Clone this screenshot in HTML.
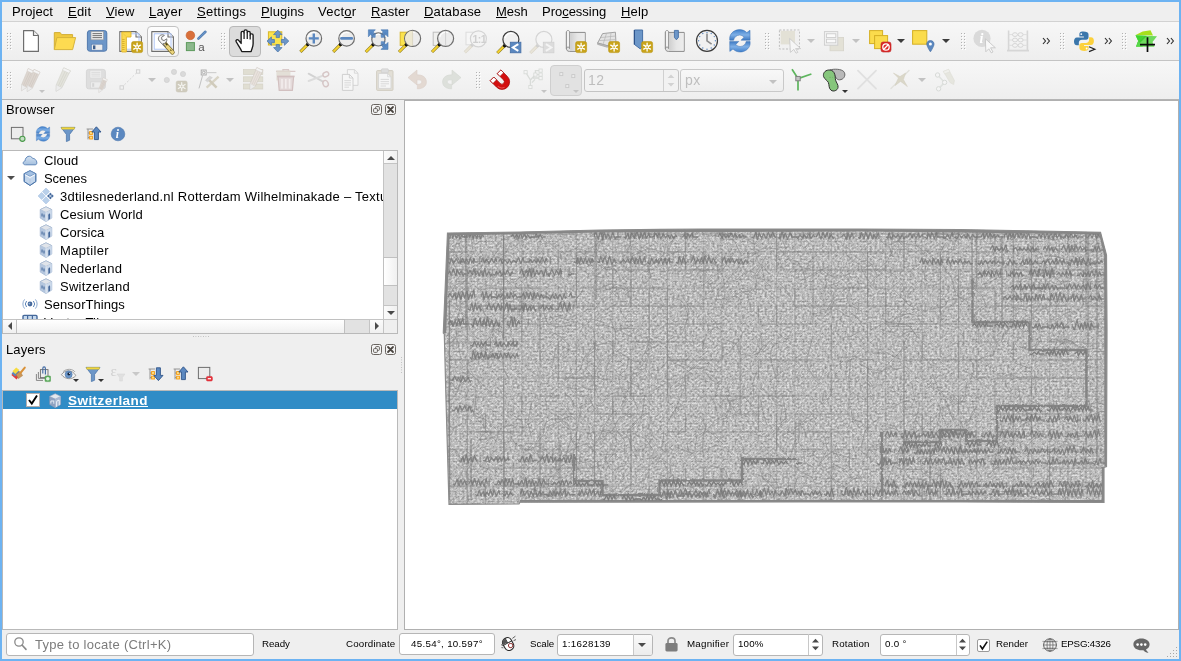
<!DOCTYPE html>
<html>
<head>
<meta charset="utf-8">
<title>QGIS</title>
<style>
*{box-sizing:border-box;margin:0;padding:0}
html,body{width:1181px;height:661px;overflow:hidden;background:#6db3f2}
body{position:relative;font-family:"Liberation Sans",sans-serif;font-size:13px;letter-spacing:0.27px;color:#000}
.abs{position:absolute}
#menubar span,.row,.ptitle,.sb,.gt,.ic,.sic{will-change:transform}
#win{position:absolute;left:2px;top:2px;width:1177px;height:657px;background:#efefef;overflow:hidden}
/* menu */
#menubar{position:absolute;left:0;top:0;width:1177px;height:19px;background:#efefef}
#menubar span{position:absolute;top:2px;height:16px;line-height:16px;white-space:nowrap}
#menubar u{text-decoration:underline;text-underline-offset:1px}
.hline{position:absolute;left:0;width:1177px;height:1px}
/* toolbars */
.tb{position:absolute;left:0;width:1177px;height:38px;background:linear-gradient(#f7f7f7,#eeeeee)}
.ic{position:absolute;width:24px;height:24px}
.ic svg{display:block;width:24px;height:24px;overflow:visible}
.grip{position:absolute;width:5px;height:22px;background-image:radial-gradient(circle at 0.5px 0.5px,#b4b4b4 0.6px,transparent 0.8px);background-size:3px 3px}
.dd{position:absolute;width:0;height:0;border-left:4px solid transparent;border-right:4px solid transparent;border-top:4px solid #3c3c3c}
.dd.dis{border-top-color:#c2c2c2}
.chev{position:absolute;width:10px;height:9px}
.chev svg{display:block}
/* panels */
.ptitle{position:absolute;left:4px;height:16px;line-height:16px}
.pbtn{position:absolute;width:11px;height:11px}
.tree{position:absolute;background:#fff;border:1px solid #b9b9b9}
.row{position:absolute;left:0;height:18px;line-height:18px;white-space:nowrap}
.sic{position:absolute;width:16px;height:16px}
.sic svg{display:block;width:16px;height:16px;overflow:visible}
/* status */
.sb{position:absolute;font-size:9.75px;letter-spacing:0.2px;line-height:14px;white-space:nowrap}
.field{position:absolute;background:#fff;border:1px solid #b6b6b6;border-radius:3px}
</style>
</head>
<body>
<div id="win">
<svg width="0" height="0" style="position:absolute"><defs>
<linearGradient id="gscr" x1="0" y1="0" x2="1" y2="0"><stop offset="0" stop-color="#cfcfcf"/><stop offset="0.5" stop-color="#e6e6e6"/><stop offset="1" stop-color="#ededed"/></linearGradient>
<linearGradient id="gref" x1="0" y1="0" x2="0" y2="1"><stop offset="0" stop-color="#3f7fcb"/><stop offset="0.5" stop-color="#7fb0e6"/><stop offset="1" stop-color="#3c78c2"/></linearGradient>
<linearGradient id="gcl" x1="0" y1="0" x2="0" y2="1"><stop offset="0" stop-color="#d3e1f1"/><stop offset="1" stop-color="#a5c0de"/></linearGradient>
</defs></svg>

<!-- MENUBAR -->
<div id="menubar">
<span style="left:10px;letter-spacing:0.085px">Project</span>
<span style="left:66px;letter-spacing:0.211px"><u>E</u>dit</span>
<span style="left:104px;letter-spacing:0.133px"><u>V</u>iew</span>
<span style="left:147px;letter-spacing:0.188px"><u>L</u>ayer</span>
<span style="left:195px;letter-spacing:0.279px"><u>S</u>ettings</span>
<span style="left:259px;letter-spacing:0.049px"><u>P</u>lugins</span>
<span style="left:316px;letter-spacing:0.232px">Vect<u>o</u>r</span>
<span style="left:369px;letter-spacing:0.068px"><u>R</u>aster</span>
<span style="left:422px;letter-spacing:0.201px"><u>D</u>atabase</span>
<span style="left:494px;letter-spacing:-0.051px"><u>M</u>esh</span>
<span style="left:540px;letter-spacing:-0.023px">Pro<u>c</u>essing</span>
<span style="left:619px;letter-spacing:0.152px"><u>H</u>elp</span>
</div>
<div class="hline" style="top:19px;background:#d2d2d2"></div>

<!-- TOOLBAR 1 -->
<div class="tb" id="tb1" style="top:20px">
<div class="abs" style="left:5px;top:11px"><svg width="6" height="18" viewBox="0 0 6 18" style="display:block"><rect x="1" y="1" width="1" height="1" fill="#fff"/><rect x="0" y="0" width="1" height="1" fill="#b2b2b2"/><rect x="4" y="1" width="1" height="1" fill="#fff"/><rect x="3" y="0" width="1" height="1" fill="#b2b2b2"/><rect x="1" y="4" width="1" height="1" fill="#fff"/><rect x="0" y="3" width="1" height="1" fill="#b2b2b2"/><rect x="4" y="4" width="1" height="1" fill="#fff"/><rect x="3" y="3" width="1" height="1" fill="#b2b2b2"/><rect x="1" y="7" width="1" height="1" fill="#fff"/><rect x="0" y="6" width="1" height="1" fill="#b2b2b2"/><rect x="4" y="7" width="1" height="1" fill="#fff"/><rect x="3" y="6" width="1" height="1" fill="#b2b2b2"/><rect x="1" y="10" width="1" height="1" fill="#fff"/><rect x="0" y="9" width="1" height="1" fill="#b2b2b2"/><rect x="4" y="10" width="1" height="1" fill="#fff"/><rect x="3" y="9" width="1" height="1" fill="#b2b2b2"/><rect x="1" y="13" width="1" height="1" fill="#fff"/><rect x="0" y="12" width="1" height="1" fill="#b2b2b2"/><rect x="4" y="13" width="1" height="1" fill="#fff"/><rect x="3" y="12" width="1" height="1" fill="#b2b2b2"/><rect x="1" y="16" width="1" height="1" fill="#fff"/><rect x="0" y="15" width="1" height="1" fill="#b2b2b2"/><rect x="4" y="16" width="1" height="1" fill="#fff"/><rect x="3" y="15" width="1" height="1" fill="#b2b2b2"/></svg></div>
<div class="abs" style="left:145px;top:4px;width:32px;height:31px;border:1px solid #c2c2c2;border-radius:4px;background:linear-gradient(#fdfdfd,#f3f3f3)"></div>
<div class="abs" style="left:227px;top:4px;width:32px;height:31px;border:1px solid #b8b8b8;border-radius:4px;background:#dcdcdc"></div>
<div class="ic" style="left:17px;top:7px"><svg viewBox="0 0 24 24"><path d="M4.6 1.6H14.5L19.4 6.5V22.4H4.6Z" fill="#fff" stroke="#6e6e6e" stroke-width="1.2" stroke-linejoin="round"/><path d="M14.5 1.6V6.5H19.4" fill="#f0f0f0" stroke="#6e6e6e" stroke-width="1.2" stroke-linejoin="round"/></svg></div>
<div class="ic" style="left:49.5px;top:7px"><svg viewBox="0 0 24 24"><path d="M2.3 20.5V3.6H8.2L9.6 5.6H20.6V8.6" fill="#f0c93e" stroke="#d2ae35" stroke-width="1" stroke-linejoin="round"/><path d="M2.3 20.6L4.9 8.6H23.6L20.6 20.6Z" fill="#fddb51" stroke="#d6b33a" stroke-width="1" stroke-linejoin="round"/></svg></div>
<div class="ic" style="left:83px;top:7px"><svg viewBox="0 0 24 24"><rect x="2.4" y="1.6" width="19.4" height="20.6" rx="2.4" fill="#6c96c8" stroke="#5179ad" stroke-width="1"/><rect x="6" y="2.6" width="12.4" height="8.2" fill="#ececec" stroke="#9a9a9a" stroke-width="0.6"/><path d="M7.5 4.6H17M7.5 6.6H17M7.5 8.6H17" stroke="#666" stroke-width="0.9"/><rect x="6.4" y="15.2" width="11.4" height="6" fill="#ececec" stroke="#5179ad" stroke-width="0.6"/><rect x="8" y="16.4" width="2.4" height="3.8" fill="#3f5f8c"/></svg></div>
<div class="ic" style="left:116.5px;top:7px"><svg viewBox="0 0 24 24"><path d="M0.8 2.6H17L22.4 8V22.4H0.8Z" fill="#fff" stroke="#6e6e6e" stroke-width="1.1" stroke-linejoin="round"/><path d="M17 2.6V8H22.4" fill="#f4f4f4" stroke="#6e6e6e" stroke-width="1.1" stroke-linejoin="round"/><rect x="3.4" y="4.8" width="16.6" height="15.4" fill="none" stroke="#a9c0f5" stroke-width="0.9"/><path d="M2.8 3H12V8H7.4V23H2.8Z" fill="#fbd84e" stroke="#e0b62c" stroke-width="0.9" stroke-linejoin="round"/><path d="M3.2 10.5H5.6M3.2 12.5H5.6M3.2 14.5H5.6M3.2 16.5H5.6M3.2 18.5H5.6M3.2 20.5H5.6" stroke="#c9a226" stroke-width="0.7"/><path d="M4 4.4L7 7.4" stroke="#e9c541" stroke-width="0.8"/><rect x="12.6" y="12.6" width="11" height="11" rx="1.8" fill="#c9a41b" stroke="#b8930f" stroke-width="0.6"/>
<g stroke="#fff" stroke-width="1.3" stroke-linecap="round"><path d="M18.1 14.2V22.0M14.7 16.1L21.5 20.1M14.7 20.1L21.5 16.1"/></g><circle cx="18.1" cy="18.1" r="1.9" fill="#fff"/><circle cx="18.1" cy="18.1" r="0.9" fill="#c9a41b"/></svg></div>
<div class="ic" style="left:149px;top:7px"><svg viewBox="0 0 24 24"><path d="M0.8 2.6H17L22.4 8V22.4H0.8Z" fill="#fff" stroke="#6e6e6e" stroke-width="1.1" stroke-linejoin="round"/><path d="M17 2.6V8H22.4" fill="#f4f4f4" stroke="#6e6e6e" stroke-width="1.1" stroke-linejoin="round"/><rect x="3.2" y="4.8" width="16.8" height="15.4" fill="none" stroke="#a9c0f5" stroke-width="0.9"/><path d="M13.6 14.6L21.4 23.2" stroke="#7a6a2a" stroke-width="4.6" stroke-linecap="round"/><path d="M13.6 14.6L21.4 23.2" stroke="#ecd57c" stroke-width="3.2" stroke-linecap="round"/><path d="M14.6 14.2L16.4 16.2" stroke="#4a3f12" stroke-width="1.6"/><path d="M19.2 20.6L20.4 21.9" stroke="#6b5c1e" stroke-width="1.1"/><path d="M7.6 10.8C6.8 8.6 8.4 6 11.2 5.8C12 5.8 12.8 6 13.4 6.4L10.6 8.2L10.8 10.6L13 11.6L15.8 9.8C16.2 12.4 14.6 14.6 12 14.8L14.6 17.6L11.6 15.6L10 13.6C8.8 13 8 12 7.6 10.8Z" fill="#f4f4f4" stroke="#787878" stroke-width="1" stroke-linejoin="round"/></svg></div>
<div class="ic" style="left:182px;top:7px"><svg viewBox="0 0 24 24"><circle cx="6.4" cy="6.4" r="4.3" fill="#d9703b" stroke="#c45f2c" stroke-width="0.6"/><path d="M14.4 9.6L21.4 2.8" stroke="#4e79ad" stroke-width="2.6" stroke-linecap="round"/><path d="M14.4 9.6L21.4 2.8" stroke="#6b96c9" stroke-width="1.2" stroke-linecap="round"/><rect x="2.4" y="13.6" width="8" height="8" fill="#8cb88c" stroke="#5d9a5d" stroke-width="1"/><text x="14.2" y="21.6" font-family="Liberation Sans,sans-serif" font-size="11.5" fill="#555" letter-spacing="0">a</text></svg></div>
<div class="abs" style="left:219px;top:11px"><svg width="6" height="18" viewBox="0 0 6 18" style="display:block"><rect x="1" y="1" width="1" height="1" fill="#fff"/><rect x="0" y="0" width="1" height="1" fill="#b2b2b2"/><rect x="4" y="1" width="1" height="1" fill="#fff"/><rect x="3" y="0" width="1" height="1" fill="#b2b2b2"/><rect x="1" y="4" width="1" height="1" fill="#fff"/><rect x="0" y="3" width="1" height="1" fill="#b2b2b2"/><rect x="4" y="4" width="1" height="1" fill="#fff"/><rect x="3" y="3" width="1" height="1" fill="#b2b2b2"/><rect x="1" y="7" width="1" height="1" fill="#fff"/><rect x="0" y="6" width="1" height="1" fill="#b2b2b2"/><rect x="4" y="7" width="1" height="1" fill="#fff"/><rect x="3" y="6" width="1" height="1" fill="#b2b2b2"/><rect x="1" y="10" width="1" height="1" fill="#fff"/><rect x="0" y="9" width="1" height="1" fill="#b2b2b2"/><rect x="4" y="10" width="1" height="1" fill="#fff"/><rect x="3" y="9" width="1" height="1" fill="#b2b2b2"/><rect x="1" y="13" width="1" height="1" fill="#fff"/><rect x="0" y="12" width="1" height="1" fill="#b2b2b2"/><rect x="4" y="13" width="1" height="1" fill="#fff"/><rect x="3" y="12" width="1" height="1" fill="#b2b2b2"/><rect x="1" y="16" width="1" height="1" fill="#fff"/><rect x="0" y="15" width="1" height="1" fill="#b2b2b2"/><rect x="4" y="16" width="1" height="1" fill="#fff"/><rect x="3" y="15" width="1" height="1" fill="#b2b2b2"/></svg></div>
<div class="ic" style="left:231px;top:7px"><svg viewBox="0 0 24 24"><g transform="translate(-0.9,-1) scale(1.13,1.045)"><path d="M8.6 22.6C7.6 19.6 5.2 16.4 3.6 13.2C2.8 11.6 4.6 10.4 5.8 11.8L8 14.8V4.6C8 2.8 10.6 2.8 10.6 4.6V3.2C10.6 1.4 13.4 1.4 13.4 3.2V4.4C13.4 2.8 16 2.8 16 4.6V6.6C16 5.2 18.6 5.2 18.6 7V15C18.6 18 17.4 19.8 16.8 22.6Z" fill="#fff" stroke="#1a1a1a" stroke-width="1.2" stroke-linejoin="round"/><path d="M10.6 4.6V10.6M13.4 4.4V10.6M16 6.6V11" stroke="#1a1a1a" stroke-width="1.1" fill="none"/></g></svg></div>
<div class="ic" style="left:264px;top:7px"><svg viewBox="0 0 24 24"><rect x="2.4" y="2.8" width="13.4" height="13.2" fill="#fbe34d" stroke="#d7b629" stroke-width="1"/><g fill="#6c96c8" stroke="#4f78ab" stroke-width="0.8" stroke-linejoin="round"><path d="M11.8 1.2L16 5.6H13.4V8.6H10.2V5.6H7.6Z"/><path d="M11.8 23L16 18.6H13.4V15.6H10.2V18.6H7.6Z"/><path d="M1 12.1L5.4 7.9V10.5H8.4V13.7H5.4V16.3Z"/><path d="M22.8 12.1L18.4 7.9V10.5H15.4V13.7H18.4V16.3Z"/></g></svg></div>
<div class="ic" style="left:297px;top:7px"><svg viewBox="0 0 24 24"><path d="M9.0 15.2L1.4 22.8" stroke="#8a7a20" stroke-width="3.1" stroke-linecap="butt"/><path d="M9.0 15.2L1.6 22.6" stroke="#f5d230" stroke-width="2" stroke-linecap="butt"/><circle cx="8.7" cy="15.5" r="1.7" fill="#111"/><circle cx="14.8" cy="9.4" r="7.8" fill="#ececec" stroke="#6e6e6e" stroke-width="1.2"/><path d="M9.2 8.2A5.8 5.8 0 0 1 17.1 3.8" stroke="#fff" stroke-width="1.4" fill="none" opacity="0.9"/><path d="M14.8 4.4V14.4M9.8 9.4H19.8" stroke="#5b88c0" stroke-width="2.4"/></svg></div>
<div class="ic" style="left:330px;top:7px"><svg viewBox="0 0 24 24"><path d="M8.8 15.2L1.2 22.8" stroke="#8a7a20" stroke-width="3.1" stroke-linecap="butt"/><path d="M8.8 15.2L1.4 22.6" stroke="#f5d230" stroke-width="2" stroke-linecap="butt"/><circle cx="8.5" cy="15.5" r="1.7" fill="#111"/><circle cx="14.6" cy="9.4" r="7.8" fill="#ececec" stroke="#6e6e6e" stroke-width="1.2"/><path d="M9.0 8.2A5.8 5.8 0 0 1 16.9 3.8" stroke="#fff" stroke-width="1.4" fill="none" opacity="0.9"/><path d="M9.4 9.4H19.8" stroke="#5b88c0" stroke-width="2.6" stroke-linecap="round"/></svg></div>
<div class="ic" style="left:363px;top:7px"><svg viewBox="0 0 24 24"><g fill="#5b8cc6" stroke="#4a78b0" stroke-width="0.6" stroke-linejoin="round"><path d="M3.4 0.8H10.4L8.2 3L11 5.8L8.4 8.4L5.6 5.6L3.4 7.8Z"/><path d="M23 0.8H16L18.2 3L15.4 5.8L18 8.4L20.8 5.6L23 7.8Z"/><path d="M23 20.4H16L18.2 18.2L15.4 15.4L18 12.8L20.8 15.6L23 13.4Z"/></g><path d="M8.4 15.4L0.8 23.0" stroke="#8a7a20" stroke-width="3.1" stroke-linecap="butt"/><path d="M8.4 15.4L1.0 22.8" stroke="#f5d230" stroke-width="2" stroke-linecap="butt"/><circle cx="8.1" cy="15.7" r="1.7" fill="#111"/><circle cx="13.4" cy="10.4" r="6.6" fill="#e9e9e9" stroke="#6e6e6e" stroke-width="1.2"/><path d="M8.6 9.4A4.9 4.9 0 0 1 15.4 5.6" stroke="#fff" stroke-width="1.4" fill="none" opacity="0.9"/><g fill="#5b8cc6" stroke="#4a78b0" stroke-width="0.5" stroke-linejoin="round"><path d="M6.2 3.6L8.6 6L10.4 4.2L10.2 8.4L6 8.2L7.6 6.8L5.4 4.6Z" opacity="0.95"/><path d="M20.2 3.6L17.8 6L16 4.2L16.2 8.4L20.4 8.2L18.8 6.8L21 4.6Z" opacity="0.95"/><path d="M20.2 17.4L17.8 15L16 16.8L16.2 12.6L20.4 12.8L18.8 14.2L21 16.4Z" opacity="0.95"/></g></svg></div>
<div class="ic" style="left:396px;top:7px"><svg viewBox="0 0 24 24"><rect x="2.2" y="3.2" width="9" height="13.2" fill="#fbe34d" stroke="#d7b629" stroke-width="1"/><path d="M8.6 15.4L1.0 23.0" stroke="#8a7a20" stroke-width="3.1" stroke-linecap="butt"/><path d="M8.6 15.4L1.2 22.8" stroke="#f5d230" stroke-width="2" stroke-linecap="butt"/><circle cx="8.3" cy="15.7" r="1.7" fill="#111"/><circle cx="14.6" cy="9.4" r="8" fill="#ececec" stroke="#6e6e6e" stroke-width="1.2"/><path d="M8.8 8.2A6.0 6.0 0 0 1 17.0 3.6" stroke="#fff" stroke-width="1.4" fill="none" opacity="0.9"/><path d="M14.6 1.8A7.6 7.6 0 0 0 14.6 17Z" fill="#ede8cf" opacity="0.9"/><path d="M14.6 1.8V17" stroke="#cfcab0" stroke-width="0.6"/></svg></div>
<div class="ic" style="left:429px;top:7px"><svg viewBox="0 0 24 24"><rect x="2.2" y="3.2" width="9" height="13.2" fill="#f0f0ee" stroke="#bdbdbd" stroke-width="1"/><path d="M8.6 15.4L1.0 23.0" stroke="#8a7a20" stroke-width="3.1" stroke-linecap="butt"/><path d="M8.6 15.4L1.2 22.8" stroke="#f5d230" stroke-width="2" stroke-linecap="butt"/><circle cx="8.3" cy="15.7" r="1.7" fill="#111"/><circle cx="14.6" cy="9.4" r="8" fill="#ececec" stroke="#6e6e6e" stroke-width="1.2"/><path d="M8.8 8.2A6.0 6.0 0 0 1 17.0 3.6" stroke="#fff" stroke-width="1.4" fill="none" opacity="0.9"/><path d="M14.6 1.8V17" stroke="#c8c8c8" stroke-width="0.8"/></svg></div>
<div class="ic" style="left:462px;top:7px"><svg viewBox="0 0 24 24"><rect x="2" y="3.2" width="9" height="12.6" fill="#f6f6f6" stroke="#dcdcdc" stroke-width="1"/><path d="M8.4 15.8L0.8 23.4" stroke="#d8d4c8" stroke-width="3.1" stroke-linecap="butt"/><path d="M8.4 15.8L1.0 23.2" stroke="#e8e4d8" stroke-width="2" stroke-linecap="butt"/><circle cx="8.1" cy="16.1" r="1.7" fill="#d0d0d0"/><circle cx="14.4" cy="9.8" r="8" fill="#f4f4f4" stroke="#d4d4d4" stroke-width="1.2"/><text x="8.6" y="14" font-family="Liberation Sans,sans-serif" font-weight="bold" font-size="10.5" fill="#cfcfcf" letter-spacing="-0.6">1:1</text></svg></div>
<div class="ic" style="left:495px;top:7px"><svg viewBox="0 0 24 24"><g transform="translate(0.9,0.8)"><path d="M7.0 15.6L-0.6 23.2" stroke="#8a7a20" stroke-width="3.1" stroke-linecap="butt"/><path d="M7.0 15.6L-0.4 23.0" stroke="#f5d230" stroke-width="2" stroke-linecap="butt"/><circle cx="6.7" cy="15.9" r="1.7" fill="#111"/><circle cx="13" cy="9.6" r="8" fill="#f0f0f0" stroke="#3a3a3a" stroke-width="1.2"/><path d="M7.2 8.4A6.0 6.0 0 0 1 15.4 3.8" stroke="#fff" stroke-width="1.4" fill="none" opacity="0.9"/><rect x="12.4" y="12.4" width="10.6" height="10.6" fill="#5b88c0" stroke="#456fa5" stroke-width="0.8"/><path d="M20.4 14.4L15 17.7L20.4 21" stroke="#fff" stroke-width="2" fill="none" stroke-linejoin="miter"/></g></svg></div>
<div class="ic" style="left:528px;top:7px"><svg viewBox="0 0 24 24"><g transform="translate(0.9,0.8)"><path d="M7.0 15.6L-0.6 23.2" stroke="#d8d4c8" stroke-width="3.1" stroke-linecap="butt"/><path d="M7.0 15.6L-0.4 23.0" stroke="#e8e4d8" stroke-width="2" stroke-linecap="butt"/><circle cx="6.7" cy="15.9" r="1.7" fill="#d0d0d0"/><circle cx="13" cy="9.6" r="8" fill="#f4f4f4" stroke="#d4d4d4" stroke-width="1.2"/><rect x="12.4" y="12.4" width="10.6" height="10.6" fill="#dcdcdc" stroke="#d0d0d0" stroke-width="0.8"/><path d="M15 14.4L20.4 17.7L15 21" stroke="#f4f4f4" stroke-width="2" fill="none"/></g></svg></div>
<div class="ic" style="left:561px;top:7px"><svg viewBox="0 0 24 24"><path d="M3.4 3V19.4C3.4 21.4 4.6 22.4 6.4 22.4H22.2V3.4H6.6" fill="#e2e2e2" stroke="#8a8a8a" stroke-width="1" stroke-linejoin="round"/><path d="M3.4 3C3.4 1 6.6 1 6.6 3V19.6C6.6 17.6 3.4 17.6 3.4 19.6Z" fill="#f2f2f2" stroke="#8a8a8a" stroke-width="0.9"/><path d="M7.2 4H21.6V21.6H7.2Z" fill="url(#gscr)" stroke="none"/><rect x="12.6" y="12.6" width="11" height="11" rx="1.8" fill="#c9a41b" stroke="#b8930f" stroke-width="0.6"/>
<g stroke="#fff" stroke-width="1.3" stroke-linecap="round"><path d="M18.1 14.2V22.0M14.7 16.1L21.5 20.1M14.7 20.1L21.5 16.1"/></g><circle cx="18.1" cy="18.1" r="1.9" fill="#fff"/><circle cx="18.1" cy="18.1" r="0.9" fill="#c9a41b"/></svg></div>
<div class="ic" style="left:594px;top:7px"><svg viewBox="0 0 24 24"><path d="M6.6 4.6L19.4 3.2L20 14.6L11 16.6L1.6 14Z" fill="#e4e4e4" stroke="#9a9a9a" stroke-width="0.9" stroke-linejoin="round"/><path d="M1.6 14L11 16.6L20 14.6V16L11 18.2L1.6 15.4Z" fill="#bdbdbd" stroke="#9a9a9a" stroke-width="0.6"/><path d="M10.6 4.2L7 15.4M15 3.8L13.6 16M4.6 8.6L19.6 7M3 11.6L19.8 10.6" stroke="#b4b4b4" stroke-width="0.7" fill="none"/><rect x="12.6" y="12.6" width="11" height="11" rx="1.8" fill="#c9a41b" stroke="#b8930f" stroke-width="0.6"/>
<g stroke="#fff" stroke-width="1.3" stroke-linecap="round"><path d="M18.1 14.2V22.0M14.7 16.1L21.5 20.1M14.7 20.1L21.5 16.1"/></g><circle cx="18.1" cy="18.1" r="1.9" fill="#fff"/><circle cx="18.1" cy="18.1" r="0.9" fill="#c9a41b"/></svg></div>
<div class="ic" style="left:627px;top:7px"><svg viewBox="0 0 24 24"><path d="M5.4 1H13.6V17.4L11.4 20L5.4 15.4Z" fill="#6c96c8" stroke="#456fa5" stroke-width="1" stroke-linejoin="round"/><path d="M5.4 1V15.4" stroke="#2e538a" stroke-width="1.2"/><rect x="12.6" y="12.6" width="11" height="11" rx="1.8" fill="#c9a41b" stroke="#b8930f" stroke-width="0.6"/>
<g stroke="#fff" stroke-width="1.3" stroke-linecap="round"><path d="M18.1 14.2V22.0M14.7 16.1L21.5 20.1M14.7 20.1L21.5 16.1"/></g><circle cx="18.1" cy="18.1" r="1.9" fill="#fff"/><circle cx="18.1" cy="18.1" r="0.9" fill="#c9a41b"/></svg></div>
<div class="ic" style="left:660px;top:7px"><svg viewBox="0 0 24 24"><path d="M3.4 3V19.4C3.4 21.4 4.6 22.4 6.4 22.4H22.2V3.4H6.6" fill="#e2e2e2" stroke="#8a8a8a" stroke-width="1" stroke-linejoin="round"/><path d="M3.4 3C3.4 1 6.6 1 6.6 3V19.6C6.6 17.6 3.4 17.6 3.4 19.6Z" fill="#f2f2f2" stroke="#8a8a8a" stroke-width="0.9"/><path d="M7.2 4H21.6V21.6H7.2Z" fill="url(#gscr)" stroke="none"/><path d="M12.4 1.4H16.4V8.4L14.4 10.8L12.4 8.4Z" fill="#6c96c8" stroke="#456fa5" stroke-width="0.9" stroke-linejoin="round"/></svg></div>
<div class="ic" style="left:693px;top:7px"><svg viewBox="0 0 24 24"><circle cx="12" cy="11.8" r="10.5" fill="#f1f1f1" stroke="#3c3c3c" stroke-width="1.2"/><circle cx="20.40" cy="11.80" r="0.7" fill="#5b88c0"/><circle cx="19.27" cy="16.00" r="0.7" fill="#5b88c0"/><circle cx="16.20" cy="19.07" r="0.7" fill="#5b88c0"/><circle cx="12.00" cy="20.20" r="0.7" fill="#5b88c0"/><circle cx="7.80" cy="19.07" r="0.7" fill="#5b88c0"/><circle cx="4.73" cy="16.00" r="0.7" fill="#5b88c0"/><circle cx="3.60" cy="11.80" r="0.7" fill="#5b88c0"/><circle cx="4.73" cy="7.60" r="0.7" fill="#5b88c0"/><circle cx="7.80" cy="4.53" r="0.7" fill="#5b88c0"/><circle cx="12.00" cy="3.40" r="0.7" fill="#5b88c0"/><circle cx="16.20" cy="4.53" r="0.7" fill="#5b88c0"/><circle cx="19.27" cy="7.60" r="0.7" fill="#5b88c0"/><path d="M12 4.6V11.8L16.6 15.2" stroke="#8c8c8c" stroke-width="1.6" fill="none"/></svg></div>
<div class="ic" style="left:726px;top:7px"><svg viewBox="0 0 24 24"><path id="rfa" d="M1.7 11.2V8.4C2.6 3.6 7 0.6 11.6 0.6C14.6 0.6 17 1.8 18.8 3.6L22 1.2L22.1 11.2H13L16 8.2C14.8 6.8 13.2 6.1 11.6 6.1C8.6 6.1 6.2 8.2 5.6 11.2Z" fill="url(#gref)" stroke="#3b70b3" stroke-width="0.5" stroke-linejoin="round"/><path d="M1.7 11.2V8.4C2.6 3.6 7 0.6 11.6 0.6C14.6 0.6 17 1.8 18.8 3.6L22 1.2L22.1 11.2H13L16 8.2C14.8 6.8 13.2 6.1 11.6 6.1C8.6 6.1 6.2 8.2 5.6 11.2Z" fill="url(#gref)" stroke="#3b70b3" stroke-width="0.5" stroke-linejoin="round" transform="rotate(180 11.9 11.8)"/></svg></div>
<div class="abs" style="left:763px;top:11px"><svg width="6" height="18" viewBox="0 0 6 18" style="display:block"><rect x="1" y="1" width="1" height="1" fill="#fff"/><rect x="0" y="0" width="1" height="1" fill="#b2b2b2"/><rect x="4" y="1" width="1" height="1" fill="#fff"/><rect x="3" y="0" width="1" height="1" fill="#b2b2b2"/><rect x="1" y="4" width="1" height="1" fill="#fff"/><rect x="0" y="3" width="1" height="1" fill="#b2b2b2"/><rect x="4" y="4" width="1" height="1" fill="#fff"/><rect x="3" y="3" width="1" height="1" fill="#b2b2b2"/><rect x="1" y="7" width="1" height="1" fill="#fff"/><rect x="0" y="6" width="1" height="1" fill="#b2b2b2"/><rect x="4" y="7" width="1" height="1" fill="#fff"/><rect x="3" y="6" width="1" height="1" fill="#b2b2b2"/><rect x="1" y="10" width="1" height="1" fill="#fff"/><rect x="0" y="9" width="1" height="1" fill="#b2b2b2"/><rect x="4" y="10" width="1" height="1" fill="#fff"/><rect x="3" y="9" width="1" height="1" fill="#b2b2b2"/><rect x="1" y="13" width="1" height="1" fill="#fff"/><rect x="0" y="12" width="1" height="1" fill="#b2b2b2"/><rect x="4" y="13" width="1" height="1" fill="#fff"/><rect x="3" y="12" width="1" height="1" fill="#b2b2b2"/><rect x="1" y="16" width="1" height="1" fill="#fff"/><rect x="0" y="15" width="1" height="1" fill="#b2b2b2"/><rect x="4" y="16" width="1" height="1" fill="#fff"/><rect x="3" y="15" width="1" height="1" fill="#b2b2b2"/></svg></div>
<div class="ic" style="left:776px;top:7px"><svg viewBox="0 0 24 24"><rect x="2.6" y="1.8" width="14.4" height="13.6" fill="#e3e1d6" stroke="none"/><rect x="1.4" y="1" width="20" height="19" fill="none" stroke="#bdbdbd" stroke-width="1" stroke-dasharray="2 1.6"/><rect x="17" y="1.8" width="4" height="17.6" fill="#f0f0f0"/><path d="M11.6 9.4L22.6 19.6H17.6L19.8 23.4L18 24.2L15.8 20.4L12.4 23.4Z" fill="#f6f6f6" stroke="#c9c9c9" stroke-width="0.9" stroke-linejoin="round"/></svg></div>
<div class="dd dis" style="left:805px;top:17px"></div>
<div class="ic" style="left:820px;top:7px"><svg viewBox="0 0 24 24"><rect x="8" y="8.4" width="13.6" height="13.4" fill="#e3e1d6" stroke="#d6d4ca" stroke-width="0.8"/><rect x="2.4" y="2.6" width="13.4" height="13.6" fill="#f1f1f1" stroke="#cdcdcd" stroke-width="0.9"/><rect x="4.4" y="4.8" width="9.4" height="3.6" fill="#fafafa" stroke="#c9c9c9" stroke-width="0.8"/><rect x="4.4" y="10.2" width="9.4" height="3.6" fill="#fafafa" stroke="#c9c9c9" stroke-width="0.8"/></svg></div>
<div class="dd dis" style="left:850px;top:17px"></div>
<div class="ic" style="left:866px;top:7px"><svg viewBox="0 0 24 24"><rect x="1.6" y="1.6" width="13" height="13" fill="#fbdc4c" stroke="#d4af24" stroke-width="1"/><rect x="6.6" y="6.6" width="13" height="13" fill="#fbdc4c" stroke="#d4af24" stroke-width="1"/><rect x="13" y="13" width="10" height="10" rx="2.2" fill="#dc2a2a" stroke="#b81e1e" stroke-width="0.6"/><circle cx="18" cy="18" r="3.2" fill="none" stroke="#fff" stroke-width="1.3"/><path d="M15.8 20.2L20.2 15.8" stroke="#fff" stroke-width="1.3"/></svg></div>
<div class="dd" style="left:895px;top:17px"></div>
<div class="ic" style="left:909px;top:7px"><svg viewBox="0 0 24 24"><rect x="1.6" y="1.6" width="14.2" height="13.6" fill="#fbdc4c" stroke="#d4af24" stroke-width="1"/><path d="M19.4 11.6C21.8 11.6 23 13.4 23 15C23 17.6 19.4 22.8 19.4 22.8C19.4 22.8 15.8 17.6 15.8 15C15.8 13.4 17 11.6 19.4 11.6Z" fill="#5b88c0" stroke="#456fa5" stroke-width="0.7"/><circle cx="19.4" cy="15" r="1.5" fill="#fff"/></svg></div>
<div class="dd" style="left:940px;top:17px"></div>
<div class="abs" style="left:959px;top:11px"><svg width="6" height="18" viewBox="0 0 6 18" style="display:block"><rect x="1" y="1" width="1" height="1" fill="#fff"/><rect x="0" y="0" width="1" height="1" fill="#b2b2b2"/><rect x="4" y="1" width="1" height="1" fill="#fff"/><rect x="3" y="0" width="1" height="1" fill="#b2b2b2"/><rect x="1" y="4" width="1" height="1" fill="#fff"/><rect x="0" y="3" width="1" height="1" fill="#b2b2b2"/><rect x="4" y="4" width="1" height="1" fill="#fff"/><rect x="3" y="3" width="1" height="1" fill="#b2b2b2"/><rect x="1" y="7" width="1" height="1" fill="#fff"/><rect x="0" y="6" width="1" height="1" fill="#b2b2b2"/><rect x="4" y="7" width="1" height="1" fill="#fff"/><rect x="3" y="6" width="1" height="1" fill="#b2b2b2"/><rect x="1" y="10" width="1" height="1" fill="#fff"/><rect x="0" y="9" width="1" height="1" fill="#b2b2b2"/><rect x="4" y="10" width="1" height="1" fill="#fff"/><rect x="3" y="9" width="1" height="1" fill="#b2b2b2"/><rect x="1" y="13" width="1" height="1" fill="#fff"/><rect x="0" y="12" width="1" height="1" fill="#b2b2b2"/><rect x="4" y="13" width="1" height="1" fill="#fff"/><rect x="3" y="12" width="1" height="1" fill="#b2b2b2"/><rect x="1" y="16" width="1" height="1" fill="#fff"/><rect x="0" y="15" width="1" height="1" fill="#b2b2b2"/><rect x="4" y="16" width="1" height="1" fill="#fff"/><rect x="3" y="15" width="1" height="1" fill="#b2b2b2"/></svg></div>
<div class="ic" style="left:971px;top:7px"><svg viewBox="0 0 24 24"><circle cx="9" cy="9.4" r="8.6" fill="#dadada"/><text x="6.4" y="14.2" font-family="Liberation Serif,serif" font-style="italic" font-weight="bold" font-size="14" fill="#fff" letter-spacing="0">i</text><path d="M12.4 9.8L22.4 18.8H17.6L20 23L18.2 23.8L15.8 19.8L12.8 22.8Z" fill="#f8f8f8" stroke="#c6c6c6" stroke-width="0.9" stroke-linejoin="round"/></svg></div>
<div class="ic" style="left:1004px;top:7px"><svg viewBox="0 0 24 24"><path d="M2.6 1.6V21M21.4 1.6V21" stroke="#d6d6d6" stroke-width="1.6"/><path d="M1 21.6H23" stroke="#d6d6d6" stroke-width="1.8"/><path d="M2.6 5.6H21.4M2.6 11H21.4M2.6 16.4H21.4" stroke="#dcdcdc" stroke-width="0.9"/><g fill="#f3f3f3" stroke="#d2d2d2" stroke-width="0.9"><ellipse cx="9" cy="5.6" rx="2.5" ry="1.9"/><ellipse cx="14.6" cy="5.6" rx="2.5" ry="1.9"/><ellipse cx="9" cy="11" rx="2.5" ry="1.9"/><ellipse cx="14.6" cy="11" rx="2.5" ry="1.9"/><ellipse cx="9" cy="16.4" rx="2.5" ry="1.9"/><ellipse cx="14.6" cy="16.4" rx="2.5" ry="1.9"/></g></svg></div>
<div class="chev" style="left:1040.0px;top:14.8px"><svg width="9" height="8" viewBox="0 0 9 8"><path d="M1 1L3.5 4L1 7M4.9 1L7.4 4L4.9 7" stroke="#303030" stroke-width="1.15" fill="none"/></svg></div>
<div class="abs" style="left:1058px;top:11px"><svg width="6" height="18" viewBox="0 0 6 18" style="display:block"><rect x="1" y="1" width="1" height="1" fill="#fff"/><rect x="0" y="0" width="1" height="1" fill="#b2b2b2"/><rect x="4" y="1" width="1" height="1" fill="#fff"/><rect x="3" y="0" width="1" height="1" fill="#b2b2b2"/><rect x="1" y="4" width="1" height="1" fill="#fff"/><rect x="0" y="3" width="1" height="1" fill="#b2b2b2"/><rect x="4" y="4" width="1" height="1" fill="#fff"/><rect x="3" y="3" width="1" height="1" fill="#b2b2b2"/><rect x="1" y="7" width="1" height="1" fill="#fff"/><rect x="0" y="6" width="1" height="1" fill="#b2b2b2"/><rect x="4" y="7" width="1" height="1" fill="#fff"/><rect x="3" y="6" width="1" height="1" fill="#b2b2b2"/><rect x="1" y="10" width="1" height="1" fill="#fff"/><rect x="0" y="9" width="1" height="1" fill="#b2b2b2"/><rect x="4" y="10" width="1" height="1" fill="#fff"/><rect x="3" y="9" width="1" height="1" fill="#b2b2b2"/><rect x="1" y="13" width="1" height="1" fill="#fff"/><rect x="0" y="12" width="1" height="1" fill="#b2b2b2"/><rect x="4" y="13" width="1" height="1" fill="#fff"/><rect x="3" y="12" width="1" height="1" fill="#b2b2b2"/><rect x="1" y="16" width="1" height="1" fill="#fff"/><rect x="0" y="15" width="1" height="1" fill="#b2b2b2"/><rect x="4" y="16" width="1" height="1" fill="#fff"/><rect x="3" y="15" width="1" height="1" fill="#b2b2b2"/></svg></div>
<div class="ic" style="left:1070px;top:7px"><svg viewBox="0 0 24 24"><g transform="translate(0.7,1.3) scale(0.93,0.9)"><path d="M11.4 1.4C7.4 1.4 7.2 3.2 7.2 4.6V7H12V8H4.6C2.4 8 1.4 10 1.4 12.4C1.4 14.8 2.4 16.6 4.6 16.6H6.6V13.6C6.6 11.6 8 10.4 10 10.4H14.4C16 10.4 17 9.4 17 7.8V4.6C17 2.4 14.8 1.4 11.4 1.4Z" fill="#3a76ab"/><circle cx="9.2" cy="4.2" r="1" fill="#fff"/><path d="M12.8 23C16.8 23 17 21.2 17 19.8V17.4H12.2V16.4H19.6C21.8 16.4 22.8 14.4 22.8 12C22.8 9.6 21.8 7.8 19.6 7.8H17.6V10.8C17.6 12.8 16.2 14 14.2 14H9.8C8.2 14 7.2 15 7.2 16.6V19.8C7.2 22 9.4 23 12.8 23Z" fill="#fcd13d"/><circle cx="15" cy="20.2" r="1" fill="#fff"/></g><path d="M17 17.8L22.8 20.2L17 22.6" stroke="#222" stroke-width="1.2" fill="none"/></svg></div>
<div class="chev" style="left:1102.0px;top:14.8px"><svg width="9" height="8" viewBox="0 0 9 8"><path d="M1 1L3.5 4L1 7M4.9 1L7.4 4L4.9 7" stroke="#303030" stroke-width="1.15" fill="none"/></svg></div>
<div class="abs" style="left:1120px;top:11px"><svg width="6" height="18" viewBox="0 0 6 18" style="display:block"><rect x="1" y="1" width="1" height="1" fill="#fff"/><rect x="0" y="0" width="1" height="1" fill="#b2b2b2"/><rect x="4" y="1" width="1" height="1" fill="#fff"/><rect x="3" y="0" width="1" height="1" fill="#b2b2b2"/><rect x="1" y="4" width="1" height="1" fill="#fff"/><rect x="0" y="3" width="1" height="1" fill="#b2b2b2"/><rect x="4" y="4" width="1" height="1" fill="#fff"/><rect x="3" y="3" width="1" height="1" fill="#b2b2b2"/><rect x="1" y="7" width="1" height="1" fill="#fff"/><rect x="0" y="6" width="1" height="1" fill="#b2b2b2"/><rect x="4" y="7" width="1" height="1" fill="#fff"/><rect x="3" y="6" width="1" height="1" fill="#b2b2b2"/><rect x="1" y="10" width="1" height="1" fill="#fff"/><rect x="0" y="9" width="1" height="1" fill="#b2b2b2"/><rect x="4" y="10" width="1" height="1" fill="#fff"/><rect x="3" y="9" width="1" height="1" fill="#b2b2b2"/><rect x="1" y="13" width="1" height="1" fill="#fff"/><rect x="0" y="12" width="1" height="1" fill="#b2b2b2"/><rect x="4" y="13" width="1" height="1" fill="#fff"/><rect x="3" y="12" width="1" height="1" fill="#b2b2b2"/><rect x="1" y="16" width="1" height="1" fill="#fff"/><rect x="0" y="15" width="1" height="1" fill="#b2b2b2"/><rect x="4" y="16" width="1" height="1" fill="#fff"/><rect x="3" y="15" width="1" height="1" fill="#b2b2b2"/></svg></div>
<div class="ic" style="left:1132px;top:7px"><svg viewBox="0 0 24 24"><path d="M1.7 6L8.6 2.4L16.5 1.2L19 6.4Z" fill="#a6e01c"/><path d="M1.5 6.2L23 7.3L18.5 13L20.4 17.8H2L4.2 12Z" fill="#6fda5e"/><path d="M1.5 6.2L10.4 6.8L4.2 12Z" fill="#3fd62f"/><path d="M10.4 6.8L4.2 12L2 17.8L13 7Z" fill="#39c62c" opacity="0.85"/><path d="M4.2 12L2 17.8H9Z" fill="#57d848"/><path d="M6 15.6H21M13.5 8.3V23" stroke="#0a0a0a" stroke-width="1.7"/></svg></div>
<div class="chev" style="left:1164.0px;top:14.8px"><svg width="9" height="8" viewBox="0 0 9 8"><path d="M1 1L3.5 4L1 7M4.9 1L7.4 4L4.9 7" stroke="#303030" stroke-width="1.15" fill="none"/></svg></div>
</div>
<div class="hline" style="top:58px;background:#c4c4c4"></div>
<!-- TOOLBAR 2 -->
<div class="tb" id="tb2" style="top:59px">
<div class="abs" style="left:5px;top:11px"><svg width="6" height="18" viewBox="0 0 6 18" style="display:block"><rect x="1" y="1" width="1" height="1" fill="#fff"/><rect x="0" y="0" width="1" height="1" fill="#b2b2b2"/><rect x="4" y="1" width="1" height="1" fill="#fff"/><rect x="3" y="0" width="1" height="1" fill="#b2b2b2"/><rect x="1" y="4" width="1" height="1" fill="#fff"/><rect x="0" y="3" width="1" height="1" fill="#b2b2b2"/><rect x="4" y="4" width="1" height="1" fill="#fff"/><rect x="3" y="3" width="1" height="1" fill="#b2b2b2"/><rect x="1" y="7" width="1" height="1" fill="#fff"/><rect x="0" y="6" width="1" height="1" fill="#b2b2b2"/><rect x="4" y="7" width="1" height="1" fill="#fff"/><rect x="3" y="6" width="1" height="1" fill="#b2b2b2"/><rect x="1" y="10" width="1" height="1" fill="#fff"/><rect x="0" y="9" width="1" height="1" fill="#b2b2b2"/><rect x="4" y="10" width="1" height="1" fill="#fff"/><rect x="3" y="9" width="1" height="1" fill="#b2b2b2"/><rect x="1" y="13" width="1" height="1" fill="#fff"/><rect x="0" y="12" width="1" height="1" fill="#b2b2b2"/><rect x="4" y="13" width="1" height="1" fill="#fff"/><rect x="3" y="12" width="1" height="1" fill="#b2b2b2"/><rect x="1" y="16" width="1" height="1" fill="#fff"/><rect x="0" y="15" width="1" height="1" fill="#b2b2b2"/><rect x="4" y="16" width="1" height="1" fill="#fff"/><rect x="3" y="15" width="1" height="1" fill="#b2b2b2"/></svg></div>
<div class="ic" style="left:17px;top:7px"><svg viewBox="0 0 24 24"><g transform="translate(1.8,0.2)"><path d="M7.4 0.4L13.4 3.2L5.8 19.2L0.6 22.6L0.8 16.4Z" fill="#ddd6d0" stroke="#cfc8c2" stroke-width="0.5" stroke-linejoin="round"/><path d="M7.4 0.4L13.4 3.2L12.3 5.5L6.3 2.7Z" fill="#f4f4f4" stroke="#cfc8c2" stroke-width="0.4"/><path d="M0.8 16.4L5.8 19.2L0.6 22.6Z" fill="#ececec" stroke="#d6d6d6" stroke-width="0.4"/><path d="M8.6 4L2.6 17.4M10.4 4.8L4.2 18.2" stroke="#ccc4be" stroke-width="0.6"/></g><g transform="translate(7.6,1)"><path d="M7.4 0.4L13.4 3.2L5.8 19.2L0.6 22.6L0.8 16.4Z" fill="#ddd6d0" stroke="#cfc8c2" stroke-width="0.5" stroke-linejoin="round"/><path d="M7.4 0.4L13.4 3.2L12.3 5.5L6.3 2.7Z" fill="#f4f4f4" stroke="#cfc8c2" stroke-width="0.4"/><path d="M0.8 16.4L5.8 19.2L0.6 22.6Z" fill="#ececec" stroke="#d6d6d6" stroke-width="0.4"/><path d="M8.6 4L2.6 17.4M10.4 4.8L4.2 18.2" stroke="#ccc4be" stroke-width="0.6"/></g></svg></div>
<div class="abs" style="left:37px;top:28.5px;width:0;height:0;border-left:3px solid transparent;border-right:3px solid transparent;border-top:3px solid #c4c4c4"></div>
<div class="ic" style="left:50px;top:7px"><svg viewBox="0 0 24 24"><g transform="translate(3.4,-0.6) scale(1.12,1.06)"><g transform="translate(0,0)"><path d="M7.4 0.4L13.4 3.2L5.8 19.2L0.6 22.6L0.8 16.4Z" fill="#e3e3dc" stroke="#cfcfc8" stroke-width="0.5" stroke-linejoin="round"/><path d="M7.4 0.4L13.4 3.2L12.3 5.5L6.3 2.7Z" fill="#f4f4f4" stroke="#cfcfc8" stroke-width="0.4"/><path d="M0.8 16.4L5.8 19.2L0.6 22.6Z" fill="#ececec" stroke="#d6d6d6" stroke-width="0.4"/><path d="M8.6 4L2.6 17.4M10.4 4.8L4.2 18.2" stroke="#d2d2ca" stroke-width="0.6"/></g></g></svg></div>
<div class="ic" style="left:83px;top:7px"><svg viewBox="0 0 24 24"><rect x="1.4" y="1.4" width="19" height="19.4" rx="2.2" fill="#dedede" stroke="#d2d2d2" stroke-width="0.8"/><rect x="5" y="2.4" width="11.6" height="7.6" fill="#eeeeee" stroke="#d6d6d6" stroke-width="0.5"/><path d="M6.4 4.4H15.2M6.4 6.2H15.2M6.4 8H15.2" stroke="#d8d8d8" stroke-width="0.8"/><rect x="5.6" y="14" width="10.4" height="6" fill="#ececec" stroke="#d2d2d2" stroke-width="0.5"/><rect x="7.2" y="15.2" width="2" height="3.6" fill="#d4d4d4"/><g transform="translate(13.4,9.6) scale(0.66)"><g transform="translate(0,0)"><path d="M7.4 0.4L13.4 3.2L5.8 19.2L0.6 22.6L0.8 16.4Z" fill="#ddd6d0" stroke="#cfc8c2" stroke-width="0.5" stroke-linejoin="round"/><path d="M7.4 0.4L13.4 3.2L12.3 5.5L6.3 2.7Z" fill="#f4f4f4" stroke="#cfc8c2" stroke-width="0.4"/><path d="M0.8 16.4L5.8 19.2L0.6 22.6Z" fill="#ececec" stroke="#d6d6d6" stroke-width="0.4"/><path d="M8.6 4L2.6 17.4M10.4 4.8L4.2 18.2" stroke="#ccc4be" stroke-width="0.6"/></g></g></svg></div>
<div class="ic" style="left:116px;top:7px"><svg viewBox="0 0 24 24"><path d="M3.6 19.6L20 3.4" stroke="#d6d6d6" stroke-width="1" stroke-dasharray="2.2 1.6"/><rect x="18.4" y="1.8" width="3.4" height="3.4" fill="#f2f2f2" stroke="#cfcfcf" stroke-width="0.9"/><rect x="2" y="17.8" width="3.4" height="3.4" fill="#f2f2f2" stroke="#cfcfcf" stroke-width="0.9"/></svg></div>
<div class="dd dis" style="left:146px;top:17px"></div>
<div class="ic" style="left:162px;top:7px"><svg viewBox="0 0 24 24"><g fill="#dadada" stroke="#cdcdcd" stroke-width="0.6"><circle cx="10" cy="3.9" r="2.6"/><circle cx="19" cy="6" r="2.6"/><circle cx="2.8" cy="12" r="2.6"/></g><rect x="12.2" y="13" width="11" height="11" rx="1.8" fill="#cfcbbd" stroke="#c6c2b4" stroke-width="0.5"/><g stroke="#f4f4f0" stroke-width="1.2" stroke-linecap="round"><path d="M17.7 14.6V22.4M14.299999999999999 16.5L21.1 20.5M14.299999999999999 20.5L21.1 16.5"/></g><circle cx="17.7" cy="18.5" r="1.9" fill="#f4f4f0"/><circle cx="17.7" cy="18.5" r="0.9" fill="#cfcbbd"/></svg></div>
<div class="ic" style="left:195px;top:7px"><svg viewBox="0 0 24 24"><rect x="4.2" y="2" width="5" height="5" fill="#f4f4f4" stroke="#a9a9a9" stroke-width="0.9"/><circle cx="6.7" cy="4.5" r="1.3" fill="none" stroke="#9a9a9a" stroke-width="0.7"/><path d="M9.4 4.6H19.4" stroke="#d0d0d0" stroke-width="1.2"/><path d="M5.6 7.4L2 20.4" stroke="#b4b4b4" stroke-width="0.8"/><path d="M9.6 19.6L21.6 8.6" stroke="#d8d4c6" stroke-width="2.4"/><path d="M10.4 10.4L19.6 19.6" stroke="#d0cbbb" stroke-width="2.6"/><path d="M8.4 12.4L12.6 8.2L15.4 9.6L10.6 13.8Z" fill="#d6d6d6" stroke="#cacaca" stroke-width="0.5"/></svg></div>
<div class="dd dis" style="left:224px;top:17px"></div>
<div class="ic" style="left:239px;top:7px"><svg viewBox="0 0 24 24"><g fill="#e0ded2" stroke="#d4d2c6" stroke-width="0.7"><rect x="2.4" y="1.6" width="19.4" height="5"/><rect x="2.4" y="8.8" width="19.4" height="5"/><rect x="2.4" y="16" width="19.4" height="5"/></g><g transform="translate(8.4,-0.8) scale(1.0)"><g transform="translate(0,0)"><path d="M7.4 0.4L13.4 3.2L5.8 19.2L0.6 22.6L0.8 16.4Z" fill="#e8e2dc" stroke="#c9c2bc" stroke-width="0.5" stroke-linejoin="round"/><path d="M7.4 0.4L13.4 3.2L12.3 5.5L6.3 2.7Z" fill="#f4f4f4" stroke="#c9c2bc" stroke-width="0.4"/><path d="M0.8 16.4L5.8 19.2L0.6 22.6Z" fill="#ececec" stroke="#d6d6d6" stroke-width="0.4"/><path d="M8.6 4L2.6 17.4M10.4 4.8L4.2 18.2" stroke="#d6cfc9" stroke-width="0.6"/></g></g></svg></div>
<div class="ic" style="left:272px;top:7px"><svg viewBox="0 0 24 24"><path d="M2 3.4H21.4M9 3.4V1.6H14.4V3.4" stroke="#d9c9c9" stroke-width="1.4" fill="none"/><rect x="2.4" y="2.4" width="14" height="10" fill="#dedad0" stroke="none" opacity="0.8"/><path d="M4 8.6H19.6L18.4 22.4H5.2Z" fill="#e4dada" stroke="#d2c0c0" stroke-width="1.2" stroke-linejoin="round"/><path d="M3 8.4H20.6" stroke="#d2c0c0" stroke-width="1.6"/><path d="M8 11V20.4M11.8 11V20.4M15.6 11V20.4" stroke="#f3eded" stroke-width="1.6"/></svg></div>
<div class="ic" style="left:305px;top:7px"><svg viewBox="0 0 24 24"><path d="M1.6 5.6L16 13.6" stroke="#d2d2d2" stroke-width="1.8" stroke-linecap="round"/><path d="M1.6 13L16 7.6" stroke="#dcdcdc" stroke-width="2" stroke-linecap="round"/><ellipse cx="18.8" cy="6.4" rx="3" ry="2.3" fill="none" stroke="#d6c6c6" stroke-width="1.4" transform="rotate(-25 18.8 6.4)"/><ellipse cx="18.6" cy="15.6" rx="2.6" ry="3.2" fill="none" stroke="#d6c6c6" stroke-width="1.4" transform="rotate(-25 18.6 15.6)"/></svg></div>
<div class="ic" style="left:337px;top:7px"><svg viewBox="0 0 24 24"><path d="M8.4 1.6H15.4L19 5.2V17.4H8.4Z" fill="#f6f6f6" stroke="#d2d2d2" stroke-width="0.9" stroke-linejoin="round"/><path d="M15.4 1.6V5.2H19" fill="none" stroke="#d2d2d2" stroke-width="0.8"/><path d="M3.4 6.4H10.4L14 10V22.4H3.4Z" fill="#f6f6f6" stroke="#cccccc" stroke-width="0.9" stroke-linejoin="round"/><path d="M10.4 6.4V10H14" fill="none" stroke="#cccccc" stroke-width="0.8"/><path d="M5.4 12.6H12M5.4 14.8H12M5.4 17H12M5.4 19.2H10" stroke="#d6d6d6" stroke-width="0.9"/></svg></div>
<div class="ic" style="left:371px;top:7px"><svg viewBox="0 0 24 24"><rect x="3.6" y="2.6" width="16.4" height="19.8" rx="0.8" fill="#e2dfd6" stroke="#cfcbbf" stroke-width="0.9"/><rect x="8.4" y="0.8" width="7" height="4" rx="0.8" fill="#dddddd" stroke="#cdcdcd" stroke-width="0.6"/><path d="M5.6 5.4H14.6L18 8.8V20.4H5.6Z" fill="#f6f6f6" stroke="#d2d2d2" stroke-width="0.8" stroke-linejoin="round"/><path d="M14.6 5.4V8.8H18" fill="none" stroke="#d2d2d2" stroke-width="0.7"/><path d="M7.6 11.4H16M7.6 13.6H16M7.6 15.8H16M7.6 18H13" stroke="#d6d6d6" stroke-width="0.9"/></svg></div>
<div class="ic" style="left:404px;top:7px"><svg viewBox="0 0 24 24"><path d="M2 9.6L11 2V6.8C17 6.8 20.4 9.6 20.4 14C20.4 18.4 16.6 20.8 11.4 20.8V16.4C14.4 16.4 15.8 15.4 15.8 13.8C15.8 12.4 14.4 11.8 11 11.8V17Z" fill="#e3d9d2" stroke="#dacfc8" stroke-width="0.6" stroke-linejoin="round"/></svg></div>
<div class="ic" style="left:437px;top:7px"><svg viewBox="0 0 24 24"><path d="M22 9.6L13 2V6.8C7 6.8 3.6 9.6 3.6 14C3.6 18.4 7.4 20.8 12.6 20.8V16.4C9.600000000000001 16.4 8.2 15.4 8.2 13.8C8.2 12.4 9.6 11.8 13 11.8V17Z" fill="#dde0db" stroke="#d3d6d1" stroke-width="0.6" stroke-linejoin="round"/></svg></div>
<div class="abs" style="left:474px;top:11px"><svg width="6" height="18" viewBox="0 0 6 18" style="display:block"><rect x="1" y="1" width="1" height="1" fill="#fff"/><rect x="0" y="0" width="1" height="1" fill="#b2b2b2"/><rect x="4" y="1" width="1" height="1" fill="#fff"/><rect x="3" y="0" width="1" height="1" fill="#b2b2b2"/><rect x="1" y="4" width="1" height="1" fill="#fff"/><rect x="0" y="3" width="1" height="1" fill="#b2b2b2"/><rect x="4" y="4" width="1" height="1" fill="#fff"/><rect x="3" y="3" width="1" height="1" fill="#b2b2b2"/><rect x="1" y="7" width="1" height="1" fill="#fff"/><rect x="0" y="6" width="1" height="1" fill="#b2b2b2"/><rect x="4" y="7" width="1" height="1" fill="#fff"/><rect x="3" y="6" width="1" height="1" fill="#b2b2b2"/><rect x="1" y="10" width="1" height="1" fill="#fff"/><rect x="0" y="9" width="1" height="1" fill="#b2b2b2"/><rect x="4" y="10" width="1" height="1" fill="#fff"/><rect x="3" y="9" width="1" height="1" fill="#b2b2b2"/><rect x="1" y="13" width="1" height="1" fill="#fff"/><rect x="0" y="12" width="1" height="1" fill="#b2b2b2"/><rect x="4" y="13" width="1" height="1" fill="#fff"/><rect x="3" y="12" width="1" height="1" fill="#b2b2b2"/><rect x="1" y="16" width="1" height="1" fill="#fff"/><rect x="0" y="15" width="1" height="1" fill="#b2b2b2"/><rect x="4" y="16" width="1" height="1" fill="#fff"/><rect x="3" y="15" width="1" height="1" fill="#b2b2b2"/></svg></div>
<div class="ic" style="left:486px;top:7px"><svg viewBox="0 0 24 24"><g transform="translate(1.6,1.4) rotate(-45 12 12)"><path d="M4.4 3.4V12.6A7.6 7.6 0 0 0 19.6 12.600000000000001V3.4H14.4V12.4A2.4 2.4 0 0 1 9.6 12.4V3.4Z" fill="#d40f0f" stroke="#a30808" stroke-width="0.7" stroke-linejoin="round"/><rect x="4.4" y="3.4" width="5.2" height="4" fill="#fff" stroke="#a30808" stroke-width="0.7"/><rect x="14.4" y="3.4" width="5.2" height="4" fill="#fff" stroke="#a30808" stroke-width="0.7"/><path d="M6 12.6A6 6 0 0 0 10 18.2" stroke="#f06a6a" stroke-width="1" fill="none" opacity="0.7"/></g></svg></div>
<div class="ic" style="left:520px;top:7px"><svg viewBox="0 0 24 24"><path d="M8.4 19.4V12L3.6 4.2M8.4 12L13.4 6.6H18.6M13.4 6.600000000000001V2.6H18.6M11 10H18.6M10 14.6L13 11.4" stroke="#d9dcd9" stroke-width="1.3" fill="none"/><g fill="#f4f4f4" stroke="#d6d9d6" stroke-width="0.8"><rect x="6.8" y="17.4" width="3.2" height="3.2"/><rect x="2" y="2.6" width="3.2" height="3.2"/><rect x="17" y="1" width="3.2" height="3.2"/><rect x="17" y="5" width="3.2" height="3.2"/><rect x="17" y="8.6" width="3.2" height="3.2"/><rect x="11.800000000000001" y="5" width="3.2" height="3.2"/></g></svg></div>
<div class="abs" style="left:538.5px;top:28.5px;width:0;height:0;border-left:3px solid transparent;border-right:3px solid transparent;border-top:3px solid #c4c4c4"></div>
<div class="abs" style="left:547.5px;top:4px;width:32px;height:31px;border:1px solid #cfcfcf;border-radius:4px;background:#e2e2e2"></div>
<div class="ic" style="left:552px;top:7px"><svg viewBox="0 0 24 24"><g fill="#ebebeb" stroke="#c9c9c9" stroke-width="0.9"><rect x="5.8" y="4.6" width="3" height="3"/><rect x="17.8" y="6.6" width="3" height="3"/><rect x="11.8" y="16.6" width="3" height="3"/></g></svg></div>
<div class="abs" style="left:570.5px;top:28.5px;width:0;height:0;border-left:3px solid transparent;border-right:3px solid transparent;border-top:3px solid #c4c4c4"></div>
<div class="abs" style="left:581.5px;top:7.5px;width:95px;height:23px;border:1px solid #c4c4c4;border-radius:3px;background:#f2f2f2"></div>
<div class="abs" style="left:661px;top:8.5px;width:1px;height:21px;background:#d0d0d0"></div>
<div class="abs" style="left:586px;top:11px;font-size:14px;letter-spacing:0.48px;line-height:16px;color:#bebebe;will-change:transform">12</div>
<svg class="abs" style="left:664px;top:12px" width="10" height="15" viewBox="0 0 10 15"><path d="M1.6 5L5 1.6L8.4 5Z M1.6 10L5 13.4L8.4 10Z" fill="#d2d2d2"/></svg>
<div class="abs" style="left:678px;top:7.5px;width:104px;height:23px;border:1px solid #c9c9c9;border-radius:3px;background:linear-gradient(#f8f8f8,#eeeeee)"></div>
<div class="abs" style="left:683px;top:11px;font-size:14px;letter-spacing:0.58px;line-height:16px;color:#bebebe;will-change:transform">px</div>
<div class="dd dis" style="left:766.5px;top:19px"></div>
<div class="ic" style="left:786px;top:7px"><svg viewBox="0 0 24 24"><path d="M4 1.2L10 10.6V22.4" stroke="#5db55d" stroke-width="1.7" fill="none"/><path d="M10 10.6L23.4 6" stroke="#5db55d" stroke-width="1.7" fill="none"/><rect x="7.8" y="8.4" width="4.4" height="4.4" fill="#c4c4c4" stroke="#7a7a7a" stroke-width="0.9"/></svg></div>
<div class="ic" style="left:820px;top:7px"><svg viewBox="0 0 24 24"><path d="M8 2C12 0.6 19.6 1 21.8 3.6C24 6.4 22.6 10.6 19 11.6C17 12.2 15.4 11.6 14.4 10.4L11.4 5.4Z" fill="#b9b9b9" stroke="#5a5a5a" stroke-width="0.9" stroke-linejoin="round"/><path d="M6.6 2C2.6 2.4 0.8 5.6 1.6 8.6C2.4 11.4 5.4 12 6.4 14.6C7.4 17.4 6.6 20.4 9 22.2C11.4 24 15.4 22.6 16 19.6C16.6 16.6 14.2 14.8 13.6 12.2C13 9.6 13.6 7.4 12 4.6C10.8 2.6 8.8 1.8 6.6 2Z" fill="#86c67c" stroke="#2f2f2f" stroke-width="1"/><path d="M7 9.4H7.2M8.8 9.4H9M10.6 9.4H10.8" stroke="#3c7a34" stroke-width="0.9"/></svg></div>
<div class="abs" style="left:840px;top:28.5px;width:0;height:0;border-left:3px solid transparent;border-right:3px solid transparent;border-top:3px solid #333"></div>
<div class="ic" style="left:853px;top:7px"><svg viewBox="0 0 24 24"><path d="M3 2.6L21 20.6M21 2.6L3 20.6" stroke="#e0e0e0" stroke-width="1.8" stroke-linecap="round"/></svg></div>
<div class="ic" style="left:886px;top:7px"><svg viewBox="0 0 24 24"><path d="M3 20.6L21 2.6" stroke="#e0e0dc" stroke-width="1.4" stroke-linecap="round"/><path d="M5.4 5L10.4 10L7 17.6L12.6 13.4L19.4 18.6L15.4 11.6L17.6 5L12 8.6Z" fill="#dad7c8" stroke="#d0cdbe" stroke-width="0.5" stroke-linejoin="round"/></svg></div>
<div class="dd dis" style="left:916px;top:17px"></div>
<div class="ic" style="left:930px;top:7px"><svg viewBox="0 0 24 24"><path d="M5.6 7L12.6 14.4L6.6 20.8" stroke="#dfe2df" stroke-width="1.6" fill="none"/><g fill="#f4f4f4" stroke="#d6d9d6" stroke-width="1"><circle cx="5.6" cy="7" r="2.2"/><circle cx="12.6" cy="14.4" r="2.2"/><circle cx="6.6" cy="20.8" r="2.2"/></g><path d="M11.4 3.4L16.6 1.4L22.4 12.6L21.6 16.6L18 14.6Z" fill="#e6e6df" stroke="#dcdcd4" stroke-width="0.6" stroke-linejoin="round"/><path d="M11.4 3.4L16.6 1.4L17.8 3.8L12.6 5.8Z" fill="#f0f0ec" stroke="#dcdcd4" stroke-width="0.4"/></svg></div>
</div>
<div class="hline" style="top:97px;background:#b4b4b4"></div>

<!-- LEFT PANELS -->
<div id="left" class="abs" style="left:0;top:98px;width:402px;height:530px;background:#efefef">
<div class="ptitle" style="top:2px;letter-spacing:0.136px">Browser</div>
<svg class="pbtn" style="left:369px;top:4px" viewBox="0 0 11 11"><rect x="0.5" y="0.5" width="10" height="10" rx="2" fill="#f4f4f4" stroke="#6a6560" stroke-width="1"/><rect x="4.6" y="2.6" width="3.8" height="3.8" rx="0.8" fill="none" stroke="#5a5550" stroke-width="0.9"/><rect x="2.6" y="4.6" width="3.8" height="3.8" rx="0.8" fill="#f4f4f4" stroke="#5a5550" stroke-width="0.9"/></svg><svg class="pbtn" style="left:383px;top:4px" viewBox="0 0 11 11"><rect x="0.5" y="0.5" width="10" height="10" rx="2" fill="#f4f4f4" stroke="#6a6560" stroke-width="1"/><path d="M3 3L8 8M8 3L3 8" stroke="#4a4540" stroke-width="1.8" stroke-linecap="round"/></svg>
<div class="sic" style="left:8px;top:26px"><svg viewBox="0 0 16 16"><rect x="1.4" y="1.4" width="11.6" height="11.4" fill="#ececec" stroke="#6e6e6e" stroke-width="1"/><circle cx="12.4" cy="12.8" r="2.6" fill="#c4dfc4" stroke="#4a9a4a" stroke-width="1.1"/></svg></div>
<div class="sic" style="left:33px;top:26px"><svg viewBox="0 0 16 16"><g transform="translate(0.2,0.2) scale(0.655)"><path id="rfa" d="M1.7 11.2V8.4C2.6 3.6 7 0.6 11.6 0.6C14.6 0.6 17 1.8 18.8 3.6L22 1.2L22.1 11.2H13L16 8.2C14.8 6.8 13.2 6.1 11.6 6.1C8.6 6.1 6.2 8.2 5.6 11.2Z" fill="url(#gref)" stroke="#3b70b3" stroke-width="0.5" stroke-linejoin="round"/><path d="M1.7 11.2V8.4C2.6 3.6 7 0.6 11.6 0.6C14.6 0.6 17 1.8 18.8 3.6L22 1.2L22.1 11.2H13L16 8.2C14.8 6.8 13.2 6.1 11.6 6.1C8.6 6.1 6.2 8.2 5.6 11.2Z" fill="url(#gref)" stroke="#3b70b3" stroke-width="0.5" stroke-linejoin="round" transform="rotate(180 11.9 11.8)"/></g></svg></div>
<div class="sic" style="left:58px;top:26px"><svg viewBox="0 0 16 16"><path d="M1 1.4H15L9.6 8.4V14.2L6.4 15.6V8.4Z" fill="#6c96c8" stroke="#4f78ab" stroke-width="0.8" stroke-linejoin="round"/><path d="M1.6 1.4H14.4V3.2H1.6Z" fill="#f7dc3f" stroke="#d6b82a" stroke-width="0.5"/></svg></div>
<div class="sic" style="left:83.5px;top:26px"><svg viewBox="0 0 16 16"><path d="M0.6 3H7M2 3V13.4M2 7H4.4M2 11.6H4.4" stroke="#8a8a8a" stroke-width="0.9" fill="none"/><rect x="3.6" y="5.6" width="2.8" height="2.8" fill="#ffe08a" stroke="#f59a0c" stroke-width="0.9"/><rect x="3.6" y="10.2" width="2.8" height="2.8" fill="#ffe08a" stroke="#f59a0c" stroke-width="0.9"/><path d="M10.4 0.8L15 6H12.4V13.6H8.4V6H5.8Z" fill="#5b88c0" stroke="#2f5488" stroke-width="0.9" stroke-linejoin="round"/></svg></div>
<div class="sic" style="left:108px;top:26px"><svg viewBox="0 0 16 16"><circle cx="8" cy="8" r="6.8" fill="#5b88c0" stroke="#4a76ad" stroke-width="0.6"/><text x="5.8" y="12" font-family="Liberation Serif,serif" font-style="italic" font-weight="bold" font-size="11.5" fill="#fff" letter-spacing="0">i</text></svg></div>
<div class="tree" style="left:0px;top:50px;width:396px;height:184px"><div class="abs" style="left:0;top:0;width:380px;height:168px;overflow:hidden"><div class="sic" style="left:19px;top:1px"><svg viewBox="0 0 16 16"><path d="M3.4 12.8C0.6 12.8 0.4 9.6 3.2 8.8C3 4.6 8.4 2.2 10.6 6.4C14.6 6.2 16.6 12.8 13 12.8Z" fill="url(#gcl)" stroke="#5f86b8" stroke-width="1" stroke-linejoin="round"/></svg></div><div class="row" style="left:41px;top:1px;letter-spacing:0.062px">Cloud</div><div class="sic" style="left:19px;top:19px"><svg viewBox="0 0 16 16"><path d="M8 0.6L13.8 3.6V11.6L8 15.4L2.2 11.6V3.6Z" fill="#c3d6ec" stroke="#5a82b6" stroke-width="1" stroke-linejoin="round"/><path d="M8 0.8L13.6 3.6L8 6.4L2.4 3.6Z" fill="#a3c0e2" stroke="#5a82b6" stroke-width="0.7" stroke-linejoin="round"/><path d="M2.6 4.6L8 7.4L13.4 4.6M8 7.4V14.8" stroke="#f2f6fb" stroke-width="1.1" fill="none"/><path d="M2.2 3.6V11.6L8 15.4L13.8 11.6V3.6" stroke="#4f78ab" stroke-width="1" fill="none" stroke-linejoin="round"/><path d="M8 8.4V15" stroke="#7fa0cc" stroke-width="0.7"/></svg></div><div class="row" style="left:41px;top:19px;letter-spacing:-0.089px">Scenes</div><div class="sic" style="left:35px;top:37px"><svg viewBox="0 0 16 16"><g transform="translate(8,8) rotate(45)"><rect x="-5.6" y="-5.6" width="5" height="5" fill="#b9d0ea" stroke="#9fbde0" stroke-width="0.5"/><rect x="0.6" y="0.6" width="5" height="5" fill="#b9d0ea" stroke="#9fbde0" stroke-width="0.5"/><rect x="-5.6" y="0.6" width="5" height="5" fill="#b9d0ea" stroke="#9fbde0" stroke-width="0.5"/><rect x="0.6" y="-5.6" width="5" height="5" fill="#dbe7f4"/><rect x="0.8" y="-5.4" width="2" height="2" fill="#44689b"/><rect x="3.4" y="-5.4" width="2" height="2" fill="#44689b"/><rect x="0.8" y="-2.8" width="2" height="2" fill="#44689b"/><rect x="3.4" y="-2.8" width="2" height="2" fill="#44689b"/></g></svg></div><div class="row" style="left:57px;top:37px;letter-spacing:0.256px">3dtilesnederland.nl Rotterdam Wilhelminakade – Textures</div><div class="sic" style="left:35px;top:55px"><svg viewBox="0 0 16 16"><g transform="translate(0.8,0) scale(0.9,1)"><path d="M8 0.8L14.4 3.6V12L8 15.6L1.6 12V3.6Z" fill="#c2d0e4" stroke="#8aa3c6" stroke-width="0.7" stroke-linejoin="round"/><path d="M8 0.8L14.4 3.6L8 6.4L1.6 3.6Z" fill="#e0e4ea" stroke="#9fb2cc" stroke-width="0.6" stroke-linejoin="round"/><path d="M1.6 3.6L8 6.4V15.6L1.6 12Z" fill="#b4c6de"/><path d="M8 6.4L14.4 3.6V12L8 15.6Z" fill="#ccd9ea"/><path d="M8 6.4V15.6" stroke="#eef3f9" stroke-width="0.8"/><path d="M3.6 7.4V10.4M5.8 8.4V11.4" stroke="#44689b" stroke-width="1.2"/><path d="M10.6 14V9.2C10.6 7.6 12.6 6.8 12.6 8.4V12.8Z" fill="#44689b"/></g></svg></div><div class="row" style="left:57px;top:55px;letter-spacing:0.122px">Cesium World</div><div class="sic" style="left:35px;top:73px"><svg viewBox="0 0 16 16"><g transform="translate(0.8,0) scale(0.9,1)"><path d="M8 0.8L14.4 3.6V12L8 15.6L1.6 12V3.6Z" fill="#c2d0e4" stroke="#8aa3c6" stroke-width="0.7" stroke-linejoin="round"/><path d="M8 0.8L14.4 3.6L8 6.4L1.6 3.6Z" fill="#e0e4ea" stroke="#9fb2cc" stroke-width="0.6" stroke-linejoin="round"/><path d="M1.6 3.6L8 6.4V15.6L1.6 12Z" fill="#b4c6de"/><path d="M8 6.4L14.4 3.6V12L8 15.6Z" fill="#ccd9ea"/><path d="M8 6.4V15.6" stroke="#eef3f9" stroke-width="0.8"/><path d="M3.6 7.4V10.4M5.8 8.4V11.4" stroke="#44689b" stroke-width="1.2"/><path d="M10.6 14V9.2C10.6 7.6 12.6 6.8 12.6 8.4V12.8Z" fill="#44689b"/></g></svg></div><div class="row" style="left:57px;top:73px;letter-spacing:0.018px">Corsica</div><div class="sic" style="left:35px;top:91px"><svg viewBox="0 0 16 16"><g transform="translate(0.8,0) scale(0.9,1)"><path d="M8 0.8L14.4 3.6V12L8 15.6L1.6 12V3.6Z" fill="#c2d0e4" stroke="#8aa3c6" stroke-width="0.7" stroke-linejoin="round"/><path d="M8 0.8L14.4 3.6L8 6.4L1.6 3.6Z" fill="#e0e4ea" stroke="#9fb2cc" stroke-width="0.6" stroke-linejoin="round"/><path d="M1.6 3.6L8 6.4V15.6L1.6 12Z" fill="#b4c6de"/><path d="M8 6.4L14.4 3.6V12L8 15.6Z" fill="#ccd9ea"/><path d="M8 6.4V15.6" stroke="#eef3f9" stroke-width="0.8"/><path d="M3.6 7.4V10.4M5.8 8.4V11.4" stroke="#44689b" stroke-width="1.2"/><path d="M10.6 14V9.2C10.6 7.6 12.6 6.8 12.6 8.4V12.8Z" fill="#44689b"/></g></svg></div><div class="row" style="left:57px;top:91px;letter-spacing:0.346px">Maptiler</div><div class="sic" style="left:35px;top:109px"><svg viewBox="0 0 16 16"><g transform="translate(0.8,0) scale(0.9,1)"><path d="M8 0.8L14.4 3.6V12L8 15.6L1.6 12V3.6Z" fill="#c2d0e4" stroke="#8aa3c6" stroke-width="0.7" stroke-linejoin="round"/><path d="M8 0.8L14.4 3.6L8 6.4L1.6 3.6Z" fill="#e0e4ea" stroke="#9fb2cc" stroke-width="0.6" stroke-linejoin="round"/><path d="M1.6 3.6L8 6.4V15.6L1.6 12Z" fill="#b4c6de"/><path d="M8 6.4L14.4 3.6V12L8 15.6Z" fill="#ccd9ea"/><path d="M8 6.4V15.6" stroke="#eef3f9" stroke-width="0.8"/><path d="M3.6 7.4V10.4M5.8 8.4V11.4" stroke="#44689b" stroke-width="1.2"/><path d="M10.6 14V9.2C10.6 7.6 12.6 6.8 12.6 8.4V12.8Z" fill="#44689b"/></g></svg></div><div class="row" style="left:57px;top:109px;letter-spacing:0.245px">Nederland</div><div class="sic" style="left:35px;top:127px"><svg viewBox="0 0 16 16"><g transform="translate(0.8,0) scale(0.9,1)"><path d="M8 0.8L14.4 3.6V12L8 15.6L1.6 12V3.6Z" fill="#c2d0e4" stroke="#8aa3c6" stroke-width="0.7" stroke-linejoin="round"/><path d="M8 0.8L14.4 3.6L8 6.4L1.6 3.6Z" fill="#e0e4ea" stroke="#9fb2cc" stroke-width="0.6" stroke-linejoin="round"/><path d="M1.6 3.6L8 6.4V15.6L1.6 12Z" fill="#b4c6de"/><path d="M8 6.4L14.4 3.6V12L8 15.6Z" fill="#ccd9ea"/><path d="M8 6.4V15.6" stroke="#eef3f9" stroke-width="0.8"/><path d="M3.6 7.4V10.4M5.8 8.4V11.4" stroke="#44689b" stroke-width="1.2"/><path d="M10.6 14V9.2C10.6 7.6 12.6 6.8 12.6 8.4V12.8Z" fill="#44689b"/></g></svg></div><div class="row" style="left:57px;top:127px;letter-spacing:0.254px">Switzerland</div><div class="sic" style="left:19px;top:145px"><svg viewBox="0 0 16 16"><circle cx="8" cy="8" r="2.4" fill="#44689b"/><circle cx="7.4" cy="7.6" r="0.9" fill="#8fb0d8"/><path d="M4.6 5A4.6 4.6 0 0 0 4.6 11M11.4 5A4.6 4.6 0 0 1 11.4 11" stroke="#5f86b8" stroke-width="1" fill="none"/><path d="M2.6 3.4A7 7 0 0 0 2.6 12.6M13.4 3.4A7 7 0 0 1 13.4 12.6" stroke="#7f9fc9" stroke-width="0.9" fill="none"/></svg></div><div class="row" style="left:41px;top:145px;letter-spacing:0.056px">SensorThings</div><div class="sic" style="left:19px;top:163px"><svg viewBox="0 0 16 16"><rect x="1" y="1.4" width="14" height="12" rx="1" fill="#c6d9ee" stroke="#44689b" stroke-width="1.4"/><path d="M5.6 1.4V13M10.4 1.4V13" stroke="#44689b" stroke-width="1.2"/></svg></div><div class="row" style="left:41px;top:163px;letter-spacing:0.177px">Vector Tiles</div><div class="abs" style="width:0;height:0;border-left:4px solid transparent;border-right:4px solid transparent;border-top:4.5px solid #4d4d4d;left:4px;top:25px"></div><div class="abs" style="width:0;height:0;border-top:3.5px solid transparent;border-bottom:3.5px solid transparent;border-left:4px solid #4d4d4d;left:6px;top:168.60000000000002px"></div></div>
<div class="abs" style="left:380px;top:0;width:14px;height:168px;background:#e2e2e2;border-left:1px solid #c4c4c4"></div>
<div class="abs" style="left:380px;top:0;width:14px;height:13px;background:linear-gradient(90deg,#fbfbfb,#f0f0f0);border:1px solid #c4c4c4;border-top:none;border-right:none"></div>
<div class="abs" style="left:380px;top:106px;width:14px;height:29px;background:linear-gradient(90deg,#ffffff,#f0f0f0);border:1px solid #c0c0c0;border-right:none"></div>
<div class="abs" style="left:380px;top:154px;width:14px;height:14px;background:linear-gradient(90deg,#fbfbfb,#f0f0f0);border:1px solid #c4c4c4;border-right:none;border-bottom:none"></div>
<div class="abs" style="left:0;top:168px;width:380px;height:14px;background:#e2e2e2;border-top:1px solid #c4c4c4"></div>
<div class="abs" style="left:0;top:168px;width:14px;height:14px;background:linear-gradient(#fbfbfb,#f0f0f0);border:1px solid #c4c4c4;border-left:none;border-bottom:none"></div>
<div class="abs" style="left:13px;top:168px;width:329px;height:14px;background:linear-gradient(#ffffff,#f0f0f0);border:1px solid #c0c0c0;border-bottom:none"></div>
<div class="abs" style="left:366px;top:168px;width:14px;height:14px;background:linear-gradient(#fbfbfb,#f0f0f0);border:1px solid #c4c4c4;border-bottom:none;border-right:none"></div>
<div class="abs" style="left:380px;top:168px;width:14px;height:14px;background:#efefef;border-left:1px solid #c4c4c4;border-top:1px solid #c4c4c4"></div>
</div>
<div class="abs" style="width:0;height:0;border-left:4px solid transparent;border-right:4px solid transparent;border-bottom:4px solid #4a4a4a;left:384.5px;top:55.5px"></div>
<div class="abs" style="width:0;height:0;border-left:4px solid transparent;border-right:4px solid transparent;border-top:4px solid #4a4a4a;left:384.5px;top:210.5px"></div>
<div class="abs" style="width:0;height:0;border-top:4px solid transparent;border-bottom:4px solid transparent;border-right:4px solid #4a4a4a;left:6.0px;top:222px"></div>
<div class="abs" style="width:0;height:0;border-top:4px solid transparent;border-bottom:4px solid transparent;border-left:4px solid #4a4a4a;left:372.5px;top:222px"></div>
<div class="abs" style="left:191px;top:236px;width:16px;height:1px;background-image:linear-gradient(90deg,#bdbdbd 1px,transparent 1px);background-size:2.5px 1px"></div>
<div class="abs" style="left:399px;top:257px;width:1px;height:17px;background-image:linear-gradient(#bdbdbd 1px,transparent 1px);background-size:1px 2.5px"></div>
<div class="ptitle" style="top:242px;letter-spacing:0.115px">Layers</div>
<svg class="pbtn" style="left:369px;top:244px" viewBox="0 0 11 11"><rect x="0.5" y="0.5" width="10" height="10" rx="2" fill="#f4f4f4" stroke="#6a6560" stroke-width="1"/><rect x="4.6" y="2.6" width="3.8" height="3.8" rx="0.8" fill="none" stroke="#5a5550" stroke-width="0.9"/><rect x="2.6" y="4.6" width="3.8" height="3.8" rx="0.8" fill="#f4f4f4" stroke="#5a5550" stroke-width="0.9"/></svg><svg class="pbtn" style="left:383px;top:244px" viewBox="0 0 11 11"><rect x="0.5" y="0.5" width="10" height="10" rx="2" fill="#f4f4f4" stroke="#6a6560" stroke-width="1"/><path d="M3 3L8 8M8 3L3 8" stroke="#4a4540" stroke-width="1.8" stroke-linecap="round"/></svg>
<div class="sic" style="left:8px;top:266px"><svg viewBox="0 0 16 16"><path d="M1.4 9L6.4 3.6L11 7.6L6.6 13.6Z" fill="#e23a3a"/><path d="M1.6 7.4L6 2.8L9.6 5.6L5 10.4Z" fill="#5b88c0"/><path d="M2.4 5.2L6.2 1.6L9.4 4L5.4 8Z" fill="#f7dc3f"/><path d="M6 8.4L10 5.6L12.6 9.6L8.4 12.6Z" fill="#c9965a" stroke="#a8783f" stroke-width="0.5"/><path d="M10.4 7L14.8 1.6" stroke="#d9923a" stroke-width="2" stroke-linecap="round"/></svg></div>
<div class="sic" style="left:33px;top:266px"><svg viewBox="0 0 16 16"><path d="M1.4 8V14.4H8" stroke="#7a7a7a" stroke-width="0.9" fill="none"/><path d="M3.4 6V12.4H10" stroke="#7a7a7a" stroke-width="0.9" fill="none"/><rect x="5.4" y="3.6" width="7.6" height="8" fill="#ededed" stroke="#6e6e6e" stroke-width="0.9"/><path d="M7.8 7.6V2.4C7.8 0.4 10.4 0.4 10.4 2.4V8.4" stroke="#3f69a3" stroke-width="1.1" fill="none"/><rect x="10" y="10" width="5.6" height="5.6" rx="0.8" fill="#5fae5f" stroke="#4a9a4a" stroke-width="0.5"/><circle cx="12.8" cy="12.8" r="1.8" fill="#e6f4e6"/></svg></div>
<div class="sic" style="left:58px;top:266px"><svg viewBox="0 0 16 16"><g transform="translate(0.6,1.7) scale(1.06,1.06)"><path d="M0.8 6.6C4 1.6 11 1.6 14.4 7.4C11 11.6 4.4 11.4 0.8 6.6Z" fill="#f2f2f2" stroke="#8a8a8a" stroke-width="0.8"/><path d="M2.4 3.6C6 0.6 11.4 1 13.6 4" stroke="#9a9a9a" stroke-width="0.8" fill="none"/><circle cx="7.6" cy="6.4" r="3.3" fill="#6c96c8" stroke="#4a76ad" stroke-width="0.6"/><circle cx="7.8" cy="6" r="1.4" fill="#16243a"/><circle cx="8.4" cy="5.4" r="0.5" fill="#fff"/></g></svg></div>
<div class="sic" style="left:83px;top:266px"><svg viewBox="0 0 16 16"><path d="M1 1.4H15L9.6 8.4V14.2L6.4 15.6V8.4Z" fill="#6c96c8" stroke="#4f78ab" stroke-width="0.8" stroke-linejoin="round"/><path d="M1.6 1.4H14.4V3.2H1.6Z" fill="#f7dc3f" stroke="#d6b82a" stroke-width="0.5"/></svg></div>
<div class="sic" style="left:108px;top:266px"><svg viewBox="0 0 16 16"><text x="0.4" y="9.6" font-family="Liberation Serif,serif" font-size="15" fill="#cfcfcf" letter-spacing="0">ε</text><path d="M7 8H15L12.4 11.4V15H9.6V11.4Z" fill="#e0e0e0" stroke="#d6d6d6" stroke-width="0.6"/></svg></div>
<div class="sic" style="left:146px;top:266px"><svg viewBox="0 0 16 16"><path d="M0.6 3H7M2 3V13.4M2 7H4.4M2 11.6H4.4" stroke="#8a8a8a" stroke-width="0.9" fill="none"/><rect x="3.6" y="5.6" width="2.8" height="2.8" fill="#ffe08a" stroke="#f59a0c" stroke-width="0.9"/><rect x="3.6" y="10.2" width="2.8" height="2.8" fill="#ffe08a" stroke="#f59a0c" stroke-width="0.9"/><path d="M10.4 14.6L15 9.4H12.4V1.8H8.4V9.4H5.8Z" fill="#5b88c0" stroke="#2f5488" stroke-width="0.9" stroke-linejoin="round"/></svg></div>
<div class="sic" style="left:171px;top:266px"><svg viewBox="0 0 16 16"><path d="M0.6 3H7M2 3V13.4M2 7H4.4M2 11.6H4.4" stroke="#8a8a8a" stroke-width="0.9" fill="none"/><rect x="3.6" y="5.6" width="2.8" height="2.8" fill="#ffe08a" stroke="#f59a0c" stroke-width="0.9"/><rect x="3.6" y="10.2" width="2.8" height="2.8" fill="#ffe08a" stroke="#f59a0c" stroke-width="0.9"/><path d="M10.4 0.8L15 6H12.4V13.6H8.4V6H5.8Z" fill="#5b88c0" stroke="#2f5488" stroke-width="0.9" stroke-linejoin="round"/></svg></div>
<div class="sic" style="left:195px;top:266px"><svg viewBox="0 0 16 16"><rect x="1.4" y="1.4" width="11.4" height="11.2" fill="#ececec" stroke="#6e6e6e" stroke-width="1"/><rect x="9.4" y="10.4" width="6" height="4.6" rx="1.3" fill="#e8353f" stroke="#d4202a" stroke-width="0.5"/><path d="M10.8 12.7H14" stroke="#fff" stroke-width="1.2"/></svg></div>
<div class="abs" style="width:0;height:0;border-left:3px solid transparent;border-right:3px solid transparent;border-top:3px solid #333;left:70.5px;top:278.5px"></div>
<div class="abs" style="width:0;height:0;border-left:3px solid transparent;border-right:3px solid transparent;border-top:3px solid #333;left:95.5px;top:278.5px"></div>
<div class="abs" style="width:0;height:0;border-left:4px solid transparent;border-right:4px solid transparent;border-top:4px solid #c8c8c8;left:130px;top:271.5px"></div>
<div class="tree" style="left:0px;top:290px;width:396px;height:240px;overflow:hidden"><div class="abs" style="left:0;top:0;width:394px;height:18px;background:#308cc6"></div><div class="abs" style="left:23px;top:2px;width:14px;height:14px;background:#fff;border:1px solid #b4aeae"></div><svg class="abs" style="left:23px;top:2px" width="14" height="14" viewBox="0 0 14 14"><path d="M3 7L5.8 10.6L11 2.6" stroke="#000" stroke-width="1.9" fill="none"/></svg><div class="sic" style="left:44px;top:1.5px"><svg viewBox="0 0 16 16"><g transform="translate(1.3,0) scale(0.86,0.95)"><path d="M8 0.8L14.4 3.6V12L8 15.6L1.6 12V3.6Z" fill="#9fb0cb" stroke="#6f86aa" stroke-width="0.7" stroke-linejoin="round"/><path d="M8 0.8L14.4 3.6L8 6.4L1.6 3.6Z" fill="#e4e8ee" stroke="#9fb2cc" stroke-width="0.6" stroke-linejoin="round"/><path d="M1.6 3.6L8 6.4V15.6L1.6 12Z" fill="#8ea1c0"/><path d="M8 6.4L14.4 3.6V12L8 15.6Z" fill="#a9b9d2"/><path d="M3 8.4H6.4V11.4M3 8.4V11" stroke="#e6ecf4" stroke-width="1.1" fill="none"/><path d="M9.6 14.4V9.6C9.6 8 12.8 6.8 12.8 8.6V12.8" stroke="#e6ecf4" stroke-width="1.2" fill="none"/></g></svg></div><div class="row" style="left:64.5px;top:1px;color:#fff;font-weight:bold;font-size:13.5px;letter-spacing:0.45px;text-decoration:underline;text-decoration-thickness:1px;text-underline-offset:1px">Switzerland</div></div>
</div>

<!-- MAP CANVAS -->
<div id="canvas" class="abs" style="left:402px;top:98px;width:775px;height:530px;background:#fff;border:1px solid #b0b0b0;overflow:hidden">
<svg class="abs" style="left:0;top:0" width="773" height="529" viewBox="0 0 773 529">
<defs>
<clipPath id="mclip"><polygon points="42.5,132.0 115.0,131.0 195.0,129.0 295.0,128.0 455.0,128.0 555.0,128.5 635.0,130.0 695.5,131.3 701.5,154.0 702.0,229.0 701.5,365.5 699.0,366.5 699.0,401.5 555.0,401.0 395.0,401.0 115.0,401.2 114.0,403.0 44.0,403.3 41.0,299.0 39.3,233.0 38.3,232.0"/></clipPath>
<pattern id="mesh" width="6" height="5" patternUnits="userSpaceOnUse"><rect width="6" height="5" fill="#c9c9c9"/><path d="M0 0.5H6M0 3H6" stroke="#9a9a9a" stroke-width="0.9"/><path d="M0.5 0V5M3.5 0V5" stroke="#a4a4a4" stroke-width="0.7"/><path d="M0 0L3 2.5L0 5M6 0L3 2.5L6 5" stroke="#a0a0a0" stroke-width="0.6" fill="none"/></pattern>
<filter id="nz" x="0" y="0" width="100%" height="100%" color-interpolation-filters="sRGB"><feTurbulence type="fractalNoise" baseFrequency="0.4 0.5" numOctaves="2" seed="4"/><feColorMatrix type="matrix" values="0.95 0 0 0 0.3  0.95 0 0 0 0.3  0.95 0 0 0 0.3  0 0 0 0 1"/></filter>
<filter id="nz2" x="0" y="0" width="100%" height="100%"><feTurbulence type="fractalNoise" baseFrequency="0.035 0.05" numOctaves="2" seed="9"/><feColorMatrix type="matrix" values="0 0 0 0 0.5  0 0 0 0 0.5  0 0 0 0 0.5  1.2 0 0 0 -0.5"/></filter>
<filter id="jag" filterUnits="userSpaceOnUse" x="0" y="0" width="773" height="529"><feTurbulence type="fractalNoise" baseFrequency="0.35" numOctaves="1" seed="3" result="n"/><feDisplacementMap in="SourceGraphic" in2="n" scale="3" xChannelSelector="R" yChannelSelector="G"/></filter>
</defs>
<g clip-path="url(#mclip)">
<rect x="30" y="120" width="690" height="300" filter="url(#nz)"/>
<rect x="30" y="120" width="690" height="300" fill="url(#mesh)" opacity="0.42"/>
<rect x="30" y="120" width="690" height="300" filter="url(#nz2)" opacity="0.2"/>
<path d="M44.0 127V405M62.2 127V405M98.6 127V405M116.8 127V405M135.0 127V405M153.2 127V405M171.4 127V405M189.6 127V405M207.8 127V405M226.0 127V405M244.2 127V405M262.4 127V405M298.8 127V405M317.0 127V405M371.6 127V405M389.8 127V405M426.2 127V405M462.6 127V405M480.8 127V405M499.0 127V405M517.2 127V405M553.6 127V405M571.8 127V405M608.2 127V405M626.4 127V405M644.6 127V405M662.8 127V405M681.0 127V405M35 133.0H705M35 151.0H705M35 169.0H705M35 187.0H705M35 205.0H705M35 259.0H705M35 277.0H705M35 295.0H705M35 349.0H705M35 385.0H705M35 403.0H705" stroke="#858585" stroke-width="1" opacity="0.36" fill="none"/>
<path d="M80.4 127V405M280.6 127V405M335.2 127V405M353.4 127V405M408.0 127V405M444.4 127V405M535.4 127V405M590.0 127V405M699.2 127V405M35 223.0H705M35 241.0H705M35 313.0H705M35 331.0H705M35 367.0H705" stroke="#8a8a8a" stroke-width="0.8" opacity="0.2" fill="none"/>
<path d="M426.2 169.0h54.6M80.4 313.0v18M426.2 331.0v54M571.8 151.0h18.2M590.0 331.0h18.2M389.8 313.0h54.6M371.6 331.0v18M62.2 259.0v18M608.2 133.0v18M189.6 331.0v54M608.2 151.0v54M681.0 205.0h54.6M681.0 205.0h18.2M480.8 187.0v36M207.8 187.0h18.2M608.2 367.0h18.2M371.6 133.0v18M699.2 223.0h18.2M571.8 385.0h54.6M499.0 241.0v54M499.0 133.0v36M553.6 169.0v18M153.2 133.0h18.2M462.6 295.0v36M480.8 169.0h18.2M462.6 259.0v54M571.8 259.0v18M207.8 151.0h18.2M590.0 367.0h18.2M280.6 277.0v18M644.6 205.0h18.2M335.2 277.0v36M444.4 349.0v18M298.8 295.0h36.4M317.0 367.0v36M262.4 277.0v18M62.2 349.0v18M262.4 331.0h18.2M553.6 349.0h18.2M462.6 151.0v36M590.0 187.0v54M44.0 259.0h18.2M135.0 367.0h54.6M262.4 259.0h54.6M426.2 151.0h54.6M571.8 241.0h18.2M226.0 169.0h18.2M207.8 295.0h36.4M590.0 313.0h36.4M681.0 277.0v18M153.2 277.0h36.4M535.4 367.0v36M62.2 205.0v36M408.0 205.0h36.4M98.6 385.0h54.6M644.6 241.0h36.4M662.8 169.0h18.2M553.6 349.0v18M207.8 169.0v18M681.0 133.0v54M153.2 385.0h36.4M262.4 205.0v18M626.4 259.0h18.2M553.6 223.0h36.4M353.4 259.0h54.6M626.4 187.0h18.2M681.0 385.0h54.6M189.6 241.0v54M408.0 151.0h54.6M116.8 187.0h18.2M207.8 331.0h18.2M207.8 205.0h54.6M298.8 331.0h54.6M608.2 169.0h36.4M226.0 331.0v54M426.2 241.0v18M135.0 331.0v18M681.0 259.0v18M480.8 223.0h18.2M626.4 151.0v36M153.2 151.0v18M244.2 205.0h54.6M335.2 241.0v54M408.0 151.0v36M535.4 385.0v18M135.0 349.0v36M116.8 205.0h54.6M44.0 223.0h54.6M353.4 295.0v36M171.4 169.0v36M262.4 385.0v18M644.6 349.0v54M626.4 313.0v18M62.2 205.0v18M626.4 277.0h54.6M317.0 385.0v54M608.2 277.0h54.6M626.4 205.0h36.4M426.2 187.0h36.4M499.0 223.0h36.4M44.0 151.0h18.2M535.4 169.0v54M626.4 313.0h36.4M371.6 133.0v36M353.4 259.0v18M426.2 277.0v18M389.8 187.0v18M426.2 241.0v18M626.4 313.0v18M135.0 205.0h36.4M499.0 295.0v18M389.8 205.0h18.2M644.6 367.0h54.6M408.0 331.0h36.4M371.6 331.0h36.4M80.4 367.0h54.6M626.4 169.0h18.2M298.8 151.0v36M462.6 151.0v54M681.0 133.0h36.4M608.2 205.0v18M626.4 385.0h18.2M590.0 205.0h18.2M317.0 331.0h36.4M571.8 259.0h18.2M590.0 385.0h18.2M262.4 151.0h18.2M335.2 313.0h18.2M699.2 169.0v18M608.2 205.0h18.2M280.6 313.0v18M571.8 259.0v18M681.0 187.0v18M590.0 133.0v18M626.4 259.0h54.6M280.6 385.0h36.4M116.8 295.0v18M462.6 169.0h18.2M171.4 331.0v54M608.2 241.0v18M608.2 313.0v18M207.8 241.0v18M171.4 367.0v18M426.2 367.0v36M44.0 385.0h18.2M462.6 151.0v18M462.6 385.0v18M98.6 205.0v18M207.8 187.0h54.6M626.4 223.0v18M535.4 385.0v54M681.0 277.0v18M98.6 385.0h54.6M189.6 313.0h54.6M98.6 385.0h36.4M226.0 259.0v18M389.8 205.0h18.2M499.0 313.0v54M681.0 313.0v36M226.0 151.0v54M681.0 187.0v18M553.6 241.0v36M317.0 151.0v18M408.0 187.0v36M62.2 331.0h54.6M517.2 331.0h54.6M353.4 223.0h54.6M353.4 295.0h36.4M626.4 277.0h36.4M135.0 205.0h54.6M499.0 313.0v18M62.2 169.0v54M608.2 133.0v54M553.6 187.0h36.4M207.8 169.0h18.2M571.8 151.0h18.2M44.0 349.0v18M389.8 169.0h54.6M171.4 151.0v36M480.8 205.0v18M44.0 277.0v54M353.4 223.0h36.4M590.0 277.0v36M62.2 241.0h18.2M98.6 133.0v54M135.0 205.0v54M462.6 187.0v18M517.2 223.0h36.4M44.0 349.0v18M280.6 259.0h18.2M262.4 187.0v18M371.6 151.0h54.6M244.2 385.0v54M98.6 295.0v54M98.6 187.0v36M517.2 133.0h36.4M499.0 259.0h18.2M171.4 151.0h18.2M262.4 169.0h54.6M80.4 205.0h54.6M462.6 223.0v18M44.0 151.0v18M517.2 385.0v36M480.8 223.0h18.2M535.4 151.0v54M262.4 223.0h54.6M262.4 223.0v54M62.2 313.0v54M80.4 241.0v18M98.6 205.0v18M426.2 223.0v18M335.2 331.0h18.2M353.4 205.0v18M62.2 367.0v54M571.8 349.0v18M535.4 367.0v54M244.2 133.0h18.2M207.8 295.0v18M571.8 223.0h18.2M626.4 187.0v36M317.0 241.0v18M590.0 277.0h36.4M535.4 385.0v18M335.2 295.0v18M517.2 259.0h54.6M244.2 187.0v54M317.0 331.0h18.2M371.6 205.0v18M462.6 205.0h36.4M553.6 187.0v36M207.8 205.0h36.4M408.0 151.0v36M626.4 277.0v18M571.8 133.0v54M298.8 367.0v18M80.4 385.0v18M98.6 187.0h36.4M116.8 223.0h36.4M553.6 295.0v18M153.2 313.0h18.2M280.6 133.0v36M80.4 187.0h18.2M280.6 367.0v18M517.2 313.0v18M116.8 187.0v54M681.0 259.0v18M499.0 313.0h18.2M226.0 241.0h54.6M371.6 313.0v18M389.8 331.0h18.2M517.2 241.0v18M262.4 241.0h36.4M44.0 241.0h54.6M171.4 367.0v18M571.8 349.0v18M98.6 277.0v54M135.0 295.0h18.2M626.4 169.0v18M226.0 277.0v18M153.2 241.0v36" stroke="#7e7e7e" stroke-width="1.1" opacity="0.5" fill="none"/>
<path d="M240.1 357.9l10.4 -1.4l5.7 1.0l9.0 6.6l0.8 10.7l-6.9 8.1M446.7 184.1l-5.1 12.4l2.9 7.7l12.4 5.8M579.3 183.2l7.4 -2.8l7.5 -5.2M601.3 341.9l-3.9 -7.9l-0.9 -9.0l-1.2 -5.1l0.2 -9.4M196.3 337.9l9.8 -7.4l3.7 -4.3l3.2 -7.6l8.3 -4.6l5.3 -0.9M127.0 380.9l5.2 8.0l10.2 9.0M130.9 363.3l10.6 -8.9l10.3 -8.9M645.6 175.7l-5.3 -6.2l-1.0 -6.4l4.9 -5.6M579.3 169.9l-6.0 4.3l-6.4 4.5l0.4 6.6l9.7 9.3l5.2 12.0M152.4 343.7l4.3 7.0l-2.7 9.6M423.8 370.2l3.2 7.7l5.1 6.6l7.9 1.0l5.0 -5.0l11.7 -7.0M236.6 270.9l-9.1 7.4l-2.1 7.3l-4.6 7.4l-1.4 5.3M363.3 297.0l5.7 -5.9l-0.8 -8.2M189.0 289.2l-12.0 -3.3l-4.5 2.4l-11.2 -2.0M338.6 148.3l5.7 4.7l10.0 -4.0l7.9 -2.0l9.0 0.7M659.5 329.8l8.3 5.2l6.7 2.5M79.5 342.1l5.2 -4.4l8.5 -4.3l12.2 -2.0M156.3 214.8l-11.4 1.9l-9.6 2.1M288.6 249.3l9.1 -0.2l4.8 -3.5M194.3 141.5l-6.2 4.0l-8.0 3.9l-9.5 -1.8l-10.2 3.5M678.0 189.8l1.2 -13.1l5.1 -4.5M146.1 379.0l4.8 5.3l-1.6 10.5l-6.0 9.2l-9.2 -0.6l-7.8 -8.2M607.0 249.5l3.9 -7.6l6.2 -7.9l-0.3 -5.3l-8.4 -6.5M147.8 395.9l-10.9 -2.8l-9.6 -5.9M527.3 148.8l-13.5 1.3l-11.0 0.2l-8.1 -8.6l-2.4 -8.1M203.7 186.1l6.4 8.6l5.3 2.6M105.6 336.2l4.4 5.9l11.0 7.6l10.9 -4.5l10.4 5.8M438.3 260.0l-4.0 3.4l-4.7 3.6M350.5 144.0l-6.3 -4.2l-8.8 -4.1M231.3 334.4l8.9 3.0l3.8 5.5l4.7 6.7l-0.9 7.3M664.0 207.9l1.3 5.8l-0.4 5.7l-7.3 8.6M560.4 301.2l-13.0 -0.5l-7.4 -4.8l-5.2 -6.5l-7.9 -4.0l-5.5 -3.5M689.4 301.9l11.3 -3.3l10.4 2.9l7.9 -0.5M143.5 359.5l-8.6 -2.6l-6.4 -8.0l-9.1 -0.6l-4.3 -5.7M167.4 212.7l2.7 -13.5l6.6 -8.1l2.5 -6.7M671.8 201.1l5.7 -9.3l-0.8 -6.3M138.9 212.9l3.9 10.0l6.5 2.3l5.3 0.5l12.0 -1.6M498.7 266.6l-7.1 1.6l-4.8 -1.5l-12.2 3.3l-10.1 -1.8l-11.0 -6.1M481.8 307.8l10.0 -3.9l7.0 -3.6l5.8 -1.1M317.9 343.0l-6.2 -6.3l-8.2 -6.8l-9.8 -5.2M654.9 180.6l-7.0 -6.2l1.1 -5.2M399.6 174.6l1.4 -5.7l3.9 -9.1l7.4 -6.1M462.9 355.7l-7.1 -5.7l1.2 -6.6l2.8 -13.1l6.9 -8.0l6.2 -3.8M293.0 147.7l8.1 7.6l3.6 4.8l7.6 4.1l1.0 13.7l-11.6 7.2M346.0 175.6l10.4 2.5l9.9 1.7M190.2 392.2l-4.2 6.4l-3.9 4.7l-8.1 1.2l-6.0 -4.3l-6.8 -2.5M322.2 181.4l10.4 -3.2l7.2 -6.0l5.3 -2.3l5.7 2.8M241.1 235.4l2.5 5.7l-3.4 10.2l3.5 3.7l-2.7 10.6M206.0 158.5l8.9 1.8l4.6 5.1l8.0 5.7M443.3 317.5l12.7 2.9l8.2 9.5M171.3 318.7l-5.1 -3.3l-8.5 2.3l-8.3 -4.0l-7.8 -5.1l-1.2 -11.2M203.7 175.6l-7.8 1.0l-9.0 -2.9M236.9 257.2l-3.2 7.6l-3.4 3.9M71.3 330.6l9.4 0.2l3.3 4.1M515.0 300.5l-2.5 11.7l-4.2 12.5l1.2 8.0l3.5 4.2M231.8 227.3l-7.4 0.2l-13.8 0.2l-11.5 -3.8l-7.8 0.4M238.5 289.9l-8.1 -5.8l-9.3 -4.1M304.0 160.4l9.4 5.5l5.2 12.1l1.7 10.4l-1.4 11.2l-3.6 10.5M181.3 311.8l-2.8 6.0l6.7 10.0l-3.4 10.3M284.5 353.9l5.7 -3.4l0.0 -5.2l1.5 -10.1l8.3 -4.6M385.6 354.5l4.1 -12.6l1.0 -5.0l-0.5 -10.3l10.9 -8.5l6.6 -5.7M108.3 305.7l-0.4 8.8l9.5 5.6l-0.4 12.7M185.0 163.9l-6.8 -2.2l-4.5 -4.9l-11.8 2.0l-12.1 -3.8M522.6 153.8l-10.1 -8.8l-13.5 -2.5l-4.0 -3.1l-10.0 4.3l-5.5 -1.6M246.3 328.7l2.2 7.5l-7.4 8.8l-3.8 5.2l-6.0 -0.5l-3.0 -5.7M570.2 260.3l11.0 -4.9l7.4 -2.0l4.5 -13.0l8.8 -8.8l4.2 -9.6M686.1 356.3l-9.4 -10.1l-8.2 -2.2l-11.9 0.1l-7.5 5.1M495.4 218.1l-3.7 11.8l-4.9 2.2l-11.7 -3.9M613.4 286.0l1.1 5.7l0.8 12.1l7.8 8.8l-1.6 6.9l-4.9 10.0M348.1 187.0l-5.7 7.2l2.9 11.9M550.6 194.1l-2.1 -9.5l-2.8 -9.9l-5.5 -3.9l-11.3 1.0M280.5 284.0l-5.2 12.3l-4.8 11.9l-0.9 9.1M94.9 216.6l5.0 1.2l9.8 -9.9l9.4 0.1l7.3 1.2M555.3 246.4l3.4 -4.1l0.2 -6.6l-4.2 -3.5M408.9 367.0l-9.2 -5.5l-1.2 -11.3M100.4 217.4l-8.6 6.9l-5.6 7.1M146.4 392.7l9.6 -9.4l5.4 1.1l5.0 1.6M647.6 200.9l-3.9 4.9l-12.7 4.4l-7.7 -0.4l-11.4 -3.0l-6.5 4.5M210.6 164.6l-11.9 3.0l-10.3 -8.0l-10.9 -7.4M568.2 173.5l12.7 -1.2l4.5 4.3M336.2 157.3l8.9 -1.5l10.8 -6.1M356.2 301.2l1.0 6.5l3.4 12.6l2.4 5.9M317.1 197.9l6.4 -1.3l7.7 -1.7l4.8 3.7l-0.8 5.5M631.7 312.1l-2.9 5.3l-11.9 6.8l-5.8 4.5l-2.3 6.8l-0.8 8.7M148.0 356.6l3.1 4.1l-0.2 8.1l3.5 3.6M590.3 273.7l8.6 1.4l6.3 -2.2l8.8 4.0l6.5 -1.1l12.4 0.6M628.0 329.1l-5.7 -8.8l-1.5 -12.2l0.4 -6.8M84.4 329.6l-7.0 4.2l-5.7 9.1M665.1 155.5l-2.1 10.8l3.5 9.4l-3.5 4.0l-9.3 4.1l-7.6 -3.0M656.2 393.5l7.5 9.8l-1.2 7.8l-4.9 6.9l-5.1 2.2M617.1 389.5l-9.8 -0.3l-7.2 11.7M188.6 180.4l9.8 9.4l12.8 -3.8l7.2 1.7l6.0 8.9M347.2 195.6l-10.3 -5.1l-5.2 3.1l-8.1 5.0l-3.1 5.3M308.7 168.1l-10.0 2.0l-6.1 -2.2l-6.6 -11.7M297.6 245.0l4.4 -12.7l6.5 -4.7M199.6 221.8l-12.1 -3.6l-7.4 6.2l-12.8 -4.1l-8.6 2.1M458.6 229.8l-6.7 1.3l-6.9 -1.3M318.7 238.6l11.8 3.4l5.6 11.7l10.7 1.1l10.2 -4.5l6.0 -7.8M651.1 299.4l1.9 13.4l4.4 6.4M468.4 163.6l-9.8 3.3l-7.2 -5.3l-10.3 -7.9l-0.0 -10.2M221.9 330.4l6.7 -8.1l8.1 -7.2l2.1 -11.2l1.0 -9.9M445.4 258.1l-0.1 6.7l-1.6 13.6l1.5 13.2M148.1 389.0l-3.3 6.8l-7.6 0.4l-5.5 -3.3l-11.8 5.1M331.4 147.8l-6.2 10.1l-7.8 11.5l-11.2 7.4l-7.9 7.7l-0.1 6.8M444.1 206.0l10.3 -5.5l9.2 0.8M559.1 323.0l4.4 -3.9l6.0 -7.9l-1.7 -8.4M696.3 171.6l10.4 -1.3l8.4 -3.4l10.2 -5.3l5.1 -6.9M407.5 235.2l-1.5 7.6l-3.3 11.8l-1.1 8.3l5.5 11.1l10.2 9.2M442.3 196.8l-13.2 3.1l-2.1 7.0l-7.1 3.0l-7.4 2.5l-8.9 0.6M585.9 328.0l-7.6 7.1l-6.4 11.9l-7.5 6.2l0.0 8.4l2.2 9.8M419.9 369.4l10.8 -5.1l9.3 4.4l7.6 8.9l8.3 -0.3l5.4 -1.8M246.0 178.6l-2.1 -12.2l10.2 -8.0l4.3 -4.8l2.6 -9.3M374.2 182.0l9.5 10.2l2.3 4.9M312.5 344.4l-8.2 2.5l-2.0 4.8M60.5 178.5l10.5 -7.7l5.2 -3.6l3.1 -9.9l-4.4 -8.6M377.3 138.9l3.9 9.8l-1.6 5.3l8.4 8.5l10.5 4.5l6.5 0.5M217.0 158.0l5.4 -7.3l2.1 -5.1M628.8 288.9l2.4 -6.7l-1.7 -6.2l-0.5 -6.5l-11.8 -5.0l-8.4 -2.6M207.3 371.3l6.5 -5.4l6.8 -1.5M245.0 368.2l-3.5 5.5l-1.5 4.8l-7.8 3.6M280.5 221.8l2.9 -4.8l-3.4 -12.0l-4.1 -5.9l-7.2 -2.1M197.5 140.5l0.9 -7.1l-4.3 -5.3l-6.7 -10.1l-4.1 -8.2M565.7 196.1l-7.9 2.8l-5.4 -4.3l0.9 -9.5M191.0 253.7l4.6 7.7l-5.1 8.4l-3.1 9.1l5.6 10.4M488.4 155.8l-4.4 -10.6l-4.7 -2.0l-7.4 -8.5l-0.8 -7.0l-9.3 -9.1M85.9 378.7l-3.7 -10.9l-7.2 -2.5l-4.4 -7.4l-9.5 -8.3M347.5 301.2l1.3 -6.5l-1.2 -12.1l4.2 -12.4M57.7 321.7l-9.0 5.7l-1.8 5.7l-10.9 4.0l-5.3 -0.6l-4.0 5.0M171.7 213.1l-8.6 6.3l-9.5 -3.3M191.3 265.9l-8.9 -4.9l-0.6 -6.0l5.0 -9.7l12.6 -2.8l11.3 -0.3M683.9 315.6l12.2 -5.2l5.7 0.8l7.2 4.6l5.5 11.2M226.6 155.4l7.2 -3.6l10.0 -4.9l10.2 3.0l10.6 3.4l10.4 -3.7M599.7 341.9l-5.4 9.9l-6.8 2.8l-13.1 4.0M461.8 278.4l5.4 6.0l10.7 -0.6M131.5 317.0l-5.7 4.4l-7.3 5.3l-7.7 -2.7l-12.9 1.4l-6.3 7.9M261.2 352.0l-4.9 -4.1l2.2 -12.4l-0.2 -6.9M496.5 134.4l-3.7 6.5l1.7 11.2M336.7 161.6l-4.4 6.2l-3.7 4.0l-8.7 10.8l-7.1 9.4l-3.2 11.2M215.5 305.8l5.7 -8.1l-6.0 -11.9l-1.6 -10.5l7.9 -7.5l1.9 -7.0M132.5 138.5l-1.9 -6.4l0.1 -12.6l5.3 -3.8M558.8 356.0l-3.3 -10.3l-4.2 -5.7l-13.1 -1.9l-4.6 -5.6M79.1 160.1l12.7 -4.6l8.9 -3.3l3.4 -6.9l3.4 -4.6l5.6 -3.2M333.5 393.8l2.2 9.1l6.3 5.5M62.1 296.5l-1.5 -5.5l-10.8 -3.7l-2.1 -5.2l-13.5 -1.5l-9.5 6.5M291.0 132.1l4.3 -8.1l5.3 -8.1l4.0 -8.9l4.1 -4.9M305.9 296.1l4.3 6.7l2.2 9.8M319.0 230.9l-6.9 -4.2l-0.9 -5.2l-8.5 -7.2M336.2 154.1l-5.8 -12.2l-4.9 -5.2l-5.7 -4.7l-13.7 -1.3M174.9 334.2l-1.0 6.6l-5.7 9.9l0.7 9.1l-0.1 11.3M526.5 377.4l-8.4 -8.9l-9.5 -0.1l-12.5 -0.3l-5.6 -9.0l4.2 -8.7M344.6 316.9l-10.9 -4.9l-11.1 4.5l-1.5 7.0M286.7 135.1l-5.3 -2.9l-12.6 3.9l-5.0 13.0M174.1 162.1l-8.9 -7.6l-11.1 -4.1l-9.1 -8.5l-8.3 0.7M527.6 387.9l4.1 -7.1l1.6 -7.8M439.0 140.3l3.0 -6.0l4.3 -11.8l3.0 -5.2M54.8 160.9l-5.8 -12.0l4.0 -10.3l9.2 -4.6M206.2 401.3l4.5 -2.5l4.2 -4.8l8.4 -9.7l5.2 -1.0M161.3 352.8l4.2 -13.0l6.1 -6.7l1.9 -13.5l1.5 -8.1l1.9 -7.6M127.4 300.3l-2.0 7.7l-2.5 13.2l1.8 7.8l1.8 6.8M205.2 368.5l-2.4 -5.8l-3.3 -4.5l3.5 -7.4M419.5 289.4l-2.8 12.8l4.2 5.3M322.3 285.9l2.1 6.8l-2.1 5.9l7.6 11.3l6.7 4.9M604.1 197.4l4.5 -10.4l9.2 -9.2l9.4 -1.6l9.4 7.9l-1.4 6.2M176.5 371.9l-5.8 -8.3l-5.7 -3.3l-7.0 3.2l-7.6 8.7l-9.9 9.1M265.7 380.7l-5.9 -5.0l-8.5 -3.5M681.6 318.1l4.2 -6.7l-2.0 -12.9M401.7 336.6l-2.2 -6.6l-3.5 -5.8l-4.0 -12.1M468.7 184.3l0.7 -5.7l9.3 -9.0l2.7 -5.6M165.2 276.5l6.8 1.0l11.4 -2.7l8.6 0.8l7.1 3.8M78.9 243.3l8.7 10.8l10.5 8.4l0.4 5.2l5.0 9.7M247.9 243.5l-4.4 -2.8l-9.7 0.7l-6.4 -5.2l-7.5 -3.0M489.9 365.7l9.9 3.8l4.5 8.1l10.8 0.3l9.3 3.5M507.2 282.6l0.6 5.1l1.8 10.8l-3.5 7.5l-7.0 0.4M540.3 155.4l7.8 -6.0l3.2 -11.6l-2.7 -10.1M527.8 375.7l6.0 -5.6l8.6 -2.5l6.1 3.3M643.2 375.2l-6.1 11.6l4.3 10.8l10.5 2.5M306.2 365.2l13.1 2.4l4.3 9.7l6.2 3.8l8.9 0.2l5.8 -3.6M542.1 305.2l3.2 9.6l11.2 6.1l1.9 7.2l-3.6 11.9l1.5 7.8M361.5 372.5l5.1 2.0l6.8 10.7l0.3 5.4l-4.7 7.6l-2.5 5.7M658.9 316.7l5.0 -0.9l4.8 4.2l1.9 5.6M152.4 316.0l7.0 8.5l6.4 4.9l0.5 10.3l6.9 8.1M51.1 167.5l-5.9 -9.9l-13.0 -0.5l-3.6 4.8l-13.7 -1.2l-5.0 -0.7M188.8 277.5l-7.8 -9.9l1.9 -5.4M681.5 362.2l7.0 2.4l6.9 -2.7l1.3 -5.2M376.8 241.6l-7.8 1.2l-3.6 8.3l0.6 8.0l3.7 13.4M532.9 203.8l-4.7 4.3l-12.7 2.2l-11.5 -6.2l-5.0 -5.1l-9.7 -9.9M498.8 328.8l5.5 1.7l4.5 2.9l4.3 7.5M409.6 316.6l-9.1 4.5l-9.4 5.4l-6.7 4.4l-7.5 3.9M585.5 345.5l8.0 -3.0l10.1 -3.1l7.9 0.7l9.2 3.6M188.4 297.0l-6.3 5.2l-8.9 4.8l-4.6 -3.2l-3.2 -7.6l-5.7 -3.3M282.4 313.6l13.1 3.3l5.6 9.3l-2.8 7.4l-0.8 12.7l0.9 8.6M504.7 232.7l-3.4 4.7l-5.3 12.9l-6.6 6.2l-8.5 8.8M541.8 171.6l-4.9 -9.8l-1.9 -9.5l3.3 -6.5l2.8 -4.2M212.4 291.1l-7.0 2.1l-6.1 6.5l-6.8 6.5l0.6 6.1M673.5 209.7l5.2 -6.6l-3.9 -11.1M681.1 247.8l-8.0 -2.9l-11.5 -6.7l-13.6 2.1l-8.0 -2.6M480.3 220.3l9.6 1.7l12.9 2.2l3.9 3.5l5.4 7.4l8.2 9.5M314.8 259.3l3.8 -4.9l4.8 -1.8l4.0 -5.5l8.7 -10.1l2.1 -7.7M296.7 255.6l3.9 3.4l9.5 8.3M183.3 254.1l7.5 -5.6l-0.6 -11.2l-2.3 -10.0M699.7 352.4l2.4 -6.3l6.6 -0.9l9.7 -0.5M98.2 235.0l-3.9 -8.8l-3.1 -4.5l-10.9 -6.7l-4.5 -11.9M210.7 185.7l3.1 10.4l-1.1 6.2l-7.3 3.5l-9.7 5.9M479.2 328.6l10.0 -1.5l6.4 -3.8M566.4 210.0l-5.1 -10.4l-6.1 -3.1l-12.4 3.0l-3.0 5.5l-12.0 2.8M369.1 134.8l-2.0 -10.9l1.5 -7.5l-5.3 -11.4M137.2 379.7l2.3 6.4l5.2 1.7M188.7 356.9l0.9 -6.3l-8.4 -7.5l-12.0 3.4l-5.3 4.7l-6.7 4.1M411.0 172.7l6.3 -3.0l9.5 5.6l13.7 -0.8l5.8 -2.7M233.1 308.5l-4.8 -10.5l-6.1 -9.3l-12.3 -1.7M121.6 381.2l7.2 -3.8l9.4 0.6M654.7 156.2l-9.8 -1.2l-4.4 4.4l-3.6 12.5l-6.1 3.6M651.2 139.8l-13.0 -3.7l-4.4 -3.2M260.9 252.8l8.0 9.1l5.2 2.2l5.0 3.0l9.6 7.3M434.1 256.0l11.3 0.2l12.4 -2.1M91.3 328.2l-9.9 -9.1l-11.7 -4.6l-3.4 -8.7l-5.3 -2.4M621.2 162.7l-6.6 2.9l-5.2 1.4M210.1 388.3l-12.6 3.7l-9.6 -2.1l-5.5 2.1M110.8 145.5l4.4 -5.5l6.0 -2.1l3.4 -4.0M300.6 271.4l6.2 8.1l9.8 3.4M558.4 323.6l6.9 -4.2l1.0 -6.9l4.4 -4.9M241.4 153.8l-11.5 -7.1l-8.1 -3.0l-6.1 3.8M525.3 315.0l0.2 6.8l-8.8 6.9l-5.5 1.1l-3.5 12.4M65.9 273.4l-9.3 5.3l-4.1 9.8M599.2 344.2l8.8 8.4l8.8 8.1l5.4 4.9l3.1 7.1M75.8 257.3l1.2 -12.4l8.5 -9.6l3.8 -13.1M391.9 387.3l3.6 12.1l7.8 6.7l8.6 9.6l7.1 11.3M628.1 144.6l1.1 -11.1l10.9 -5.9l4.4 -3.7l11.7 -4.5l7.8 -6.8M593.0 345.9l13.1 3.4l4.3 8.2l4.8 6.0l9.8 1.1l5.9 -6.2M348.5 139.8l1.9 12.9l3.4 9.2l5.5 4.2l5.0 6.7M632.7 236.6l-1.5 6.9l-9.2 5.0l-8.0 -3.1M370.8 390.0l-9.3 -10.1l-4.2 -2.8l-1.2 -5.8M203.3 284.2l-2.7 -13.6l3.7 -11.2l3.9 -4.8l6.9 -2.3M315.6 270.4l-8.2 0.4l-10.2 -3.2l-9.7 -0.3l-12.0 -5.3M369.8 229.6l10.1 8.1l8.3 -1.4M246.4 269.9l7.9 -0.5l8.8 -10.3l6.3 -0.0l10.0 1.9l5.9 -6.2M534.3 304.8l2.6 9.6l5.9 12.5l1.4 12.2M487.5 234.1l7.4 1.4l8.6 -5.4l12.0 1.9l6.2 -1.1M381.6 368.8l2.0 13.0l-0.5 13.7l-5.0 6.6M498.7 204.8l1.7 -7.7l0.5 -6.0l-3.7 -7.7l-8.7 -10.5l-6.4 -2.4M640.8 253.0l7.2 -3.1l4.5 -10.9l3.2 -9.5M483.6 335.0l-5.1 6.9l-12.3 3.1l-4.2 8.0l5.4 8.2M501.7 213.8l-7.1 -0.9l-6.8 7.3l-10.7 2.9l-11.0 5.4M114.4 214.2l-0.5 -8.5l9.2 -7.2M266.6 237.4l10.4 -4.6l4.2 -10.8l2.4 -13.1l-2.0 -6.6M491.1 381.6l4.1 10.2l1.8 8.5M419.7 205.2l-1.9 -10.9l3.6 -8.8l12.5 -4.0M531.4 353.5l-11.2 -1.4l-8.8 -5.7l-5.6 -0.4l-11.8 -3.7M221.2 188.7l4.6 9.0l-2.1 5.3M56.4 271.2l9.0 1.3l6.7 6.0l10.2 9.2l6.2 8.3M62.3 276.8l-7.4 7.7l-3.2 7.3l-3.7 5.9l-6.4 2.5l-11.4 -4.6M395.5 139.3l5.6 -4.8l7.5 -11.3M221.7 155.3l7.7 6.9l12.7 1.7l4.2 11.5l-4.9 6.3l-5.6 -0.9M356.4 167.2l-6.0 8.7l1.6 6.3l-1.8 5.4l-4.8 1.9l-11.8 -2.8M531.4 340.6l-3.2 13.2l-10.6 4.6l-5.5 -0.4l-4.3 2.8M611.0 326.7l-6.2 -8.6l-3.6 -6.9l-4.3 -4.1l-3.1 -10.8M318.9 139.0l-6.9 -10.7l-10.0 -8.3M361.8 153.4l-5.9 10.9l1.9 5.7l1.7 9.4l5.3 5.0M55.0 377.3l4.0 -10.8l-5.0 -12.1l-3.2 -5.4l-11.4 -2.1l-5.1 -1.3M577.7 394.7l10.1 -1.1l8.9 9.1M264.4 282.6l-1.7 6.6l0.9 12.9l10.5 7.4M664.6 250.2l-5.2 -8.7l-0.8 -12.7l-7.7 -7.7l0.1 -13.9l4.3 -8.2M622.2 295.2l3.2 4.6l12.9 5.2l8.3 -1.8l11.3 5.1l8.8 7.7M66.3 156.4l2.1 -5.0l-2.2 -13.2M185.9 313.1l3.7 -5.2l-5.1 -10.6l-13.3 -3.4l-5.1 -4.4l-1.2 -6.4M379.0 159.7l4.6 -2.1l9.4 3.4l4.7 8.3l2.6 10.0l-2.3 5.2M76.8 278.8l-5.9 8.1l0.1 6.7l-0.1 12.5l6.7 9.2l1.3 11.0M690.0 297.0l3.4 4.7l12.1 4.5l0.9 5.7l4.7 6.2M236.2 264.9l-2.4 -4.4l-6.0 -0.8l-8.8 -5.5l-7.5 -5.2M309.9 296.6l3.4 -12.1l3.6 -3.9M490.4 361.3l-5.6 12.2l-3.4 10.8M207.7 212.4l-2.3 6.0l5.0 12.5l0.4 9.3l-2.7 11.5M536.3 219.3l0.7 -5.1l-5.6 -11.7M648.8 220.1l10.1 -6.7l5.2 -2.9l7.7 1.6M454.8 230.5l-8.5 4.8l-9.7 1.8l-6.1 -6.1l1.4 -11.1l5.3 -2.4M181.2 208.9l8.8 -1.0l7.8 -11.0M444.0 297.5l-0.2 7.2l2.5 4.6l0.6 6.9l7.8 11.2M465.6 291.2l-1.2 -7.6l-5.0 -2.4M50.6 229.0l2.0 10.6l2.1 12.7M648.7 253.0l4.2 -7.6l7.2 -5.4l5.8 -0.8l5.6 5.8M590.3 139.3l-2.5 -6.4l-5.2 -6.1l-5.2 -11.5M88.9 155.3l3.5 -5.6l-1.3 -5.7l6.3 -5.7l9.3 -3.9M188.4 148.6l4.1 7.1l2.7 6.0l7.6 8.8M285.5 176.0l2.3 -6.1l10.7 -8.0l-1.1 -10.8M626.2 337.7l7.6 -5.3l5.3 1.1l10.6 6.7M196.0 139.0l-3.2 9.5l-2.6 8.2M361.1 381.2l4.6 -3.9l-0.6 -8.2l-1.9 -13.3l-0.1 -5.6l-6.9 -9.4M412.5 366.8l6.2 -12.0l3.6 -6.2l-2.5 -12.5l-4.2 -3.9l-13.0 -3.0M345.2 329.2l4.3 4.0l11.7 3.3l8.8 -7.1l5.4 -4.9l8.1 -6.9M576.6 375.6l-3.9 -5.9l-5.8 -8.7M470.7 170.3l9.7 -8.2l7.1 -11.0l-0.9 -7.0l1.2 -13.1M95.1 189.8l3.7 12.0l5.2 5.8l5.5 1.0l4.2 -4.9l3.6 -8.6M84.4 232.3l5.9 -3.6l6.3 2.3l7.5 2.2l4.6 5.9l-4.4 10.9M62.0 179.1l-11.0 4.6l-7.1 10.3M143.2 351.0l-7.9 -8.2l-7.2 -0.1l-9.3 10.0l0.2 6.2l-0.2 10.2M626.1 146.4l10.6 6.5l2.7 6.7l1.6 6.8M140.5 332.8l4.1 -7.9l12.7 -5.2l5.0 2.7l3.2 5.7l5.5 1.5M289.7 212.4l-5.9 -7.5l-6.3 -9.2M284.9 272.4l-11.0 7.0l-6.1 2.7l-7.3 -0.1l-7.0 4.5l-9.7 5.5M89.5 331.9l-7.9 -1.2l-4.3 -7.9l-8.9 -7.8l2.0 -12.9l0.6 -7.9M682.0 396.1l6.8 5.2l11.6 -1.8l10.3 -4.8M291.9 265.0l-11.1 6.7l-1.7 9.4l-9.0 5.5M467.6 258.3l-8.1 1.0l-8.5 -2.9l-8.7 3.5l-1.4 11.0M147.2 231.2l9.4 5.2l7.9 8.1l-1.7 6.6l-5.7 5.1M209.8 353.6l-5.1 0.1l-11.5 -0.6M220.8 150.0l4.6 -5.6l-0.2 -6.6l9.1 -7.9M197.0 137.5l0.1 6.3l3.6 9.0M252.3 244.1l-11.7 6.4l-3.9 6.3l2.2 5.0l-3.7 5.0M614.0 220.1l-10.4 8.3l-4.7 2.8l-3.0 10.8M295.3 325.3l-3.0 5.0l-4.5 5.0M508.1 348.9l6.3 -10.7l4.0 -8.0l-7.6 -11.0M183.4 358.6l-9.4 2.5l-4.4 3.3l-1.7 4.9l-2.5 6.4M514.8 254.1l6.6 4.1l4.5 5.8l6.9 1.1M550.1 355.1l-4.1 -8.8l-9.1 -7.8l-7.3 -2.3l-7.1 0.6M156.7 301.6l3.9 4.7l6.1 7.5M280.5 325.1l-4.4 3.6l-5.6 7.5M207.7 312.2l-7.6 11.1l-4.6 10.4l-5.7 10.6l-6.5 4.3M74.7 339.4l12.3 -3.2l7.5 6.6l10.8 -2.7l3.3 -10.4M603.6 310.0l2.4 11.0l-3.0 11.2M62.0 377.6l-0.5 -7.8l6.2 -8.4M309.2 195.9l-8.0 2.1l-7.5 -5.2l-4.4 -3.8l1.7 -13.4l4.9 -7.0M190.5 181.1l1.0 -6.7l8.3 -8.3l9.3 1.2l5.7 7.7l-0.1 5.2M379.5 351.6l-7.9 -8.4l0.1 -11.1l2.0 -5.1l-4.8 -5.3M267.9 344.4l-10.7 8.4l-6.3 10.9M581.5 203.1l-7.1 4.7l-6.6 11.8l5.9 9.4l-0.0 11.9M415.2 378.1l11.5 -0.8l10.9 5.8M208.1 308.8l-0.1 9.9l4.2 11.7l8.0 9.8l-1.0 12.9M132.8 385.3l7.2 -10.3l13.5 1.3M351.3 256.1l3.9 -7.2l-2.7 -5.4l5.0 -12.1M57.9 231.3l-2.1 -6.4l-3.4 -7.9l3.6 -13.1l-1.6 -10.6l6.1 -7.0M634.8 329.8l-3.1 5.1l-8.4 9.2l-6.6 6.6l-7.3 10.7M480.3 187.4l-10.9 -0.8l-7.0 -8.4l-4.7 -7.8l-2.0 -4.8M127.5 401.7l-3.4 11.6l0.2 7.0l-6.0 10.6l1.4 12.9M696.0 248.5l-6.7 -1.3l-7.7 1.9M524.3 181.6l-4.9 -3.9l1.4 -13.9M411.3 346.5l-3.2 7.6l-6.7 1.7M56.5 267.2l11.0 -7.7l5.6 -2.9l12.0 -2.3M320.7 294.2l3.5 6.0l1.3 5.3l-4.3 11.5l-6.1 2.1M557.6 277.0l4.2 5.0l-1.6 13.7l-3.4 4.9M346.2 292.0l-3.6 4.1l-8.9 -1.1l-4.0 4.0l-11.0 1.4l-5.6 7.3M462.5 401.4l-7.0 -0.4l-5.3 -6.3l-5.8 -5.2M460.1 251.7l7.6 0.5l12.5 -1.4l9.2 4.8l6.8 3.1M383.2 258.9l-7.0 4.1l-4.0 4.0l1.1 11.6M262.5 322.0l5.9 -11.0l3.0 -4.4l8.7 -3.2M376.9 324.0l-1.2 -6.3l1.7 -11.6l-9.0 -6.6l-6.8 -8.7l-6.2 -5.0M418.1 190.5l3.6 -7.8l-1.6 -5.8l6.9 -10.0M58.7 218.6l-7.9 5.7l1.1 9.9l-4.0 6.8l-6.0 0.5l-8.6 6.0M414.1 363.3l8.1 -9.2l4.3 -2.7l7.3 2.2l12.9 3.8l5.7 0.1M179.4 330.7l5.3 1.6l11.3 -2.7l12.8 3.3l3.3 9.4M649.5 155.3l5.2 1.4l11.2 3.0l10.6 1.0l5.6 3.5l7.4 -2.0M96.5 174.5l8.1 6.9l6.4 -1.0l6.9 -7.9l12.2 -6.2M279.0 396.3l-7.4 5.2l-4.2 3.2l-12.6 3.5l-7.0 11.0l-10.0 3.7M473.5 251.7l-1.8 -9.8l3.2 -4.0M330.7 137.2l-4.1 -4.8l-12.0 1.6l-9.4 0.9l-6.1 -2.0l-7.6 -5.7M650.0 321.2l9.3 -6.0l10.5 -4.7l11.1 -7.9l12.4 5.0M447.0 216.7l-6.6 -2.1l-8.2 -6.6l-9.3 4.2l-7.5 7.7M410.5 348.1l-12.7 0.4l-4.7 -8.2l1.1 -5.3l0.2 -5.7l-1.1 -7.6M376.0 322.1l5.0 -5.6l-1.6 -12.7l-2.9 -11.2M210.4 328.9l-12.5 1.1l-4.8 2.8M211.4 342.9l-3.5 10.7l-4.5 6.0l-6.4 4.6l-11.0 2.4l-3.8 -3.9M592.9 350.9l0.5 12.7l-5.0 5.4l-6.2 6.5M57.9 153.2l-3.7 -9.7l2.5 -5.1M233.1 358.6l-6.4 -10.0l-3.1 -12.2l-4.5 -4.6M639.2 191.5l1.7 -13.1l-6.2 -11.6l-3.3 -13.3M550.0 302.0l-8.0 3.6l-6.9 3.7l-0.9 8.4l-4.0 8.4l-3.3 5.9M211.8 272.1l5.6 3.4l8.9 -2.3l7.1 -2.0l8.5 -5.3M543.8 290.7l10.2 9.1l-1.3 6.1M425.3 393.0l-2.2 4.8l1.3 6.0l6.8 8.3M412.6 388.0l-5.8 -12.0l-12.2 -6.0l-4.5 -4.8l-6.7 -0.9M234.4 323.3l-2.9 -6.3l-9.4 -1.9M478.3 335.1l-4.3 12.6l-11.0 1.8M511.7 131.5l6.2 -4.2l10.8 3.0l7.8 2.4l7.1 6.8l10.1 0.7M693.2 376.6l-5.3 5.2l-9.6 -0.5l-12.9 4.5M308.3 320.0l10.6 -4.9l3.7 -5.1l3.6 -10.4l13.5 -3.3l7.0 7.9M472.3 174.7l-5.8 -11.7l-5.3 -3.4l-6.2 1.1M429.4 348.0l3.7 7.9l1.7 4.8M79.3 245.5l7.5 9.9l5.5 2.0M356.1 236.0l0.8 11.0l-5.6 7.2M373.0 381.3l-7.3 0.1l-9.8 -6.6l-5.5 -1.3M539.0 151.1l-2.4 -5.9l-5.7 -5.5l1.1 -11.3l-0.4 -6.5l-5.3 -3.0M600.3 306.6l4.7 2.6l8.6 -4.5M534.7 182.8l-8.7 2.0l-5.8 -0.7l-2.7 -4.3M188.0 239.0l1.8 7.4l3.7 6.2M477.5 220.5l7.1 5.4l5.6 -0.6l13.9 -0.1l3.6 4.7l5.7 7.5M169.1 312.5l-11.9 6.3l-9.1 -1.9l-7.8 5.1l-1.9 11.0l-5.8 8.4M685.4 143.3l-6.9 -3.8l-9.1 4.7M518.2 225.3l-6.5 -10.6l-8.6 -2.5l-5.6 2.6l-8.4 2.9M196.2 376.9l-0.6 -6.0l-3.9 -10.3l-5.3 -0.7l-12.6 2.6M698.6 217.3l9.7 4.8l1.3 10.0l6.9 6.8l5.9 5.4l8.6 4.3M429.1 191.3l-1.6 8.6l-3.4 5.7l-4.3 6.1M549.2 321.7l-4.7 -12.5l-2.7 -7.9l-6.1 -6.0l-4.1 -11.7l-4.2 -10.8M181.5 253.5l-3.2 4.8l-2.9 10.5l-11.6 7.6l-8.7 7.8M209.8 230.3l8.4 -2.1l9.7 -3.9M628.4 366.3l0.0 9.3l-5.4 10.3l1.2 5.8M171.0 373.9l5.3 11.5l-3.3 8.3l-1.6 7.7M684.0 180.7l11.1 0.3l4.6 -2.7l1.7 -5.2l0.9 -6.3M558.6 269.0l7.2 4.6l5.2 5.1l8.2 -2.3l4.4 -2.6M286.4 337.3l-4.8 4.7l2.8 10.7M444.3 210.6l8.0 6.4l5.3 5.9l7.8 -1.5M466.3 294.1l-7.8 4.4l-11.1 -7.1M51.2 192.9l0.7 12.7l6.0 8.4l4.2 3.4l2.9 11.9l8.1 8.8M357.2 398.5l10.0 2.7l9.3 -4.6l11.8 -6.8l4.0 -13.0l11.5 -2.6M534.6 385.4l4.6 -5.2l-2.1 -5.4l-8.0 -2.4l-9.5 -1.4M231.9 321.2l-6.9 6.8l0.4 7.6l-0.2 7.0M296.8 360.8l-5.7 -0.9l-3.3 -7.7l-10.4 -3.4l-7.4 -3.0M257.8 360.0l6.2 11.5l4.5 2.3l0.1 6.8l-0.5 8.2l3.0 5.8M506.0 175.6l0.1 -7.0l9.5 -5.8M487.0 265.7l-5.6 0.5l-4.7 4.8l-9.5 1.1M504.4 339.8l-8.4 -5.0l-6.1 -9.8l-7.4 -1.2l-6.5 1.9M683.5 344.4l11.7 0.0l5.7 -2.4l8.8 3.5M403.9 175.5l9.1 -5.5l10.5 -3.8M379.0 171.0l-4.3 -11.7l-1.6 -4.9M628.6 250.2l6.9 -10.7l-1.0 -13.0l-2.2 -4.8l-4.0 -3.9l-10.5 1.7M120.7 174.3l2.0 11.4l6.0 3.2l0.7 10.4l-8.2 5.6M44.6 147.0l8.3 10.4l5.5 8.9l-1.5 6.1l-5.8 7.1M559.8 254.6l8.5 8.0l0.6 7.2l-2.9 8.1M188.9 189.9l7.6 -3.0l9.8 -4.2l12.0 2.2l6.9 5.1M146.6 265.5l3.1 -11.5l0.7 -6.6l6.2 -2.9l9.3 5.7l10.1 -0.1M635.5 202.5l-4.6 7.0l-4.8 5.1M329.7 131.5l5.1 -3.6l8.8 -4.9l10.5 4.1l10.4 -3.9" stroke="#808080" stroke-width="0.9" opacity="0.55" fill="none" stroke-linejoin="round"/>
<path d="M104.1 394.1l4.5 -8.6M329.2 313.5l2.5 -4.7M107.5 242.6l4.4 -4.4M466.3 248.6l2.4 4.5M161.8 287.5l3.6 -3.6M428.0 183.3l4.6 -8.7M52.0 383.0l5.0 -5.0M628.1 306.1l5.5 5.5M184.6 342.7l3.9 7.4M433.4 385.6l6.0 -6.0M286.3 261.1l7.7 7.7M145.0 214.2l3.7 6.9M524.8 158.4l3.8 3.8M176.8 200.3l4.1 4.1M161.4 131.0l2.6 -4.9M201.1 369.0l2.2 -4.2M188.5 133.2l4.3 8.2M339.5 263.9l7.8 7.8M178.9 140.9l3.2 -6.1M655.5 237.4l3.2 6.1M449.4 350.0l4.1 -7.7M427.0 274.9l2.8 -5.2M587.5 376.4l2.6 -4.8M73.4 189.5l7.8 -7.8M376.7 163.1l4.8 9.1M325.4 133.4l3.9 7.4M458.1 359.5l4.5 -8.6M618.3 248.6l3.5 -3.5M300.4 131.7l1.9 3.7M332.5 219.1l4.5 -4.5M125.6 312.7l2.0 3.8M235.9 346.6l3.4 -3.4M523.5 149.5l1.9 3.7M518.9 230.9l5.9 -5.9M461.2 331.5l3.4 3.4M347.2 263.0l3.1 -5.9M328.3 192.8l4.4 -4.4M467.5 356.6l3.6 -6.8M408.1 357.0l6.1 6.1M214.3 381.5l5.0 -5.0M544.5 205.8l5.8 -5.8M154.1 171.3l4.8 9.1M198.1 283.0l2.1 -4.0M446.2 310.8l4.8 9.2M331.3 337.7l7.4 7.4M113.1 212.7l6.8 6.8M281.3 347.4l2.9 2.9M140.7 191.3l6.9 6.9M405.8 294.8l3.5 3.5M582.9 244.0l3.8 7.2M247.4 392.3l5.5 5.5M474.2 213.7l7.1 7.1M107.3 148.3l5.7 -5.7M516.9 206.3l2.8 -5.3M420.1 136.8l3.8 -7.2M238.4 205.5l3.3 3.3M381.8 223.3l2.2 4.2M376.8 267.6l3.1 5.9M313.1 372.9l3.8 7.2M435.9 196.3l4.9 -9.4M210.7 351.7l3.5 -3.5M402.4 165.7l3.2 3.2M610.8 178.5l4.1 7.8M654.5 239.2l6.4 -6.4M104.3 310.0l3.7 3.7M464.7 274.3l2.0 -3.8M167.1 391.2l4.1 -7.8M170.2 311.6l3.2 6.0M416.9 270.7l4.8 -4.8M134.0 269.8l5.1 9.7M348.3 358.4l6.2 -6.2M91.2 282.3l7.0 -7.0M621.3 203.5l3.4 -6.5M247.2 230.9l7.0 -7.0M482.8 177.2l7.2 -7.2M390.9 260.6l5.4 5.4M135.7 280.3l5.0 9.5M231.5 153.3l4.8 -4.8M49.0 249.0l3.4 -6.4M331.8 302.1l3.3 3.3M665.0 240.3l2.9 -2.9M106.7 323.3l4.0 4.0M230.2 393.9l3.7 7.1M62.0 359.4l5.9 5.9M428.2 370.7l3.7 -6.9M577.5 172.8l2.7 -5.2M304.4 182.8l3.8 7.2M649.5 351.2l2.0 3.8M371.6 268.4l4.5 4.5M507.2 383.4l4.0 7.6M659.6 341.8l3.3 -6.3M349.3 284.6l6.2 6.2M156.7 161.7l3.9 -3.9M179.0 311.9l7.5 -7.5M698.8 251.8l6.0 6.0M155.5 394.4l5.0 -5.0M85.4 139.4l4.3 -8.1M373.8 154.4l7.0 -7.0M555.6 289.9l4.5 -4.5M457.1 243.7l6.0 6.0M374.5 218.5l2.5 -4.8M262.5 134.3l7.0 7.0M604.1 363.7l4.1 -7.9M678.6 357.8l3.8 -7.1M49.3 234.9l3.2 6.1M673.8 266.4l2.2 -4.2M105.7 309.5l4.3 -8.1M569.2 293.1l6.5 6.5M351.0 338.8l2.0 3.8M620.8 311.2l4.0 7.7M42.8 259.6l4.6 -4.6M350.2 159.0l4.5 4.5M399.4 382.6l4.8 -9.2M414.6 399.9l5.0 5.0M623.6 302.9l5.9 -5.9M356.5 302.9l6.3 6.3M666.0 134.8l4.2 7.9M503.8 338.4l3.0 -3.0M468.8 347.9l6.5 -6.5M593.6 333.1l3.9 7.3M134.6 349.3l4.1 4.1M381.6 235.5l2.4 4.5M336.9 359.8l4.9 9.3M53.3 204.4l2.0 -3.9M121.6 358.2l4.8 4.8M402.6 382.5l4.4 4.4M87.9 233.9l3.6 6.9M67.7 369.0l3.5 -6.7M135.5 353.3l3.9 3.9M661.1 350.6l7.3 -7.3M76.8 378.3l2.2 4.1M546.8 340.5l5.1 9.6M126.4 181.2l4.1 -7.8M601.2 284.6l4.5 8.5M440.2 180.7l4.8 9.0M200.9 320.0l3.8 3.8M243.1 132.7l2.2 4.1M227.0 340.1l4.5 -8.5M397.7 251.0l4.6 4.6M621.7 174.9l7.4 7.4M45.4 377.3l2.1 -4.1M203.9 310.8l3.9 -7.4M118.0 238.6l4.0 -4.0M561.5 324.6l3.6 -6.8M502.6 165.5l2.1 -4.0M317.3 210.1l3.9 3.9M255.7 207.5l2.9 -5.4M451.9 155.3l5.1 5.1M415.1 364.7l3.5 6.6M301.7 193.8l5.4 -5.4M166.9 132.7l4.6 -8.7M677.4 223.9l5.6 5.6M518.4 153.8l4.0 -7.6M244.1 270.6l2.9 5.5M589.1 209.0l3.9 -7.3M451.0 178.0l4.0 7.5M616.8 243.0l4.2 4.2M394.9 265.7l4.9 -4.9M54.3 400.8l6.3 -6.3M491.4 156.1l4.4 -4.4M174.8 231.7l3.9 -7.5M282.3 160.1l4.4 4.4M116.8 334.1l4.0 -7.6M417.5 302.5l7.5 -7.5M431.0 278.1l2.9 -5.6M295.4 401.9l2.0 -3.8M370.7 269.5l6.9 6.9M78.2 211.8l7.2 7.2M197.0 342.5l4.8 -9.1M311.2 151.8l3.7 3.7M177.7 156.0l7.4 -7.4M582.2 212.8l3.5 3.5M255.3 247.0l3.0 3.0M362.5 140.3l3.9 -7.4M225.3 251.8l4.1 -4.1M349.7 174.2l5.0 -9.4M635.6 336.7l5.8 -5.8M472.7 237.4l3.8 3.8M683.7 313.2l6.0 -6.0M107.1 221.6l5.9 -5.9M251.5 133.6l4.4 -8.4M515.4 212.7l5.7 -5.7M186.5 187.5l3.7 7.0M356.3 227.5l2.1 -4.1M612.2 286.9l5.7 5.7M498.1 301.8l3.5 6.6M328.3 306.8l5.3 -5.3M65.2 340.0l4.4 -4.4M554.1 319.4l4.0 7.7M545.4 303.5l4.5 -8.5M452.9 360.3l3.6 6.9M435.6 328.5l7.7 -7.7M303.8 137.1l3.0 5.7M522.5 287.5l4.9 -4.9M229.4 232.2l7.6 -7.6M241.2 337.0l2.7 -5.2M624.5 385.3l4.4 8.3M488.9 380.5l2.7 5.1M667.7 390.2l3.9 3.9M192.4 342.2l2.7 -5.2M266.9 328.7l2.8 5.3M379.5 389.5l3.9 -3.9M118.0 230.5l5.3 5.3M323.0 154.5l3.5 -6.6M282.6 271.2l4.5 4.5M646.9 345.4l5.2 -5.2M258.5 167.3l3.9 7.3M106.1 381.8l3.0 -3.0M503.4 195.6l3.0 -5.7M369.9 311.3l6.1 -6.1M193.2 271.3l2.5 -4.7M510.3 142.2l3.0 5.7M361.4 270.1l7.5 -7.5M457.7 271.1l7.1 -7.1M124.5 189.9l3.4 6.4M656.2 222.6l2.5 -4.8M551.4 136.4l4.8 -9.1M173.2 278.9l6.2 6.2M344.9 392.8l5.8 -5.8M107.0 390.7l3.8 3.8M409.7 305.1l4.1 7.8M312.0 334.5l4.3 4.3M453.7 349.3l3.4 -6.5M577.2 212.6l3.8 3.8M158.2 186.4l4.1 7.7M321.5 395.0l7.6 7.6M95.4 321.8l5.8 5.8M51.4 381.4l4.9 -9.4M477.0 199.6l4.9 4.9M414.3 274.1l2.3 4.4M697.6 331.5l4.0 -4.0M59.4 303.3l2.3 4.4M313.8 387.5l5.0 5.0M501.3 268.1l5.3 5.3M426.8 360.9l4.8 4.8M130.8 340.0l3.5 -3.5M379.1 348.4l5.3 -5.3M655.6 206.3l4.0 4.0M344.5 306.5l7.2 7.2M378.6 269.9l3.5 -3.5M101.9 193.7l3.4 -3.4M317.0 140.4l3.4 -6.5M621.0 320.0l6.6 -6.6M240.1 328.6l3.5 -3.5M490.7 256.7l2.4 -4.6M268.1 354.4l5.1 9.6M119.1 188.0l3.4 3.4M534.5 221.6l7.4 -7.4M468.9 308.8l5.3 5.3M540.5 286.2l4.5 -4.5M455.7 149.1l5.6 -5.6M279.7 237.0l2.7 -5.2M237.3 296.1l1.9 -3.6M517.2 238.1l2.4 -4.6M120.1 141.0l3.6 3.6M74.9 323.3l4.1 -7.7M641.5 377.2l7.0 -7.0M200.1 200.1l3.3 -6.3M118.0 181.5l2.2 4.2M432.9 398.0l4.9 -9.2M680.0 246.1l3.2 -3.2M574.9 311.4l4.4 -8.4M659.2 338.3l3.3 -3.3M429.5 245.1l5.3 -5.3M514.9 401.9l5.0 -5.0M184.5 373.1l5.0 5.0M577.8 180.3l5.0 9.5M520.6 148.7l3.4 3.4M311.9 299.9l4.6 8.8M336.6 218.3l3.7 -3.7M243.0 298.6l2.7 5.1M427.7 205.7l4.3 -4.3M503.8 188.6l5.7 -5.7M334.1 368.5l2.4 4.6M581.3 213.6l5.1 -9.6M143.1 229.9l4.9 4.9M649.0 198.9l4.1 7.8M292.7 204.6l3.5 -3.5M643.9 401.6l3.5 -6.7M435.2 168.2l5.1 9.6M549.1 202.9l2.5 -4.7M675.9 155.8l6.9 6.9M404.0 219.6l7.7 -7.7M585.3 344.3l6.3 6.3M625.1 308.2l5.7 5.7M56.1 284.5l6.9 6.9M427.6 247.4l5.2 -5.2M400.2 349.6l2.0 -3.8M689.1 200.4l4.8 4.8M555.6 343.0l4.2 7.9M533.7 389.0l2.8 5.3M220.8 154.5l3.2 3.2M293.0 286.7l3.0 -5.6M218.6 300.5l2.5 4.7M618.0 161.0l3.0 -3.0M283.7 270.3l5.6 -5.6M520.8 373.3l2.4 -4.6M286.8 154.3l4.6 8.7M57.9 147.3l3.5 -3.5M235.3 361.6l5.3 5.3M145.2 372.7l5.5 -5.5M235.9 178.6l2.4 -4.6M306.6 165.4l2.3 -4.4M254.9 196.1l4.5 8.5M99.0 220.4l4.7 -8.9M648.7 338.4l5.6 5.6M443.3 172.2l2.9 5.5M309.9 276.9l3.7 3.7M659.5 245.2l2.9 5.5M137.0 337.4l4.7 4.7M267.6 172.6l3.4 -6.4M577.0 223.1l4.2 7.9M107.8 216.2l4.6 4.6M498.7 240.4l4.3 8.2M407.5 229.2l2.3 4.4M87.4 366.2l6.3 6.3M474.5 247.7l6.8 6.8M390.1 281.1l4.9 -4.9M408.8 155.4l3.3 -3.3M132.6 313.3l7.4 7.4M75.1 133.9l6.6 -6.6M653.7 233.3l3.6 -3.6M389.1 375.1l5.0 -9.5M574.9 132.3l6.2 -6.2M241.8 329.3l4.9 -9.3M64.0 249.2l6.2 -6.2M338.4 283.5l5.0 9.5M45.8 374.2l3.7 -7.0M404.2 133.4l4.2 -8.0M584.4 232.1l6.0 6.0M70.9 164.4l3.3 3.3M305.1 194.1l4.0 -7.5M334.5 277.1l3.8 -7.1M391.0 277.2l5.1 -9.6M672.1 327.9l2.1 -4.0M122.6 224.7l5.5 -5.5M647.9 311.5l7.6 -7.6M187.3 191.1l4.8 4.8M230.0 135.1l2.8 -5.4M485.7 283.0l4.3 8.2M419.8 302.0l5.2 -5.2M347.2 208.5l3.3 3.3M666.2 218.5l7.1 7.1M579.6 263.3l4.0 -4.0M284.7 296.6l4.5 4.5M425.1 379.0l3.8 -7.2M115.1 359.7l2.9 5.6M514.6 352.1l3.7 -3.7M678.4 290.7l5.1 5.1M689.8 216.0l7.5 -7.5M109.6 232.1l3.6 -6.8M672.6 199.7l3.2 3.2M393.0 319.7l2.1 4.0M407.8 323.4l4.7 -9.0M210.4 353.5l4.5 4.5M57.2 211.0l4.6 4.6M425.0 195.1l2.2 -4.1M648.3 150.4l3.0 5.7M135.8 152.1l3.3 -6.3M196.8 179.4l4.9 9.3M265.5 353.1l4.1 -7.7M597.3 241.8l3.2 -3.2M687.4 278.0l3.6 3.6M649.5 250.1l4.8 -4.8M599.8 211.2l2.8 -2.8M102.0 324.3l3.5 -3.5M333.3 291.5l6.4 -6.4M690.8 138.4l2.9 5.5M80.8 202.4l5.7 -5.7M688.2 187.7l6.0 6.0M192.5 193.4l5.0 5.0M691.8 218.9l5.1 9.7M657.8 346.5l4.2 -7.9M254.9 346.8l5.5 -5.5M489.5 157.2l2.2 -4.2M533.5 312.5l4.7 8.8M96.4 314.2l3.4 -6.5M352.9 316.8l3.5 -6.6M654.6 209.0l7.3 7.3M697.6 281.9l3.1 5.8M434.4 351.8l4.1 -4.1M496.6 401.8l3.5 -6.7M367.4 277.0l3.8 -3.8M269.0 397.7l3.2 3.2M118.8 179.8l3.9 -7.4M654.7 312.5l4.8 4.8M423.6 272.3l3.0 -3.0M388.1 302.4l6.6 -6.6M268.1 219.2l4.6 -4.6M450.2 277.8l2.5 4.8M636.7 386.1l4.3 8.1M599.0 146.7l1.9 3.6M507.8 388.7l6.7 6.7M298.8 273.0l4.3 -8.2M276.1 358.2l7.4 7.4M526.6 320.7l5.7 -5.7M145.1 356.9l2.9 -5.5M217.3 380.6l1.9 -3.7M265.7 225.5l6.6 6.6M88.9 250.7l5.4 5.4M606.5 344.8l4.5 -8.5M562.0 345.6l4.2 4.2M298.0 368.8l4.8 -4.8M187.3 317.0l6.2 6.2M383.6 319.1l7.7 -7.7M552.2 382.2l3.2 3.2M536.4 192.3l5.1 9.7M299.3 364.1l3.3 6.2M125.5 401.3l2.5 -4.8M241.7 132.9l4.5 -4.5M313.9 332.7l4.4 -4.4M600.8 330.8l4.8 -4.8M415.2 151.8l3.4 3.4M398.3 262.8l6.4 6.4M447.4 186.8l6.9 -6.9M449.7 192.6l3.2 -6.0M218.5 171.3l3.9 7.5M656.6 177.6l5.0 9.5M348.8 363.0l5.5 -5.5M359.0 377.5l4.0 7.6M525.3 277.9l3.2 -3.2M696.1 330.1l7.0 -7.0M147.3 174.4l3.1 5.8M581.7 262.1l4.1 7.8M606.2 167.5l3.0 5.8M254.9 136.2l4.3 8.1M366.3 131.8l3.2 -3.2M352.4 309.0l4.8 -9.1M121.6 266.8l2.9 2.9M162.6 277.7l5.9 -5.9M450.4 233.4l6.1 6.1M170.2 286.5l2.1 4.0M548.8 177.6l2.2 4.3M413.0 393.7l2.8 -5.3M171.2 240.8l6.2 6.2M195.2 234.4l4.9 4.9M391.0 175.1l2.4 4.5M477.9 169.5l5.3 -5.3M669.8 187.0l3.6 -3.6M91.8 225.9l4.0 7.6M98.9 190.4l3.0 3.0M103.0 284.4l3.3 3.3M285.2 384.4l3.6 -6.8M265.4 387.5l3.7 -7.0M410.8 401.3l6.6 -6.6M396.5 325.3l7.6 7.6M542.6 189.7l3.3 -6.3M193.6 342.8l6.5 -6.5M88.6 344.1l4.2 -7.9M519.4 399.2l4.5 -8.5M215.2 312.3l4.1 -7.8M69.4 265.8l6.1 6.1M149.1 357.0l2.2 4.2M360.4 150.1l5.0 -5.0M681.4 260.5l3.6 6.8M297.4 167.2l5.9 5.9M97.8 230.4l4.6 -4.6M251.8 332.2l3.8 -7.3M582.5 171.4l7.3 -7.3M189.4 220.7l7.6 -7.6M330.9 287.0l6.0 6.0M433.5 355.5l4.1 7.8M516.4 169.7l7.3 7.3M244.5 243.9l2.8 -5.3M647.0 231.0l3.6 6.7M194.5 262.3l5.2 -5.2M688.4 162.3l5.2 -5.2M612.4 399.4l4.5 8.4M118.4 372.2l3.5 6.6M189.1 152.3l3.1 -5.8M603.3 378.2l3.1 -3.1M149.3 368.0l4.7 -8.9M140.6 261.2l1.9 -3.6M303.4 326.8l5.3 -5.3M443.3 364.3l3.8 7.2M74.2 367.3l7.3 -7.3M466.3 298.0l2.3 -4.4M47.3 187.8l2.9 5.5M591.2 385.5l5.1 9.6M86.5 236.3l2.4 -4.5M555.5 367.7l3.5 3.5M375.1 393.2l2.4 -4.6M248.2 218.8l4.4 -8.4M163.8 206.7l1.9 -3.6M444.3 156.7l4.9 4.9M651.8 191.5l4.0 4.0M72.5 154.4l6.7 6.7M677.8 272.2l6.4 6.4M63.6 270.8l5.2 5.2M533.6 357.6l6.9 6.9M497.3 163.6l4.5 4.5M196.3 292.2l7.6 7.6M611.5 164.7l5.0 -9.5M201.6 263.5l3.9 -3.9M126.6 296.4l7.6 7.6M92.0 178.6l2.6 4.8M646.2 156.4l4.8 9.1M412.1 295.9l3.7 3.7M170.0 245.2l3.4 3.4M187.9 308.0l6.5 6.5" stroke="#858585" stroke-width="0.8" opacity="0.45" fill="none"/>
<path d="M43.0 136.0L44.9 137.3L46.3 130.9L47.8 137.3L49.3 131.6L51.2 137.1L53.4 132.4L54.8 138.0L56.9 133.7L57.9 136.0h5.5M60.7 136.0L63.2 132.8L64.8 136.9L66.2 129.7L68.1 138.4L69.8 131.9L71.3 137.3L73.5 131.7L75.3 137.9L77.5 133.1L78.5 136.0M106.0 136.0L107.9 133.1L109.4 137.2L111.7 133.5L113.7 137.9L115.5 131.9L117.5 137.3L119.7 132.6L121.1 137.0L122.6 133.7L125.1 137.1L126.1 136.0h5.8M127.7 136.0L129.4 136.7L131.3 132.6L133.1 136.6L135.3 133.6L137.1 137.4L138.1 136.0h2.6M189.0 136.0L190.6 130.1L193.2 138.5L195.8 129.5L197.5 138.6L199.4 130.7L201.0 137.8L202.9 132.8L205.4 138.4L207.7 131.6L210.2 137.9L211.2 136.0h5.0M218.6 136.0L221.0 137.1L222.6 132.7L225.0 137.9L226.8 131.7L229.4 137.3L231.9 130.0L234.3 138.3L235.9 130.9L237.6 137.3L239.2 130.9L241.7 137.3L243.8 132.5L244.8 136.0h3.5M248.4 136.0L250.9 132.5L252.4 136.5L254.0 131.5L255.8 137.9L258.3 133.0L260.7 136.7L262.8 133.9L264.7 137.4L266.5 133.8L268.9 137.6L270.8 133.8L271.8 136.0M277.4 136.0L279.4 133.7L281.3 137.2L283.0 132.6L284.5 136.7L287.1 132.0L288.1 136.0h5.3M313.0 136.0L314.8 132.8L317.2 137.2L318.9 133.1L320.9 137.0L322.4 134.0L323.9 136.5L326.1 132.1L328.5 136.5L329.9 132.6L332.2 136.9L334.3 133.7L335.8 136.8L337.9 133.9L338.9 136.0h3.0M346.5 136.0L348.7 137.1L350.9 130.8L352.5 138.6L354.3 132.0L356.6 137.3L358.7 132.5L361.0 137.7L363.3 131.2L365.3 136.9L367.6 131.5L370.2 136.6L371.2 136.0M373.6 136.0L375.2 138.2L377.0 130.4L378.6 137.2L380.2 132.0L382.7 138.4L385.0 131.7L387.5 136.6L388.5 136.0h5.0M390.9 136.0L392.8 137.5L394.9 133.7L397.5 136.9L399.0 133.6L401.4 137.2L403.8 132.7L406.0 137.4L408.6 133.6L409.6 136.0M411.2 136.0L413.7 131.0L415.9 138.2L418.0 131.0L420.0 136.7L422.0 131.4L423.7 137.9L426.2 133.5L428.2 137.7L429.2 136.0M436.6 136.0L439.0 133.2L441.6 138.1L443.2 132.1L444.8 138.0L446.8 131.8L448.6 136.8L449.6 136.0M453.0 136.0L454.8 137.4L456.6 131.7L459.1 137.9L460.8 131.0L463.1 138.0L465.1 131.4L467.4 137.9L468.9 133.5L470.9 138.1L473.2 131.9L474.2 136.0M481.1 136.0L482.6 137.0L484.1 131.6L485.9 137.9L488.4 134.0L490.9 136.5L493.3 133.4L495.2 137.9L497.1 133.6L499.1 137.7L500.1 136.0h3.5M503.1 136.0L505.2 132.2L507.1 136.7L508.9 132.9L511.0 137.6L513.4 132.2L514.8 136.5L517.2 133.6L518.2 136.0M519.6 136.0L521.8 137.4L523.8 132.6L525.3 137.0L526.8 131.4L529.4 137.7L531.3 131.3L532.3 136.0h5.9M538.2 136.0L540.0 137.9L542.5 133.4L545.0 138.0L547.2 130.9L548.2 136.0M549.6 136.0L552.0 137.9L554.0 133.0L556.4 136.7L559.0 133.7L561.1 137.1L562.7 132.9L565.0 137.8L567.6 133.5L570.1 136.5L571.1 136.0h5.2M576.2 136.0L578.1 132.1L579.6 137.3L581.7 132.1L583.1 137.2L585.1 131.7L587.2 136.9L589.2 133.4L590.7 136.7L592.8 133.6L593.8 136.0h4.5M598.9 136.0L601.3 131.7L602.9 138.3L604.6 131.7L606.7 136.7L608.1 131.8L609.6 137.2L611.9 130.7L614.3 136.5L616.1 131.3L617.6 137.2L619.3 133.1L621.5 137.9L623.5 131.6L625.0 137.4L626.0 136.0h4.4M630.7 136.0L632.5 137.4L634.1 133.0L636.1 136.9L638.2 130.0L639.9 137.3L642.3 131.7L643.7 137.3L646.2 131.9L648.1 138.2L650.4 130.8L652.1 137.2L654.4 132.5L655.4 136.0h5.7M657.1 136.0L658.7 137.4L661.2 133.2L663.4 136.7L666.0 132.6L668.4 136.6L670.6 134.1L672.7 137.6L673.7 136.0h4.2M680.9 136.0L682.8 136.7L685.1 133.1L687.1 136.6L689.7 131.0L691.7 138.2L693.1 131.8L694.1 136.0h5.2M43.0 161.0L45.0 162.7L46.4 157.0L48.7 162.4L51.1 157.5L53.5 161.6L54.5 161.0h4.8M55.9 161.0L57.6 157.2L59.6 161.8L61.5 158.0L63.8 162.6L65.3 156.5L66.8 162.0L69.0 157.8L70.0 161.0h2.5M76.1 161.0L77.9 156.7L79.7 161.9L81.5 158.2L84.1 162.8L86.6 157.6L89.1 161.8L90.8 157.0L91.8 161.0M93.8 161.0L95.3 157.7L97.3 162.6L99.9 158.7L102.4 162.4L104.4 158.7L106.4 162.3L108.7 159.1L111.2 161.8L113.5 156.5L115.8 162.7L118.0 156.5L119.0 161.0h5.0M123.6 161.0L125.6 158.6L127.3 161.6L129.2 158.9L131.6 161.8L133.0 157.5L134.6 162.0L137.2 156.4L139.7 161.9L141.3 157.5L142.3 161.0M169.0 161.0L171.0 162.0L172.8 156.9L174.3 163.1L175.9 155.9L178.4 162.3L180.3 156.6L181.8 162.3L183.8 157.4L185.5 163.0L187.4 157.5L188.4 161.0M192.5 161.0L194.3 161.6L195.8 155.0L197.7 161.8L200.0 155.7L202.2 163.5L204.5 155.1L206.9 163.7L209.2 157.8L210.7 162.2L211.7 161.0M214.3 161.0L215.9 161.6L218.4 158.4L220.5 161.7L222.7 157.8L225.0 162.1L227.3 155.9L229.6 162.5L231.0 156.9L233.0 162.6L234.8 155.4L237.0 163.1L239.5 155.8L240.5 161.0M242.4 161.0L244.9 163.2L246.7 157.2L248.9 162.2L251.3 158.1L253.7 162.6L256.3 157.3L257.8 163.1L260.1 156.9L261.8 163.3L264.0 156.6L265.0 161.0h3.0M270.9 161.0L272.7 162.1L274.7 155.7L276.3 163.4L278.5 155.7L280.5 163.0L281.5 161.0M286.1 161.0L288.5 155.1L290.7 162.8L292.6 157.5L294.8 161.8L296.7 156.6L298.2 162.3L299.8 155.4L302.0 162.8L303.9 155.4L306.2 162.2L308.2 156.9L310.7 162.3L311.7 161.0M317.3 161.0L319.5 155.8L321.1 162.5L323.4 157.1L325.1 161.8L327.5 157.4L329.4 162.6L331.7 158.3L333.8 162.7L336.0 158.6L338.5 163.1L340.5 158.8L341.5 161.0h2.2M515.0 162.0L516.7 157.0L518.6 162.8L520.4 158.3L522.4 163.0L524.7 159.0L527.1 163.3L528.6 157.3L530.9 163.2L533.0 158.5L534.8 163.7L536.7 158.7L537.7 162.0M541.2 162.0L543.0 157.7L545.2 163.1L547.5 158.4L549.2 162.8L550.6 159.4L553.0 162.7L555.2 158.2L557.7 162.7L559.6 160.1L562.0 162.4L563.7 159.9L566.2 163.3L567.2 162.0M572.5 162.0L574.8 164.0L576.4 159.2L577.9 163.8L580.2 159.3L582.6 162.5L585.2 159.7L586.8 162.5L589.0 159.7L591.1 162.9L593.5 159.9L594.5 162.0h5.6M600.8 162.0L603.1 163.9L604.9 158.2L607.3 163.5L608.8 159.7L611.1 163.3L612.1 162.0M614.3 162.0L616.0 163.1L617.8 159.0L619.4 163.5L621.5 157.9L623.0 163.0L625.6 158.3L627.6 163.8L630.1 159.7L632.1 162.7L633.1 162.0M634.3 162.0L636.5 162.8L638.5 159.7L640.2 162.6L642.7 158.6L645.2 163.6L647.2 159.7L649.6 162.5L651.2 157.5L653.0 162.7L655.0 158.3L657.2 163.7L658.7 158.3L659.7 162.0h5.7M662.6 162.0L665.1 164.5L666.9 158.1L669.4 163.1L670.9 156.1L672.7 164.3L674.4 156.9L675.9 164.2L678.4 157.4L680.9 163.8L683.2 157.6L685.2 164.1L686.2 162.0h5.5M688.2 162.0L690.1 163.6L692.4 159.8L693.9 162.6L696.4 159.5L697.4 162.0M43.0 173.0L44.6 169.9L46.1 174.6L48.3 167.9L50.7 174.7L52.2 168.6L54.2 173.5L56.1 169.8L58.1 175.3L59.1 173.0h2.1M63.4 173.0L64.9 169.2L67.3 173.8L68.8 167.7L70.9 174.0L72.8 170.5L74.2 174.9L75.9 169.7L78.0 175.4L79.8 167.3L81.3 175.2L83.9 170.2L85.7 175.4L86.7 173.0M88.2 173.0L89.8 174.3L91.6 170.3L93.0 173.4L94.9 169.8L96.8 174.8L98.6 170.6L100.2 173.9L102.5 168.9L105.1 174.8L107.2 170.6L108.2 173.0M114.7 173.0L116.7 168.1L119.1 175.3L121.5 168.8L122.9 175.3L124.6 167.6L126.4 175.4L128.2 168.0L129.7 175.2L131.8 169.1L133.8 173.8L136.2 169.3L138.8 175.0L140.6 167.9L141.6 173.0h3.4M142.8 173.0L144.3 175.4L146.8 167.8L149.3 174.3L151.6 169.5L153.8 174.0L155.5 167.5L156.5 173.0M163.1 173.0L165.4 174.2L166.4 173.0h2.8M573.0 174.0L574.8 170.9L577.4 175.9L579.3 169.5L581.5 174.6L583.6 170.2L585.9 175.3L587.4 169.9L589.3 175.4L591.4 169.2L593.3 174.9L595.2 171.4L596.2 174.0M602.6 174.0L605.2 174.6L607.4 170.8L609.1 175.4L611.4 171.0L613.7 175.8L615.6 171.2L617.6 175.2L618.6 174.0M623.7 174.0L626.2 168.3L627.6 174.9L629.6 168.7L632.1 175.2L634.1 167.8L635.1 174.0M637.5 174.0L638.9 176.7L640.4 168.5L642.0 174.6L643.5 170.0L645.1 176.8L647.1 167.0L648.1 174.0M651.6 174.0L653.8 171.3L656.1 175.5L657.7 171.3L659.6 174.8L661.6 170.6L663.6 174.5L665.1 170.0L666.1 174.0h3.4M671.9 174.0L674.1 174.8L675.9 171.7L677.8 175.7L680.0 171.3L681.6 174.9L683.2 170.5L684.6 175.6L686.8 169.8L689.4 175.2L690.9 169.0L693.1 175.5L694.7 170.4L695.7 174.0h5.0M43.0 196.0L44.9 192.6L47.5 197.1L49.2 192.5L51.8 197.7L53.7 191.2L55.9 198.4L57.8 190.9L59.6 197.1L61.9 190.0L63.5 198.4L65.4 192.5L66.9 197.2L68.8 189.2L69.8 196.0M75.9 196.0L77.7 190.8L79.1 198.3L81.2 190.9L83.0 197.1L85.2 193.4L86.2 196.0h4.6M89.9 196.0L92.0 197.3L93.9 193.0L95.4 196.7L97.9 192.9L100.1 197.9L101.8 193.1L104.3 197.0L105.7 191.5L108.3 196.7L109.9 193.3L112.4 197.0L113.4 196.0h2.6M116.4 196.0L118.4 192.2L120.3 197.9L121.7 191.5L123.9 197.6L125.5 191.2L127.7 198.6L129.3 191.6L130.9 197.2L132.7 191.9L134.8 197.5L136.3 193.2L138.4 196.9L139.4 196.0h3.5M143.0 196.0L145.1 198.5L147.3 193.4L149.2 197.5L150.8 192.7L152.7 197.9L155.0 193.3L157.2 198.4L159.2 193.0L160.6 197.1L161.6 196.0M163.7 196.0L165.9 192.0L166.9 196.0h3.2M598.0 198.0L600.2 195.3L602.3 198.7L604.7 195.0L607.1 198.7L609.3 194.5L611.3 199.6L612.9 193.8L613.9 198.0h2.4M616.7 198.0L618.6 199.9L620.1 192.8L622.4 200.2L624.0 194.7L625.8 199.8L627.4 195.7L629.3 199.0L631.6 193.3L633.0 199.9L634.8 193.3L636.4 199.5L638.6 193.4L639.6 198.0h3.7M642.8 198.0L644.8 199.9L646.4 192.4L648.8 198.6L651.1 192.1L652.6 200.8L655.0 191.5L657.1 200.3L658.8 193.0L661.4 200.4L662.4 198.0h3.4M666.2 198.0L667.8 193.5L669.4 200.3L671.5 193.8L674.1 200.1L676.5 193.9L677.5 198.0h3.0M683.5 198.0L685.6 194.2L687.8 198.9L689.9 195.6L692.3 199.6L694.4 194.2L696.0 198.7L697.0 198.0h2.1M63.0 208.0L65.0 209.3L66.9 202.0L68.6 210.2L70.4 202.1L71.9 208.9L74.1 204.7L75.6 210.2L76.6 208.0M81.5 208.0L84.0 202.2L86.3 208.8L88.4 203.3L90.6 210.0L93.2 202.3L95.5 209.2L96.9 205.0L99.2 209.9L101.8 201.6L103.4 210.0L105.0 203.0L106.5 210.1L107.5 208.0h5.1M113.3 208.0L115.3 209.1L117.0 204.4L118.6 210.0L120.2 202.5L122.6 210.0L124.5 205.0L126.2 208.7L128.5 204.7L130.3 210.1L131.3 208.0M135.5 208.0L137.8 204.2L139.6 209.2L141.6 205.5L144.0 209.0L145.8 205.0L146.8 208.0h2.4M150.6 208.0L153.1 208.6L155.6 201.3L157.5 209.3L159.5 201.4L162.1 210.7L164.5 201.6L165.5 208.0M43.0 223.0L45.5 219.8L48.0 225.2L50.2 219.3L51.7 224.9L53.4 217.7L55.6 224.1L57.7 216.8L58.7 223.0h4.2M66.2 223.0L68.0 225.8L70.2 217.1L72.4 224.7L74.7 217.9L77.0 225.2L79.1 217.7L80.7 225.1L82.6 216.1L84.6 225.7L86.6 218.9L88.8 225.9L91.4 219.0L93.8 225.7L94.8 223.0M102.0 223.0L104.5 225.4L106.5 216.0L108.0 225.0L109.6 216.5L111.1 225.7L113.7 219.6L114.7 223.0M627.0 226.0L628.7 227.0L631.1 222.8L632.6 227.9L634.1 222.3L636.4 227.9L637.4 226.0h5.7M643.2 226.0L645.6 227.9L647.4 223.2L649.4 227.7L651.7 223.1L654.1 226.4L656.5 221.5L659.1 227.6L660.1 226.0h4.1M668.1 226.0L669.6 228.6L671.9 219.1L674.4 228.0L676.5 222.6L678.3 228.6L679.7 221.0L681.3 226.7L682.8 222.0L684.8 228.8L686.4 222.2L688.6 227.1L689.6 226.0h4.1M65.0 244.0L67.5 245.2L69.6 240.3L71.4 245.5L72.9 241.9L74.8 245.6L76.3 241.1L78.1 244.6L80.6 240.5L81.6 244.0h3.8M89.0 244.0L91.3 240.9L93.1 245.8L94.9 240.9L96.5 245.6L99.0 241.9L101.5 245.9L103.5 241.0L105.7 244.5L108.2 241.1L109.7 245.4L112.2 241.6L113.2 244.0M65.0 256.0L66.8 258.5L68.3 249.7L70.4 257.5L72.5 251.5L74.0 258.3L76.4 251.4L78.9 257.2L80.6 251.1L83.0 258.6L84.0 256.0h3.7M86.1 256.0L87.9 252.1L89.4 257.1L91.0 252.4L93.6 257.7L95.6 252.2L97.9 257.4L99.7 252.3L101.7 256.5L103.3 251.7L105.5 257.4L107.9 253.5L110.1 257.1L112.0 252.5L113.0 256.0M480.0 335.0L482.5 330.4L484.6 336.2L486.0 330.8L488.3 335.8L490.4 331.7L491.4 335.0M496.0 335.0L497.9 337.3L500.1 329.6L501.9 337.3L504.0 330.6L506.5 337.5L509.0 330.3L511.4 337.0L512.4 335.0h4.0M516.3 335.0L518.7 332.4L520.4 336.0L523.0 331.2L524.6 336.0L526.9 330.4L529.0 336.7L531.0 331.6L533.3 336.5L535.6 332.0L537.2 336.3L539.0 332.8L540.5 336.2L541.5 335.0h3.3M543.1 335.0L544.7 337.1L547.2 330.8L549.1 336.4L550.6 330.2L553.2 336.9L555.1 331.7L557.2 336.2L559.6 330.6L562.1 336.6L563.7 331.1L565.2 336.7L566.8 330.3L569.0 336.7L570.0 335.0M577.0 335.0L579.2 336.0L581.0 331.5L583.5 335.8L585.2 330.9L587.6 337.6L588.6 335.0h2.1M595.2 335.0L597.4 330.0L599.9 336.5L602.4 329.6L604.4 336.3L606.0 331.9L607.8 336.5L610.3 332.1L612.3 335.9L614.2 330.7L616.0 337.1L618.6 330.5L619.6 335.0h3.0M624.8 335.0L626.9 328.9L628.8 335.7L631.2 330.3L633.8 336.2L635.5 331.9L636.5 335.0h2.3M643.3 335.0L644.8 329.6L646.5 337.7L648.8 330.1L650.4 337.0L652.0 329.3L654.0 337.3L656.3 330.9L657.3 335.0M659.6 335.0L662.0 336.1L663.4 332.8L665.7 335.6L667.4 332.5L669.8 336.8L671.4 331.0L672.4 335.0h5.0M679.0 335.0L681.2 330.5L683.2 337.0L685.4 331.0L687.2 336.6L689.4 329.0L691.6 336.8L693.5 328.5L694.5 335.0M475.0 351.0L477.0 347.4L479.0 352.2L481.2 347.6L482.8 352.7L484.8 347.3L485.8 351.0M493.3 351.0L495.9 346.2L498.0 352.4L499.7 347.1L501.6 351.5L503.2 348.5L504.2 351.0M508.9 351.0L510.8 353.0L513.1 348.6L515.0 353.2L516.4 348.7L518.7 353.1L520.5 348.3L522.0 353.0L524.1 348.5L525.9 352.8L527.5 347.8L529.1 351.9L530.8 346.2L531.8 351.0M533.6 351.0L535.2 345.9L537.0 351.6L538.8 345.8L540.7 352.3L542.4 346.0L544.8 352.5L546.4 346.5L548.5 353.1L550.7 345.9L552.6 352.5L555.2 345.5L557.2 351.9L558.2 351.0h2.8M559.8 351.0L561.7 348.5L563.2 352.5L565.4 348.8L567.3 351.8L569.5 347.9L571.5 352.9L573.1 346.7L574.6 352.0L576.0 347.8L578.2 352.4L579.9 347.9L581.6 352.0L583.7 347.7L584.7 351.0h3.9M592.6 351.0L594.8 352.1L596.2 348.5L598.1 352.3L600.3 348.0L602.8 352.7L604.8 346.6L606.8 352.6L608.2 347.3L610.5 351.9L611.5 351.0h3.7M619.5 351.0L621.9 347.0L623.6 353.1L625.6 348.4L627.9 352.5L629.4 347.6L631.9 352.3L633.4 348.7L634.9 352.0L637.2 347.2L639.7 351.6L641.7 348.8L642.7 351.0h3.6M646.9 351.0L648.8 347.6L651.3 352.0L653.7 348.1L655.5 353.0L657.5 348.1L659.3 353.7L661.7 346.1L663.3 351.8L665.0 345.0L667.3 351.8L668.9 345.0L671.1 352.4L672.1 351.0M674.7 351.0L676.3 351.7L678.6 346.4L680.9 351.6L682.5 348.3L684.7 351.7L686.4 347.3L687.9 352.2L688.9 351.0M472.0 362.0L474.3 363.9L476.5 359.3L478.3 364.3L479.8 357.1L482.4 363.8L484.1 357.9L486.2 363.7L487.2 362.0h5.2M494.7 362.0L496.4 357.4L498.5 363.3L501.1 357.1L502.9 364.8L504.7 356.4L506.5 363.2L508.4 356.4L509.4 362.0M517.0 362.0L519.5 363.3L521.2 357.2L523.1 363.0L525.6 357.0L527.6 364.0L530.2 358.1L531.9 362.7L533.9 358.4L536.2 362.6L538.7 357.0L540.3 363.3L541.3 362.0h5.0M543.2 362.0L545.1 356.6L547.2 364.4L548.8 358.2L550.7 364.0L552.7 357.6L555.2 363.0L556.7 357.3L558.7 363.7L559.7 362.0M563.9 362.0L565.8 358.5L567.6 362.8L569.8 358.5L571.2 363.0L573.0 358.5L575.6 362.8L577.5 357.3L579.9 363.5L580.9 362.0M587.0 362.0L588.7 364.0L591.1 358.2L593.1 364.2L594.6 358.4L596.7 363.2L599.1 358.6L601.1 363.4L602.7 356.1L604.5 362.7L606.3 356.4L608.5 362.9L609.5 362.0h2.9M612.6 362.0L614.7 359.8L616.7 363.1L618.3 359.6L620.8 362.5L623.2 358.8L625.4 363.4L627.8 359.4L629.3 362.7L631.3 358.9L633.3 362.6L635.3 359.5L636.3 362.0h4.8M640.3 362.0L642.2 363.3L643.7 359.4L645.5 363.9L648.1 358.3L650.0 362.9L651.5 357.1L653.7 363.0L654.7 362.0h5.7M657.0 362.0L659.1 358.5L660.5 363.7L662.4 359.1L664.6 362.9L666.8 358.7L668.9 364.5L670.3 357.1L671.3 362.0h3.8M672.5 362.0L674.1 363.2L676.2 359.6L678.7 363.1L680.3 357.0L682.3 362.7L683.3 362.0h4.9M688.1 362.0L689.8 363.6L691.4 358.9L692.9 363.6L695.1 357.1L696.1 362.0h5.0M54.0 359.5L55.5 360.9L57.9 355.9L59.4 361.0L61.2 353.9L63.1 361.5L65.4 356.5L67.6 360.9L69.5 354.4L71.4 360.2L72.4 359.5M78.0 359.5L80.2 360.0L82.5 355.1L84.3 361.1L86.6 356.4L89.1 360.3L90.9 355.6L92.8 360.0L94.9 356.1L96.7 360.3L98.5 355.6L100.6 360.0L103.1 356.6L104.1 359.5M113.0 359.5L115.1 360.8L117.5 355.3L119.4 361.2L121.6 356.4L123.4 360.6L125.5 353.6L127.9 360.8L128.9 359.5h3.0M135.2 359.5L137.5 355.4L139.8 361.5L141.9 353.1L143.8 361.3L145.9 355.4L148.4 361.1L150.3 356.6L151.3 359.5h5.6M152.4 359.5L154.7 356.9L157.0 360.2L158.8 356.1L160.8 361.4L163.0 355.4L164.5 361.6L166.4 354.0L167.8 361.8L170.0 355.5L171.0 359.5M48.0 383.0L49.6 384.3L52.1 378.4L54.1 384.6L55.9 378.4L57.7 383.8L59.5 379.4L61.3 383.7L62.3 383.0M63.8 383.0L65.9 379.0L67.6 383.5L69.7 377.5L71.7 384.8L73.5 378.0L75.3 384.9L77.1 380.2L79.3 385.4L81.2 377.4L82.2 383.0M89.2 383.0L91.6 383.9L93.5 379.8L95.3 383.5L97.3 378.7L99.2 383.8L100.7 376.9L102.7 383.7L104.3 377.8L105.8 384.9L107.6 377.2L108.6 383.0h5.5M111.9 383.0L114.3 384.0L116.8 379.4L118.8 384.3L120.4 376.9L122.3 385.2L124.1 379.0L126.0 383.9L127.5 378.8L129.3 384.6L130.8 380.2L132.6 384.1L134.1 378.4L136.4 384.6L139.0 378.3L140.0 383.0h3.9M145.6 383.0L147.8 383.6L149.3 381.0L151.4 383.5L153.9 380.4L155.9 383.8L157.3 378.5L159.1 384.3L161.5 379.0L163.1 384.0L165.6 380.1L166.6 383.0M70.0 393.5L72.4 394.5L74.2 389.0L75.9 394.8L78.2 390.5L80.0 394.9L82.1 390.8L83.7 394.4L85.5 388.7L87.4 395.0L89.0 388.9L91.4 395.0L93.8 389.4L94.8 393.5M97.8 393.5L100.1 394.8L101.8 391.0L103.5 395.1L105.5 391.1L107.5 394.6L108.5 393.5M115.5 393.5L117.3 388.0L119.7 394.6L122.2 389.5L124.4 396.2L126.0 390.1L128.4 395.4L129.9 386.7L132.2 395.8L134.5 390.4L136.1 394.2L138.1 390.6L139.1 393.5h5.8M141.1 393.5L143.2 395.2L145.0 389.6L147.2 395.0L149.0 390.2L150.7 394.7L152.1 390.5L153.8 394.2L155.3 390.1L157.3 394.4L159.2 388.7L161.7 394.6L163.1 390.8L165.0 394.3L166.0 393.5h4.6M172.9 393.5L175.1 394.3L176.8 388.7L178.9 394.7L180.5 390.0L182.7 394.5L184.9 387.8L186.3 394.2L188.6 388.5L190.1 394.6L192.6 390.4L194.4 395.8L196.4 388.1L197.4 393.5M255.0 395.0L256.5 396.2L259.0 390.3L261.5 397.7L263.1 389.3L264.6 397.0L266.4 390.3L268.2 395.9L270.3 389.0L272.3 396.7L273.3 395.0h5.9M275.2 395.0L277.2 391.4L278.6 395.7L280.7 392.4L283.1 395.6L284.6 390.3L286.8 396.8L288.9 391.9L291.0 396.3L292.7 392.5L295.2 395.8L296.7 391.8L298.4 396.2L300.0 391.7L301.0 395.0h2.9M308.2 395.0L310.3 397.2L312.7 388.4L315.0 396.4L316.7 390.3L319.0 397.2L320.8 390.3L321.8 395.0M328.4 395.0L330.1 391.5L332.1 396.2L334.7 390.2L336.3 396.7L338.3 392.6L340.1 396.3L341.9 390.5L344.3 395.8L345.7 392.0L347.8 397.0L348.8 395.0M352.1 395.0L354.7 392.5L356.2 396.1L357.2 395.0M480.0 385.0L482.1 379.0L484.0 386.0L485.6 381.8L487.1 386.5L488.6 378.8L491.1 387.1L492.1 385.0M497.6 385.0L500.0 386.7L502.1 381.2L503.8 385.8L505.5 380.7L507.7 385.9L509.6 380.7L511.8 386.3L513.6 379.9L515.3 386.7L517.2 382.0L519.2 387.3L520.8 380.9L522.8 385.9L523.8 385.0h4.5M527.1 385.0L528.9 379.5L531.0 386.5L532.9 380.4L535.1 386.8L537.3 378.2L539.3 387.0L541.2 380.3L542.6 386.5L544.7 381.8L546.9 386.8L547.9 385.0M552.2 385.0L553.9 387.3L556.4 379.8L558.3 386.7L560.0 381.8L561.8 385.7L563.6 380.2L565.1 386.9L567.2 380.9L569.0 386.5L571.5 380.6L572.5 385.0h2.3M579.1 385.0L581.1 382.5L582.9 385.8L585.2 380.5L587.3 385.7L588.9 382.6L590.9 386.7L592.7 381.8L595.3 386.0L597.0 380.9L598.5 387.0L599.5 385.0M607.2 385.0L609.3 385.8L611.6 382.6L613.7 385.7L615.9 380.0L617.4 385.6L619.2 381.6L621.3 387.1L622.9 382.3L625.5 386.7L626.5 385.0M630.6 385.0L633.1 381.1L635.4 386.0L637.9 382.0L639.7 386.7L641.9 380.9L643.7 386.6L645.8 379.5L648.1 386.3L649.1 385.0M653.6 385.0L655.3 380.6L657.4 385.8L659.2 380.7L660.9 385.7L662.8 380.5L665.4 386.7L667.8 381.9L669.5 386.2L670.9 380.4L672.6 385.6L674.7 382.7L675.7 385.0M679.7 385.0L682.2 386.4L684.1 382.3L686.0 386.8L687.5 379.6L689.2 386.7L691.7 382.4L693.3 387.1L695.9 382.5L696.9 385.0M355.0 393.0L356.9 393.9L359.4 387.0L361.2 394.9L363.3 387.9L364.9 394.0L367.2 390.3L368.7 395.4L370.2 389.2L371.2 393.0M373.1 393.0L374.8 394.5L377.4 390.0L379.3 394.7L381.5 388.0L383.7 393.9L385.8 387.4L388.1 393.6L390.3 388.6L392.0 394.1L393.8 390.0L395.4 394.3L397.0 389.1L399.2 394.2L400.2 393.0h3.7M402.9 393.0L404.8 394.5L406.9 390.3L408.5 394.0L410.2 389.4L412.5 393.8L414.6 390.1L416.2 394.6L417.2 393.0M419.0 393.0L421.1 394.7L422.8 390.5L424.6 395.3L426.8 387.1L428.3 395.1L429.3 393.0M437.1 393.0L438.9 394.9L441.4 386.3L443.4 394.3L445.4 389.2L447.4 395.6L448.9 387.0L450.9 395.1L453.2 387.8L455.6 394.2L457.8 389.8L460.1 394.7L462.0 389.1L463.0 393.0h3.0M467.0 393.0L468.7 395.1L471.3 388.1L473.2 394.5L475.4 388.6L477.2 394.0L479.2 388.5L481.3 393.9L483.3 389.2L485.1 394.7L486.7 390.3L488.6 394.3L490.8 388.1L492.8 393.7L493.8 393.0M497.0 393.0L499.5 389.7L501.2 393.8L503.7 389.6L505.2 393.7L507.0 387.8L508.5 394.9L510.9 389.3L513.2 394.6L514.2 393.0M520.9 393.0L522.7 386.2L524.5 393.9L526.9 389.3L528.5 394.8L530.7 389.2L531.7 393.0M539.4 393.0L541.9 393.5L544.0 388.4L546.0 395.1L548.3 386.7L549.9 393.9L552.0 390.2L553.4 394.2L556.0 386.8L557.4 395.2L558.4 393.0h5.6M560.0 393.0L562.6 393.7L564.4 390.5L565.9 394.3L567.9 390.0L570.3 393.5L572.1 389.6L574.0 394.0L576.2 389.7L577.7 394.0L580.2 389.7L581.2 393.0M584.1 393.0L586.1 393.7L588.4 388.5L589.8 394.9L591.9 388.8L593.6 394.8L594.6 393.0h5.0M599.0 393.0L600.6 388.5L602.6 393.9L604.2 387.5L606.0 393.8L607.5 386.3L609.9 395.4L612.2 388.7L613.9 394.4L615.8 389.8L618.0 395.7L619.0 393.0h3.6M624.9 393.0L627.4 389.4L629.3 394.0L631.8 386.8L634.3 394.7L636.6 389.4L638.7 394.1L641.1 387.8L643.2 394.5L645.4 390.2L647.9 393.6L648.9 393.0h5.6M652.8 393.0L654.4 387.7L656.0 394.2L657.8 387.3L659.4 394.8L661.2 386.5L663.3 394.9L665.4 389.0L667.1 395.3L668.5 387.7L671.0 395.9L673.3 387.1L675.1 394.7L677.0 388.4L678.0 393.0M682.0 393.0L683.4 386.3L685.5 394.3L688.1 386.5L689.5 395.2L691.4 388.2L693.9 395.1L695.5 386.7L696.5 393.0M255.0 393.0L256.6 395.4L258.6 390.0L261.0 393.6L263.3 389.9L264.8 393.8L265.8 393.0M271.0 393.0L273.5 394.7L275.6 388.2L278.0 393.7L280.5 387.6L282.8 394.7L283.8 393.0M289.5 393.0L290.9 389.0L293.0 394.8L295.4 390.4L296.9 393.6L299.2 390.6L301.8 393.9L303.9 388.3L304.9 393.0M308.2 393.0L310.2 395.5L312.2 389.5L314.5 394.7L316.3 387.4L317.7 394.4L319.4 387.7L321.6 394.5L323.7 389.3L326.0 394.7L327.5 390.4L328.5 393.0h5.0M330.0 393.0L331.8 388.6L333.5 394.8L335.1 389.6L336.9 393.4L338.7 390.0L340.9 394.4L342.5 388.6L343.5 393.0M348.2 393.0L350.0 394.1L351.7 388.8L353.7 394.2L355.5 389.6L356.5 393.0M585.0 149.0L587.5 144.3L589.8 150.2L591.5 145.4L594.1 149.8L596.3 146.3L598.3 149.7L600.9 144.1L602.3 151.0L603.3 149.0M608.0 149.0L610.5 146.6L612.6 149.7L614.9 146.8L617.5 149.6L619.0 147.1L621.4 149.7L622.8 146.3L625.3 150.4L627.8 145.9L629.4 150.7L631.1 146.7L632.1 149.0M638.2 149.0L640.0 145.6L641.9 149.5L643.3 145.0L644.9 149.6L646.7 146.4L648.4 150.7L650.6 146.5L652.4 149.7L653.4 149.0M656.3 149.0L658.7 144.4L661.2 150.8L663.3 144.3L664.7 150.8L666.9 145.4L668.5 149.6L671.0 144.4L673.0 149.7L675.4 145.4L677.4 149.4L679.6 147.0L681.0 150.2L682.0 149.0h5.0M685.8 149.0L687.9 150.7L690.0 145.4L691.5 150.4L693.6 144.8L695.1 149.9L696.1 149.0h4.6M605.0 187.0L607.6 184.6L609.3 188.8L611.7 184.4L613.4 187.9L615.3 183.1L617.7 189.1L620.0 183.8L621.6 188.2L623.8 183.5L626.3 189.1L628.3 183.0L630.9 188.6L631.9 187.0h5.2M634.9 187.0L637.2 188.4L638.8 183.0L640.3 188.3L642.2 182.6L644.7 188.8L647.1 184.1L649.1 188.7L650.6 184.5L652.6 188.4L653.6 187.0h5.5M660.4 187.0L662.5 187.5L664.3 182.7L666.7 187.6L669.2 183.2L671.5 187.8L673.4 183.7L675.7 187.9L678.2 184.2L680.8 188.6L682.8 181.8L685.3 188.4L686.3 187.0M689.0 187.0L690.6 183.1L692.5 187.9L694.3 183.6L696.3 187.9L697.3 187.0h3.2M595.0 319.0L597.1 320.9L599.1 314.9L600.7 320.7L602.6 314.7L605.2 319.9L606.7 314.4L609.0 321.0L611.1 315.2L612.9 320.1L614.5 314.8L616.7 320.1L617.7 319.0h4.4M620.5 319.0L622.1 316.1L624.4 319.5L626.8 313.6L628.5 319.6L630.4 313.6L632.6 320.0L634.8 315.4L635.8 319.0h4.1M641.1 319.0L643.0 321.2L645.1 315.5L647.4 321.5L649.8 314.8L651.4 320.5L653.5 313.6L654.5 319.0M659.3 319.0L661.6 315.5L663.3 320.3L665.1 315.2L667.4 320.4L669.3 314.4L671.5 321.1L672.5 319.0h3.0M678.5 319.0L680.3 320.3L682.0 315.4L684.0 320.1L686.3 313.4L688.1 321.4L689.7 315.0L691.6 319.7L693.5 313.1L695.3 321.1L696.3 319.0M45.0 279.0L47.6 279.4L49.5 275.1L51.8 279.9L53.4 276.8L56.0 281.0L57.9 275.1L60.5 280.9L63.1 276.7L65.4 281.1L66.4 279.0M47.0 309.0L49.5 309.6L51.3 305.9L53.1 311.0L54.8 304.5L57.0 309.5L59.6 304.9L61.9 310.0L64.4 305.5L66.6 310.8L67.6 309.0" stroke="#747474" stroke-width="1.3" fill="none" stroke-linejoin="round" opacity="0.8"/>
<path d="M59.6 133.4v3.7M68.3 133.0v4.3M72.4 130.8v7.5M75.7 131.3v6.6M111.7 130.7v7.6M133.7 133.5v3.5M197.5 129.9v8.7M213.0 130.3v8.1M220.6 130.3v8.1M223.6 131.6v6.3M229.8 130.9v7.3M235.4 133.2v4.0M240.1 131.5v6.5M249.4 131.0v7.1M279.8 130.9v7.2M282.1 131.4v6.6M287.7 130.4v8.1M317.2 131.2v6.9M323.3 132.6v4.9M334.6 133.1v4.2M351.1 131.8v6.0M367.0 133.5v3.6M374.6 132.9v4.4M378.8 133.1v4.2M386.5 132.8v4.5M398.2 130.8v7.4M404.8 130.8v7.5M424.6 132.2v5.4M433.0 131.5v6.5M441.9 130.3v8.1M455.0 131.5v6.4M468.7 133.2v4.0M483.9 133.1v4.2M487.8 130.5v7.9M507.2 132.8v4.5M522.5 131.1v7.1M538.7 131.2v6.8M562.3 131.8v6.0M572.1 130.3v8.1M578.8 130.8v7.5M585.1 132.0v5.8M599.3 132.4v5.2M605.4 130.2v8.3M612.9 132.4v5.1M648.8 132.4v5.2M656.0 130.3v8.2M663.3 132.2v5.4M665.3 132.2v5.4M669.6 133.0v4.3M680.8 130.1v8.5M691.2 132.5v5.0M700.2 132.0v5.8M55.6 155.7v7.5M68.6 156.4v6.6M74.7 155.6v7.7M81.1 158.0v4.3M96.9 156.6v6.3M124.2 157.1v5.5M131.1 155.8v7.4M137.2 158.4v3.7M145.3 155.8v7.4M172.4 156.5v6.4M187.7 157.9v4.4M218.3 157.5v5.0M223.3 158.2v4.0M229.8 157.2v5.5M235.5 157.8v4.5M243.9 156.1v7.0M251.2 158.4v3.7M253.7 157.3v5.3M259.9 157.4v5.1M264.6 156.8v6.0M273.9 155.0v8.6M277.9 158.8v3.1M283.0 158.0v4.3M317.3 156.6v6.2M325.1 154.9v8.7M333.8 156.4v6.6M342.5 158.5v3.6M348.1 157.7v4.7M527.5 156.0v8.6M533.2 157.9v5.9M536.0 156.2v8.2M542.2 158.1v5.6M559.9 156.8v7.4M573.8 159.2v4.0M581.2 159.8v3.1M587.6 159.6v3.5M589.8 155.7v9.0M598.2 156.3v8.2M609.1 159.8v3.1M622.8 158.0v5.7M624.8 157.0v7.2M632.6 159.7v3.3M651.8 156.8v7.5M672.1 156.9v7.3M676.7 157.8v6.1M685.6 156.7v7.6M699.6 156.7v7.6M51.8 168.4v6.6M62.8 168.6v6.3M70.2 167.2v8.3M77.7 169.9v4.5M87.7 168.4v6.6M91.5 170.0v4.3M126.2 167.3v8.2M155.8 168.4v6.6M164.2 166.9v8.7M579.4 170.3v5.2M586.4 169.0v7.1M595.8 167.8v8.9M601.6 169.8v6.0M605.4 169.8v6.0M609.2 168.1v8.5M616.4 170.5v5.0M625.5 169.8v5.9M633.4 168.8v7.4M638.4 168.7v7.6M641.8 171.8v3.1M645.8 168.9v7.3M649.1 168.7v7.5M661.4 168.3v8.2M678.3 169.1v7.0M685.1 171.7v3.3M50.6 191.1v7.0M55.9 190.5v7.9M81.2 193.4v3.7M86.5 190.8v7.4M91.7 190.2v8.2M102.2 191.2v6.8M108.3 190.3v8.2M115.1 193.1v4.2M118.9 189.8v8.9M136.0 193.2v3.9M141.2 189.7v8.9M611.6 191.8v8.8M616.0 192.2v8.3M621.7 191.9v8.7M630.5 192.5v7.8M646.0 194.4v5.2M663.5 193.8v6.1M669.0 192.7v7.6M686.2 194.6v4.9M694.2 192.3v8.1M75.6 205.0v4.3M82.4 205.7v3.2M96.2 202.9v7.2M109.8 204.1v5.6M118.5 202.0v8.6M125.6 204.9v4.5M134.0 203.6v6.3M138.3 202.3v8.1M147.2 202.5v7.8M164.1 202.3v8.2M47.4 219.2v5.5M55.0 218.1v7.1M68.2 217.3v8.1M75.4 216.9v8.7M78.7 220.6v3.5M81.6 218.3v6.8M94.1 218.9v5.9M102.0 220.8v3.1M107.4 217.5v7.9M123.2 217.5v7.9M630.9 223.7v3.3M642.7 221.8v5.9M647.0 223.2v4.0M652.6 220.1v8.4M658.4 222.4v5.1M667.2 222.9v4.5M675.6 223.2v4.1M686.1 221.6v6.3M693.1 222.2v5.5M700.8 219.9v8.7M85.5 237.8v8.8M91.1 238.9v7.3M95.7 239.8v5.9M103.5 241.3v3.9M108.1 238.2v8.3M111.9 239.7v6.2M70.2 249.8v8.8M76.1 251.9v5.8M83.9 252.8v4.6M92.3 252.1v5.6M103.0 252.5v5.0M491.9 331.6v4.9M497.2 331.8v4.6M506.3 332.7v3.3M514.2 331.7v4.7M523.2 329.9v7.3M527.1 331.2v5.4M537.2 330.9v5.9M548.0 331.8v4.6M565.6 331.6v4.8M570.9 329.0v8.6M577.0 332.0v4.3M585.0 331.0v5.7M595.2 330.4v6.5M600.0 330.3v6.7M607.3 331.0v5.7M613.9 330.3v6.8M619.3 329.8v7.4M626.8 329.4v7.9M647.0 332.7v3.3M665.6 331.4v5.2M672.7 329.7v7.5M685.7 330.0v7.1M489.5 348.6v3.5M497.3 344.9v8.7M502.8 345.9v7.3M512.2 344.7v9.0M515.2 345.7v7.6M529.1 344.8v8.8M549.3 346.5v6.5M554.8 346.0v7.2M560.0 344.8v8.9M569.3 348.6v3.4M580.4 348.6v3.4M587.8 348.1v4.1M593.3 346.5v6.4M610.4 347.2v5.4M642.6 345.5v7.9M649.5 346.2v6.8M673.0 348.5v3.6M678.3 345.4v8.0M685.7 346.1v7.0M691.8 346.2v6.9M695.9 346.3v6.7M478.9 356.1v8.4M481.3 356.8v7.4M485.6 358.1v5.6M494.6 356.9v7.3M498.5 356.5v7.9M515.5 358.4v5.2M522.9 358.9v4.4M533.3 357.1v7.1M541.7 359.6v3.4M554.5 359.7v3.3M564.0 358.8v4.6M578.7 358.1v5.6M586.2 357.0v7.2M590.1 356.6v7.7M595.4 358.7v4.8M598.7 358.8v4.6M611.3 358.6v4.8M647.8 356.1v8.4M655.2 358.8v4.5M670.3 358.4v5.2M677.0 356.4v8.0M680.1 357.9v5.9M683.3 359.3v3.8M56.8 357.3v3.2M58.8 356.4v4.4M67.7 356.6v4.1M75.2 356.1v4.9M92.8 354.1v7.8M99.6 355.7v5.4M125.1 354.3v7.4M147.6 353.3v8.9M161.1 354.2v7.5M174.9 355.7v5.4M61.1 380.1v4.1M67.0 379.3v5.2M84.2 377.6v7.7M95.2 380.7v3.3M100.2 376.7v9.0M113.4 378.9v5.9M121.6 377.3v8.2M143.3 377.7v7.6M168.6 379.3v5.3M79.0 387.7v8.2M99.8 390.6v4.1M115.8 387.4v8.7M118.2 390.7v4.0M135.3 388.7v6.8M148.2 390.8v3.9M151.0 388.7v6.9M160.3 387.3v8.8M174.5 389.7v5.4M189.3 391.1v3.4M195.6 391.1v3.4M263.4 391.9v4.4M265.8 390.1v6.9M283.2 390.7v6.2M286.7 392.4v3.7M294.2 390.9v5.8M302.0 391.2v5.5M334.0 389.6v7.7M354.9 390.8v6.0M488.9 382.4v3.8M499.9 379.9v7.3M510.8 382.1v4.1M518.0 379.0v8.6M523.5 382.6v3.5M531.4 381.1v5.6M535.3 380.1v7.0M545.4 381.0v5.8M554.3 382.8v3.1M574.9 382.2v4.0M578.5 382.6v3.4M581.3 381.4v5.2M594.7 380.4v6.6M601.7 380.7v6.2M630.0 381.8v4.6M638.7 381.0v5.7M643.5 382.3v3.8M660.7 380.1v7.0M666.3 381.1v5.5M674.0 379.0v8.6M677.3 382.2v3.9M691.7 381.9v4.4M381.0 387.0v8.5M396.2 390.1v4.1M412.2 390.5v3.6M421.7 389.4v5.1M432.9 388.9v5.9M436.8 389.1v5.6M440.6 390.4v3.8M442.9 388.2v6.8M445.0 389.6v4.9M453.0 388.9v5.8M465.4 387.2v8.3M490.3 389.3v5.4M503.4 388.9v5.9M509.1 388.5v6.4M514.5 387.5v7.8M519.1 389.7v4.7M530.6 387.8v7.5M532.7 387.4v8.0M541.4 386.9v8.6M548.1 389.2v5.4M556.6 388.4v6.6M564.0 390.6v3.4M567.3 387.1v8.5M573.0 389.6v4.8M593.5 389.3v5.2M602.0 389.5v4.9M607.8 388.5v6.5M610.2 388.7v6.2M613.3 390.7v3.3M615.8 386.9v8.7M622.5 388.1v7.0M642.8 390.7v3.3M646.4 388.0v7.1M653.7 389.5v5.0M663.9 387.6v7.7M670.6 389.5v5.0M676.7 387.6v7.7M692.9 390.1v4.1M259.1 389.6v4.9M276.0 390.4v3.8M281.2 390.2v4.1M284.6 389.9v4.4M300.6 390.6v3.4M323.0 388.0v7.2M335.9 387.1v8.4M347.3 387.5v7.8M356.2 390.1v4.1M590.3 145.6v4.8M597.3 146.0v4.4M608.7 145.1v5.6M614.6 145.8v4.5M623.1 143.4v7.9M628.2 143.8v7.5M633.0 145.7v4.7M647.1 146.6v3.4M654.2 143.2v8.4M664.2 142.9v8.8M666.9 143.8v7.4M669.2 143.0v8.6M680.6 144.3v6.7M690.2 145.6v4.9M608.5 184.1v4.2M615.7 181.2v8.3M620.0 183.3v5.2M626.9 184.5v3.5M629.1 180.8v8.8M634.1 180.8v8.9M659.6 183.6v4.9M661.7 183.2v5.4M670.5 183.2v5.4M681.1 183.5v4.9M685.5 181.8v7.4M691.5 184.4v3.6M608.2 312.8v8.9M625.7 314.7v6.1M631.9 315.7v4.7M634.2 316.0v4.2M672.5 313.2v8.4M675.4 315.7v4.8M55.8 273.9v7.4M63.5 305.1v5.5" stroke="#787878" stroke-width="1.2" fill="none" opacity="0.65"/>
<path d="M61.0 135.0V229.0M98.5 135.0V239.0M191.0 135.0V199.0M44.5 199.0V399.0M66.0 339.0V399.0M99.0 339.0V399.0M567.0 135.0V179.0M597.0 135.0V229.0M683.0 135.0V249.0M692.0 139.0V359.0M477.0 396.0V401.0M525.0 339.0V399.0M155.0 339.0V399.0" stroke="#7c7c7c" stroke-width="1.2" fill="none" opacity="0.7"/>
<path d="M115.0 400.6L699.0 400.6" stroke="#868686" stroke-width="3.2" fill="none" stroke-linejoin="round"/>
<path d="M44.0 132.8L195.0 129.8L455.0 128.8L695.0 131.6" stroke="#868686" stroke-width="3.2" fill="none" stroke-linejoin="round"/>
<path d="M43.0 132.0L39.6 232.0" stroke="#868686" stroke-width="3.2" fill="none" stroke-linejoin="round"/>
<path d="M695.6 132.0L700.8 155.0L701.0 365.0" stroke="#868686" stroke-width="3.2" fill="none" stroke-linejoin="round"/>
<path d="M698.4 366.0L698.4 401.0" stroke="#868686" stroke-width="3.2" fill="none" stroke-linejoin="round"/>
<path d="M567.5 179.0L567.5 221.0L624.5 221.0L624.5 249.0L681.5 249.0L681.5 305.0L592.0 305.0L592.0 340.0L561.0 340.0L561.0 329.0L535.0 329.0L535.0 341.0L498.0 341.0" stroke="#848484" stroke-width="2.4" fill="none" stroke-linejoin="miter" filter="url(#jag)"/>
<path d="M477.0 331.0L477.0 396.0" stroke="#848484" stroke-width="2.4" fill="none" stroke-linejoin="miter" filter="url(#jag)"/>
<path d="M337.0 358.0L392.0 358.0" stroke="#848484" stroke-width="2.4" fill="none" stroke-linejoin="miter" filter="url(#jag)"/>
<path d="M337.0 356.0L337.0 379.5L254.5 379.5L254.5 394.0L197.5 394.0L197.5 380.0L169.0 380.0L169.0 353.0" stroke="#848484" stroke-width="2.4" fill="none" stroke-linejoin="miter" filter="url(#jag)"/>
<path d="M567.5 225.0L569.5 222.8L571.9 225.8L573.9 221.9L575.6 226.0L578.0 222.5L579.9 225.8L581.4 222.0L582.4 225.0h6.0M589.6 225.0L592.1 222.9L594.2 225.5L595.7 221.7L598.1 226.0L599.7 221.7L602.3 226.0L603.3 225.0M604.7 225.0L606.6 225.9L608.5 221.8L610.8 226.5L612.3 220.3L614.6 226.3L617.1 220.0L618.5 225.9L620.6 221.3L621.6 225.0M624.5 253.0L626.7 253.5L629.3 251.1L631.9 253.4L633.3 250.5L634.3 253.0h5.2M640.6 253.0L642.5 250.9L644.4 254.3L646.2 249.9L647.8 253.5L649.3 248.6L651.1 254.9L653.3 250.4L655.1 254.5L656.9 249.4L658.4 254.1L660.5 248.5L662.9 253.6L663.9 253.0M669.6 253.0L672.2 250.6L673.6 254.4L675.7 250.5L678.1 253.9L680.3 250.1L681.3 253.0M592.0 309.0L593.5 310.8L596.1 305.7L597.8 309.8L600.1 305.2L601.6 310.2L604.1 304.7L605.1 309.0h2.6M606.5 309.0L609.0 306.1L611.2 310.0L613.1 306.1L615.4 310.0L617.6 306.9L620.2 310.1L621.2 309.0h4.8M623.5 309.0L624.9 306.3L627.2 309.5L629.8 306.2L632.1 309.9L633.5 306.7L635.7 311.0L636.7 309.0M642.2 309.0L644.6 310.2L646.7 305.8L648.7 309.9L650.2 305.8L652.3 310.0L653.8 305.8L654.8 309.0h3.7M657.2 309.0L659.5 306.6L661.4 309.7L663.5 306.1L665.4 310.7L668.0 305.6L670.1 309.5L672.2 305.1L673.9 309.5L676.0 306.3L677.6 310.0L679.7 305.1L681.3 309.7L683.2 305.4L684.2 309.0h3.5M561.0 344.0L563.0 341.8L564.7 346.0L567.0 341.1L569.2 345.2L571.5 339.9L572.5 344.0h3.8M580.4 344.0L582.1 344.5L584.2 340.6L586.2 344.5L587.9 339.5L589.5 345.4L591.9 339.4L593.5 345.3L594.5 344.0M535.0 333.0L537.3 328.9L539.3 335.0L541.8 330.2L544.2 334.1L546.1 329.2L547.8 333.6L550.3 330.0L551.3 333.0h3.6M558.4 333.0L559.8 330.9L561.5 333.9L562.5 333.0h5.0M498.0 345.0L499.8 341.0L501.4 346.5L504.0 340.9L505.5 346.6L507.1 342.6L508.8 346.3L510.8 340.8L512.4 346.4L514.3 343.2L516.5 345.4L518.3 342.6L519.9 345.5L522.3 341.2L523.3 345.0h2.5M529.5 345.0L531.3 341.8L533.2 346.8L535.8 340.0L536.8 345.0M337.0 362.0L339.0 363.4L340.8 358.0L343.1 363.5L345.1 358.1L347.0 363.7L348.5 359.8L351.0 363.0L352.4 359.4L353.4 362.0M356.2 362.0L358.0 362.9L359.8 358.3L362.2 363.3L363.9 359.5L365.7 362.8L367.9 359.7L369.3 362.4L371.4 358.2L373.9 363.6L376.2 360.3L378.5 362.8L380.6 360.2L382.3 362.5L383.3 362.0M390.8 362.0L392.7 363.2L393.7 362.0h3.2M254.5 383.5L256.7 379.5L259.1 385.4L260.6 380.0L262.3 384.5L264.3 379.8L266.1 385.2L268.5 379.5L270.9 385.0L272.4 379.6L274.7 385.3L276.2 380.8L278.4 384.4L279.4 383.5M282.3 383.5L284.6 381.2L286.6 384.1L289.0 380.2L290.6 384.4L292.1 381.3L294.0 384.9L295.8 381.2L297.7 384.9L298.7 383.5M299.7 383.5L302.1 384.7L304.1 380.7L306.5 384.5L308.6 380.4L311.1 383.8L313.0 381.9L315.1 384.7L316.5 382.1L318.2 384.6L320.3 381.2L321.3 383.5M325.3 383.5L326.7 379.3L329.1 385.3L331.3 380.3L333.2 384.3L335.2 379.6L337.5 383.9L338.5 383.5M197.5 398.0L199.4 398.6L201.6 394.3L203.4 399.0L205.0 393.7L207.0 398.5L209.1 394.3L210.1 398.0M217.0 398.0L219.1 394.3L221.4 399.7L222.8 394.0L225.3 399.2L227.3 395.4L229.0 399.2L230.0 398.0h5.9M234.9 398.0L236.5 399.1L238.9 396.1L240.6 399.4L242.5 394.2L243.9 399.2L245.8 394.6L247.3 398.7L249.0 395.2L251.1 398.6L252.1 398.0h2.2M254.1 398.0L255.8 399.6L256.8 398.0M169.0 384.0L170.5 381.4L172.0 384.6L173.7 381.9L175.8 384.8L177.6 382.4L179.4 384.6L181.9 380.8L182.9 384.0h5.1M185.6 384.0L187.6 385.0L190.1 380.9L192.2 385.0L193.6 382.1L195.1 384.5L196.8 382.1L198.3 385.0L199.3 384.0h4.1" stroke="#7c7c7c" stroke-width="1.3" fill="none"/>
</g>
<polygon points="42.5,132.0 115.0,131.0 195.0,129.0 295.0,128.0 455.0,128.0 555.0,128.5 635.0,130.0 695.5,131.3 701.5,154.0 702.0,229.0 701.5,365.5 699.0,366.5 699.0,401.5 555.0,401.0 395.0,401.0 115.0,401.2 114.0,403.0 44.0,403.3 41.0,299.0 39.3,233.0 38.3,232.0" fill="none" stroke="#8c8c8c" stroke-width="1.2"/>
</svg>
</div>

<!-- STATUS BAR -->
<div id="status" class="abs" style="left:0;top:628px;width:1177px;height:29px;background:#efefef">
<div class="field" style="left:4px;top:3px;width:248px;height:23px"></div>
<svg class="abs" style="left:11px;top:6px" width="15" height="15" viewBox="0 0 15 15"><circle cx="6" cy="6" r="4.2" fill="none" stroke="#8a8a8a" stroke-width="1.3"/><path d="M9 9L13 13.4" stroke="#8a8a8a" stroke-width="1.6" stroke-linecap="round"/></svg>
<div class="abs gt" style="left:32.5px;top:7px;line-height:16px;color:#7c7c7c;white-space:nowrap;letter-spacing:0.291px">Type to locate (Ctrl+K)</div>
<div class="sb" style="left:260px;top:6.7000000000000455px;color:#000;letter-spacing:-0.047px;">Ready</div>
<div class="sb" style="left:343.8px;top:6.7000000000000455px;color:#000;letter-spacing:0.164px;">Coordinate</div>
<div class="field" style="left:396.8px;top:3px;width:96.39999999999998px;height:21.5px"></div>
<div class="sb" style="left:409px;top:6.7000000000000455px;color:#000;letter-spacing:0.303px;">45.54°, 10.597°</div>
<svg class="abs" style="left:498px;top:5px" width="17" height="17" viewBox="0 0 17 17"><g transform="rotate(-28 8 9)"><rect x="3.4" y="2.6" width="9.4" height="13" rx="4.4" fill="#fff" stroke="#2a2a2a" stroke-width="1.1"/><path d="M3.4 8H12.8M8.1 2.6V8" stroke="#2a2a2a" stroke-width="0.9"/><path d="M3.6 7.6C3.6 3.6 5.6 2.8 8 2.8V7.6Z" fill="#555"/><circle cx="9.6" cy="11.6" r="2.1" fill="#fff" stroke="#8a2a2a" stroke-width="0.9"/></g><path d="M12.4 3.4L15.4 1.2M13.6 5.6L16 4.6" stroke="#3a3a3a" stroke-width="0.8"/><path d="M1 9.6L3 10.6M1.4 12.6L3.4 12.8" stroke="#3a3a3a" stroke-width="0.7"/></svg>
<div class="sb" style="left:527.5px;top:6.7000000000000455px;color:#000;letter-spacing:-0.034px;">Scale</div>
<div class="field" style="left:555px;top:3.5px;width:96px;height:22.0px"></div>
<div class="abs" style="left:630.5px;top:4px;width:1px;height:20.5px;background:#c8c8c8"></div>
<div class="abs" style="left:630.5px;top:4.5px;width:19.5px;height:20px;background:linear-gradient(#fafafa,#ececec);border-left:1px solid #c8c8c8;border-radius:0 2px 2px 0"></div>
<div class="sb" style="left:560px;top:6.7000000000000455px;color:#000;letter-spacing:0.306px;">1:1628139</div>
<div class="abs" style="left:636px;top:13px;width:0;height:0;border-left:4px solid transparent;border-right:4px solid transparent;border-top:4px solid #4a4a4a"></div>
<svg class="abs" style="left:662px;top:6px" width="15" height="16" viewBox="0 0 15 16"><path d="M4 7.4V5C4 0.8 11 0.8 11 5V7.4" stroke="#8a8a8a" stroke-width="1.7" fill="none"/><rect x="1.4" y="7" width="12.2" height="8.4" rx="1.4" fill="#7d7d7d"/></svg>
<div class="sb" style="left:684.5px;top:6.7000000000000455px;color:#000;letter-spacing:0.222px;">Magnifier</div>
<div class="field" style="left:730.5px;top:3.5px;width:90.5px;height:22.0px"></div>
<div class="abs" style="left:806px;top:4px;width:1px;height:20.5px;background:#c8c8c8"></div>
<div class="sb" style="left:736px;top:6.7000000000000455px;color:#000;letter-spacing:0.199px;">100%</div>
<svg class="abs" style="left:808.5px;top:7px" width="9" height="15" viewBox="0 0 9 15"><path d="M1 5.6L4.5 1.8L8 5.6Z M1 9.4L4.5 13.2L8 9.4Z" fill="#4a4a4a"/></svg>
<div class="sb" style="left:830px;top:6.7000000000000455px;color:#000;letter-spacing:0.164px;">Rotation</div>
<div class="field" style="left:877.5px;top:3.5px;width:90.5px;height:22.0px"></div>
<div class="abs" style="left:953.5px;top:4px;width:1px;height:20.5px;background:#c8c8c8"></div>
<div class="sb" style="left:883px;top:6.7000000000000455px;color:#000;letter-spacing:0.303px;">0.0 °</div>
<svg class="abs" style="left:955.5px;top:7px" width="9" height="15" viewBox="0 0 9 15"><path d="M1 5.6L4.5 1.8L8 5.6Z M1 9.4L4.5 13.2L8 9.4Z" fill="#4a4a4a"/></svg>
<div class="abs" style="left:974.5px;top:8.5px;width:13px;height:13px;background:#fff;border:1px solid #9a9a9a;border-radius:2px"></div>
<svg class="abs" style="left:974.5px;top:8.5px" width="13" height="13" viewBox="0 0 13 13"><path d="M3 6.4L5.4 10L10.2 2.6" stroke="#111" stroke-width="1.6" fill="none"/></svg>
<div class="sb" style="left:993.5px;top:6.7000000000000455px;color:#000;letter-spacing:0.010px;">Render</div>
<svg class="abs" style="left:1039.5px;top:8px" width="16" height="14" viewBox="0 0 16 14"><ellipse cx="8" cy="7" rx="6.4" ry="6.2" fill="#f4f4f4" stroke="#4a4a4a" stroke-width="0.9"/><ellipse cx="8" cy="7" rx="3" ry="6.2" fill="none" stroke="#5a5a5a" stroke-width="0.7"/><path d="M8 0.8V13.2M1.6 7H14.4M2.6 3.8H13.4M2.6 10.2H13.4" stroke="#5a5a5a" stroke-width="0.7"/><path d="M0.4 3.4H15.6M0.4 10.6H15.6" stroke="#6a6a6a" stroke-width="0.6"/></svg>
<div class="sb" style="left:1059px;top:6.7000000000000455px;color:#000;letter-spacing:-0.194px;">EPSG:4326</div>
<svg class="abs" style="left:1131px;top:8px" width="18" height="16" viewBox="0 0 18 16"><path d="M8.4 0.6C13 0.6 16.6 3 16.6 6.4C16.6 8.6 15.2 10.4 13 11.4C13.6 12.8 14.6 13.8 15.6 14.6C13.6 14.8 11.6 14 10.4 12.2C9.8 12.2 9 12.2 8.4 12.2C3.8 12.2 0.4 9.8 0.4 6.4C0.4 3 3.800000000000001 0.6 8.4 0.6Z" fill="#666"/><circle cx="4.6" cy="6.6" r="1.3" fill="#fff"/><circle cx="8.4" cy="6.6" r="1.3" fill="#fff"/><circle cx="12.2" cy="6.6" r="1.3" fill="#fff"/></svg>
<svg class="abs" style="left:1165px;top:17px" width="11" height="11" viewBox="0 0 11 11"><rect x="9" y="0" width="1" height="1" fill="#a8a8a8"/><rect x="6" y="3" width="1" height="1" fill="#a8a8a8"/><rect x="9" y="3" width="1" height="1" fill="#a8a8a8"/><rect x="3" y="6" width="1" height="1" fill="#a8a8a8"/><rect x="6" y="6" width="1" height="1" fill="#a8a8a8"/><rect x="9" y="6" width="1" height="1" fill="#a8a8a8"/><rect x="0" y="9" width="1" height="1" fill="#a8a8a8"/><rect x="3" y="9" width="1" height="1" fill="#a8a8a8"/><rect x="6" y="9" width="1" height="1" fill="#a8a8a8"/><rect x="9" y="9" width="1" height="1" fill="#a8a8a8"/></svg>
</div>

</div>
</body>
</html>
